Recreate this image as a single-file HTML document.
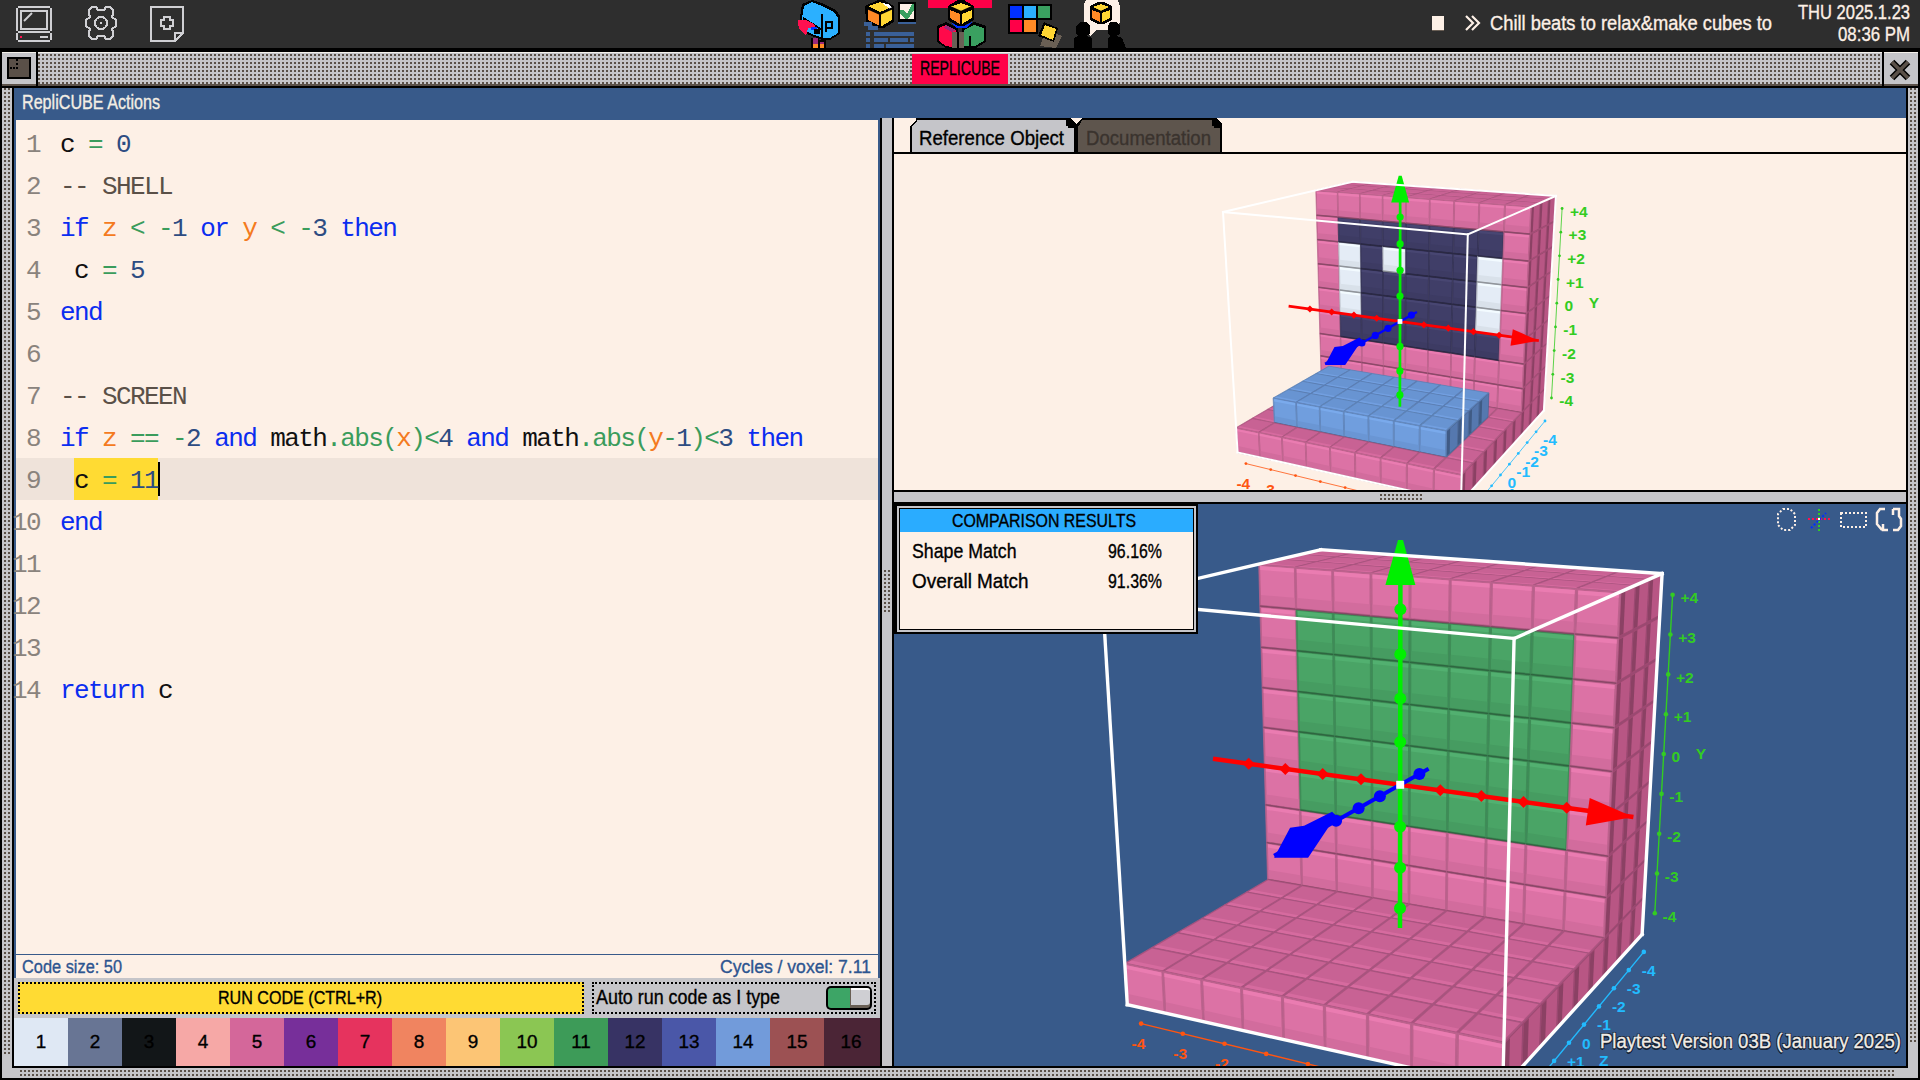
<!DOCTYPE html>
<html><head><meta charset="utf-8">
<style>
*{margin:0;padding:0;box-sizing:border-box}
html,body{width:1920px;height:1080px;overflow:hidden;background:#000;font-family:"Liberation Sans",sans-serif}
.a{position:absolute}
.dots{background-color:#5a5048;background-image:linear-gradient(90deg,transparent 2px,#c5c5c9 2px),linear-gradient(transparent 2px,#c5c5c9 2px);background-size:4px 4px}
.mono{font-family:"Liberation Mono",monospace}
.t{position:absolute;white-space:pre;line-height:1.117;transform-origin:0 0;-webkit-text-stroke:0.35px currentColor}
.code{font-size:26px;letter-spacing:-1.6px;color:#111}
.ln{height:42px;line-height:42px;white-space:pre;position:relative;width:862px}
.ln i{font-style:normal;color:#8a837d;position:absolute;right:838px;top:0}
.ln b{font-weight:normal;position:absolute;left:44px;top:0}
k{color:#0b2df0}v{color:#f47a20}o{color:#3a9c5c}n{color:#2d4c82}c{color:#5a5048}
.sw{position:absolute;top:1018px;height:48px;width:54px}
.dotb{position:absolute;border:2px dotted #000}
</style></head><body>
<!-- top bar -->
<div class="a" style="left:0;top:0;width:1920px;height:48px;background:#2e2e2e"></div>
<svg class="a" style="left:0;top:0" width="1920" height="48" viewBox="0 0 1920 48">
 <g fill="none" stroke="#cfcfd3" stroke-width="2" shape-rendering="crispEdges">
  <path d="M18,7 H50 M17,8 V31 M51,8 V31 M18,32 H50 M17,33 V40 M51,33 V40 M18,41 H50"/>
  <rect x="21" y="11" width="26" height="18"/>
  <path d="M92,7 H96 L98,10 H104 L106,7 H110 L113,10 V14 L112,17 L116,20 V26 L112,29 L113,32 V36 L110,39 H106 L104,36 H98 L96,39 H92 L89,36 V32 L90,29 L86,26 V20 L90,17 L89,14 V10 Z"/>
  <circle cx="101" cy="23" r="6"/>
  <path d="M151,7 H183 V33 L175,41 H151 Z M175,41 V33 H183"/>
  <path d="M164,17 H170 V20 H173 V26 H170 V29 H164 V26 H161 V20 H164 Z"/>
 </g>
 <path d="M24,21 L32,13" stroke="#cfcfd3" stroke-width="2"/>
 <rect x="20" y="36" width="2" height="2" fill="#ff1050"/>
 <rect x="40" y="36" width="8" height="2" fill="#cfcfd3"/>
 <rect x="100" y="22" width="2" height="2" fill="#cfcfd3"/>
 <!-- mailbox -->
 <g shape-rendering="crispEdges">
  <polygon points="802,4 812,0 824,4 836,10 840,16 840,34 830,40 822,40 812,36 802,32 800,18" fill="#000"/>
  <polygon points="804,6 812,2 822,6 834,12 838,18 838,33 830,38 823,38 812,34 804,30 802,18" fill="#2bb0ff"/>
  <polygon points="822,14 826,12 834,16 836,20 836,32 830,36 826,36 822,34" fill="#000" opacity="0.0"/>
  <path d="M803,18 L822,30 M822,14 V38" stroke="#000" stroke-width="2"/>
  <path d="M826,32 V22 H832 V28 H826" stroke="#000" stroke-width="1.6" fill="none"/>
  <polygon points="798,20 806,20 814,24 816,28 808,28 806,36 800,30 798,24" fill="#ff1050"/>
  <rect x="811" y="27" width="6" height="3" fill="#0030ff"/>
  <rect x="814" y="29" width="6" height="5" fill="#000"/>
  <rect x="811" y="38" width="8" height="10" fill="#000"/><rect x="813" y="38" width="5" height="6" fill="#9b2a7a"/><rect x="813" y="44" width="5" height="4" fill="#ff8a26"/>
  <rect x="819" y="40" width="7" height="8" fill="#000"/><rect x="820" y="42" width="4" height="2" fill="#9b2a7a"/><rect x="820" y="44" width="4" height="4" fill="#ff8a26"/>
 </g>
 <!-- cube + check + list -->
 <g shape-rendering="crispEdges">
  <polygon points="878,0 884,0 894,6 894,22 884,28 878,28 866,22 865,6" fill="#000"/>
  <polygon points="868,8 880,14 880,26 868,20" fill="#ff8a26"/>
  <polygon points="880,14 892,8 892,20 882,26 880,26" fill="#ffd633"/>
  <polygon points="868,6 880,2 892,7 880,12" fill="#ffd633"/>
  <polygon points="882,3 888,4 892,8 890,9" fill="#fff"/>
  <rect x="864" y="22" width="8" height="4" fill="#3a6098"/><rect x="868" y="26" width="10" height="4" fill="#3a6098"/>
  <rect x="898" y="2" width="18" height="20" fill="#000"/><rect x="900" y="4" width="14" height="15" fill="#fdf0e6"/>
  <polygon points="900,10 904,10 907,14 912,4 914,4 914,10 908,19 905,19 900,14" fill="#3aa060"/>
  <rect x="898" y="22" width="18" height="2" fill="#3a6098"/>
  <rect x="866" y="32" width="4" height="4" fill="#3a6098"/><rect x="874" y="32" width="40" height="4" fill="#3a6098"/>
  <rect x="866" y="38" width="4" height="4" fill="#3a6098"/><rect x="874" y="38" width="14" height="4" fill="#3a6098"/><rect x="890" y="38" width="18" height="4" fill="#3a6098"/><rect x="910" y="38" width="4" height="4" fill="#3a6098"/>
  <rect x="866" y="44" width="4" height="4" fill="#3a6098"/><rect x="874" y="44" width="10" height="4" fill="#3a6098"/><rect x="886" y="44" width="28" height="4" fill="#3a6098"/>
 </g>
 <path d="M867,8 L880,14 L893,8 M880,14 V27" stroke="#000" stroke-width="2" fill="none"/>
 <!-- selected trio -->
 <g shape-rendering="crispEdges">
  <rect x="928" y="0" width="64" height="8" fill="#ff0048"/>
  <polygon points="958,0 964,0 974,6 974,20 964,26 958,26 948,20 948,6" fill="#000"/>
  <polygon points="950,10 960,14 960,24 950,18" fill="#ff8a26"/>
  <polygon points="962,14 972,10 972,18 962,24" fill="#ffd633"/>
  <polygon points="950,7 961,3 972,7 961,12" fill="#ffd633"/>
  <polygon points="937,26 946,22 958,28 958,48 946,48 937,42" fill="#000"/>
  <polygon points="939,28 946,25 956,30 956,48 946,46 939,41" fill="#ff0a4a"/>
  <polygon points="946,25 956,30 952,32 944,28" fill="#9b2a7a"/>
  <polygon points="962,28 974,22 986,26 986,42 976,48 962,48" fill="#000"/>
  <polygon points="964,30 974,25 984,28 984,41 975,46 964,46" fill="#3aa060"/>
  <rect x="952" y="32" width="12" height="16" fill="#6a6055"/>
  <path d="M958,32 V48 M970,36 V48" stroke="#000" stroke-width="2"/>
  <polygon points="950,22 958,26 964,26 972,22 966,28 956,28" fill="#0030ff"/>
 </g>
 <path d="M950,7 L961,12 L972,7 M961,12 V25" stroke="#000" stroke-width="2" fill="none"/>
 <!-- colour grid -->
 <g shape-rendering="crispEdges">
  <rect x="1008" y="4" width="44" height="16" fill="#000"/><rect x="1008" y="18" width="30" height="16" fill="#000"/>
  <rect x="1010" y="6" width="12" height="12" fill="#0030ff"/><rect x="1024" y="6" width="12" height="12" fill="#2bb0ff"/><rect x="1038" y="6" width="12" height="12" fill="#3aa060"/>
  <rect x="1010" y="20" width="12" height="12" fill="#ff0048"/><rect x="1024" y="20" width="12" height="12" fill="#ff8a26"/>
  <polygon points="1046,30 1062,36 1056,48 1040,46" fill="#6a6055"/>
  <polygon points="1044,22 1058,28 1054,42 1038,36" fill="#000"/>
  <polygon points="1045,25 1056,29 1053,40 1041,35" fill="#ffd633"/>
 </g>
 <!-- speech bubble people -->
 <g shape-rendering="crispEdges">
  <polygon points="1086,0 1118,0 1120,6 1120,22 1112,30 1096,30 1090,36 1088,34 1084,24 1084,4" fill="#fdf0e6"/>
  <polygon points="1098,2 1104,2 1112,6 1112,20 1104,24 1098,24 1090,20 1090,6" fill="#000"/>
  <polygon points="1092,10 1100,13 1100,22 1092,18" fill="#ff8a26"/>
  <polygon points="1102,13 1110,10 1110,18 1102,22" fill="#ffd633"/>
  <polygon points="1093,7 1101,4 1109,7 1101,11" fill="#ffd633"/>
  <polygon points="1080,22 1086,22 1090,26 1090,34 1086,36 1092,38 1092,48 1074,48 1074,38 1078,36 1076,34 1076,26" fill="#000"/>
  <polygon points="1110,22 1116,22 1120,26 1120,34 1116,36 1122,38 1126,48 1108,48 1108,38 1110,36 1108,34 1108,26" fill="#000"/>
 </g>
 <path d="M1092,8 L1101,12 L1110,8 M1101,12 V23" stroke="#000" stroke-width="2" fill="none"/>
 <!-- right side -->
 <rect x="1432" y="16" width="12" height="14" fill="#fdf0e6"/><rect x="1432" y="30" width="12" height="1" fill="#6a5f55"/>
 <path d="M1466,16 L1473,23 L1466,30 M1472,16 L1479,23 L1472,30" stroke="#fdf0e6" stroke-width="2.2" fill="none"/>
</svg>
<!-- title bar -->
<div class="a" style="left:2px;top:52px;width:34px;height:34px;background:#c5c5c9;border-top:1px solid #f4f0ea;border-bottom:2px solid #5a5048"></div>
<div class="a" style="left:7px;top:57px;width:24px;height:22px;background:#5a5048;border:2px solid #000"></div>
<div class="a" style="left:16px;top:59px;width:2px;height:2px;background:#000"></div><div class="a" style="left:16px;top:63px;width:2px;height:2px;background:#000"></div>
<div class="a" style="left:10px;top:67px;width:2px;height:2px;background:#000"></div><div class="a" style="left:13px;top:67px;width:2px;height:2px;background:#000"></div><div class="a" style="left:16px;top:67px;width:2px;height:2px;background:#000"></div>
<div class="a dots" style="left:38px;top:52px;width:1844px;height:32px;background-position:0 2px"></div>
<div class="a" style="left:38px;top:52px;width:1844px;height:1px;background:#f4f0ea"></div>
<div class="a" style="left:38px;top:84px;width:1844px;height:2px;background:#5a5048"></div>
<div class="a" style="left:912px;top:54px;width:96px;height:30px;background:#ff0048"></div>
<div class="a" style="left:1884px;top:52px;width:34px;height:34px;background:#c5c5c9;border-top:1px solid #f4f0ea;border-bottom:2px solid #5a5048"></div>
<svg class="a" style="left:1884px;top:52px" width="34" height="34"><path d="M8,10 L24,26 M24,10 L8,26" stroke="#000" stroke-width="6.5"/><path d="M8,10 L24,26 M24,10 L8,26" stroke="#5a5048" stroke-width="3.5"/></svg>
<!-- frame dotted borders -->
<div class="a dots" style="left:2px;top:88px;width:10px;height:980px;background-position:2px 0"></div>
<div class="a dots" style="left:1908px;top:88px;width:10px;height:980px;background-position:2px 0"></div>
<div class="a dots" style="left:2px;top:1068px;width:1916px;height:10px;background-position:2px 2px"></div>
<div class="a" style="left:2px;top:1056px;width:10px;height:22px;background:#c5c5c9"></div>
<div class="a" style="left:12px;top:1068px;width:8px;height:10px;background:#c5c5c9"></div>
<div class="a" style="left:1908px;top:1044px;width:10px;height:34px;background:#c5c5c9"></div>
<div class="a" style="left:1896px;top:1068px;width:12px;height:10px;background:#c5c5c9"></div>
<!-- blue header -->
<div class="a" style="left:14px;top:88px;width:1892px;height:30px;background:#385a8a"></div>
<!-- code panel -->
<div class="a" style="left:14px;top:118px;width:866px;height:860px;background:#fdf0e6;border:2px solid #385a8a;border-bottom:none"></div>
<div class="a" style="left:14px;top:954px;width:866px;height:1px;background:#385a8a"></div>
<div class="a" style="left:16px;top:458px;width:862px;height:42px;background:#efe3da"></div>
<div class="a" style="left:74px;top:458px;width:84px;height:42px;background:#ffdb33"></div>
<div class="a" style="left:158px;top:462px;width:2px;height:34px;background:#000"></div>
<div class="a mono code" style="left:16px;top:123.6px">
<div class="ln"><i>1</i><b>c <o>=</o> <n>0</n></b></div>
<div class="ln"><i>2</i><b><c>-- SHELL</c></b></div>
<div class="ln"><i>3</i><b><k>if</k> <v>z</v> <o>&lt;</o> <o>-</o><n>1</n> <k>or</k> <v>y</v> <o>&lt;</o> <o>-</o><n>3</n> <k>then</k></b></div>
<div class="ln"><i>4</i><b> c <o>=</o> <n>5</n></b></div>
<div class="ln"><i>5</i><b><k>end</k></b></div>
<div class="ln"><i>6</i><b></b></div>
<div class="ln"><i>7</i><b><c>-- SCREEN</c></b></div>
<div class="ln"><i>8</i><b><k>if</k> <v>z</v> <o>==</o> <o>-</o><n>2</n> <k>and</k> math<o>.abs(</o><v>x</v><o>)&lt;</o><n>4</n> <k>and</k> math<o>.abs(</o><v>y</v><o>-</o><n>1</n><o>)&lt;</o><n>3</n> <k>then</k></b></div>
<div class="ln"><i>9</i><b> c <o>=</o> <n>11</n></b></div>
<div class="ln"><i>10</i><b><k>end</k></b></div>
<div class="ln"><i>11</i><b></b></div>
<div class="ln"><i>12</i><b></b></div>
<div class="ln"><i>13</i><b></b></div>
<div class="ln"><i>14</i><b><k>return</k> c</b></div>
</div>
<!-- grey control strip -->
<div class="a" style="left:14px;top:978px;width:866px;height:40px;background:#c5c5c9"></div>
<div class="dotb" style="left:18px;top:982px;width:566px;height:32px;background:#ffdb33"></div>
<div class="dotb" style="left:592px;top:982px;width:284px;height:32px"></div>
<div class="a" style="left:826px;top:986px;width:46px;height:24px;background:#000;border-radius:5px"></div>
<div class="a" style="left:828px;top:988px;width:22px;height:20px;background:#3da566;border-radius:3px 0 0 3px"></div>
<div class="a" style="left:850px;top:988px;width:20px;height:20px;background:#6a6055;border-radius:0 3px 3px 0"></div>
<div class="a" style="left:851px;top:988px;width:19px;height:17px;background:#cfcfd3;border-radius:0 3px 3px 0;border-top:2px solid #fff"></div>
<!-- palette -->
<div class="sw" style="left:14px;background:#dfe8f4"></div>
<div class="sw" style="left:68px;background:#687594"></div>
<div class="sw" style="left:122px;background:#121618"></div>
<div class="sw" style="left:176px;background:#f6a8a6"></div>
<div class="sw" style="left:230px;background:#d4679a"></div>
<div class="sw" style="left:284px;background:#772f9a"></div>
<div class="sw" style="left:338px;background:#e6335e"></div>
<div class="sw" style="left:392px;background:#f08460"></div>
<div class="sw" style="left:446px;background:#fcc575"></div>
<div class="sw" style="left:500px;background:#8bc653"></div>
<div class="sw" style="left:554px;background:#3d9b58"></div>
<div class="sw" style="left:608px;background:#373364"></div>
<div class="sw" style="left:662px;background:#4a57a8"></div>
<div class="sw" style="left:716px;background:#729bda"></div>
<div class="sw" style="left:770px;background:#9c5153"></div>
<div class="sw" style="left:824px;width:56px;background:#4b2536"></div>
<!-- vertical splitter -->
<div class="a" style="left:882px;top:118px;width:10px;height:948px;background:#c5c5c9"></div>
<div class="a dots" style="left:883px;top:570px;width:8px;height:44px;background-position:1px 0"></div>
<!-- right top panel -->
<div class="a" style="left:894px;top:118px;width:1012px;height:372px;background:#fdf0e6;overflow:hidden">
<svg class="a" style="left:-894px;top:-118px" width="1920" height="1080">
<defs><clipPath id="ct"><rect x="894" y="154" width="1012" height="336"/></clipPath></defs>
<g clip-path="url(#ct)" font-family="Liberation Sans" font-weight="bold">
<polygon points="1352.7,181.7 1341.0,184.4 1362.0,185.9 1373.4,183.1" fill="#ac547f" stroke="#ac547f" stroke-width="0.7"/>
<polygon points="1353.1,181.8 1342.3,184.3 1361.6,185.7 1372.1,183.1" fill="#c86294"/>
<polygon points="1342.3,184.3 1361.6,185.7 1363.3,185.3 1344.1,183.9" fill="#d66b9f"/>
<polygon points="1321.1,377.9 1341.5,381.5 1341.0,359.2 1320.5,355.8" fill="#bd628d" stroke="#bd628d" stroke-width="0.7"/>
<polygon points="1321.9,377.2 1340.6,380.4 1340.2,359.9 1321.3,356.9" fill="#dc72a5"/>
<polygon points="1321.3,356.9 1340.2,359.9 1340.2,362.0 1321.4,358.9" fill="#ea7cb1"/>
<polygon points="1321.7,372.1 1340.5,375.3 1340.6,380.4 1321.9,377.2" fill="#d26c9d"/>
<line x1="1321.1" y1="377.9" x2="1341.5" y2="381.5" stroke="#63334a" stroke-width="1.5" opacity="0.55"/>
<polygon points="1373.4,183.1 1362.0,185.9 1383.5,187.4 1394.5,184.6" fill="#ac547f" stroke="#ac547f" stroke-width="0.7"/>
<polygon points="1373.8,183.3 1363.3,185.9 1383.1,187.3 1393.2,184.6" fill="#c86294"/>
<polygon points="1363.3,185.9 1383.1,187.3 1384.7,186.8 1365.0,185.4" fill="#d66b9f"/>
<polygon points="1321.1,377.9 1308.6,385.3 1329.3,389.0 1341.5,381.5" fill="#ac547f" stroke="#ac547f" stroke-width="0.7"/>
<polygon points="1321.4,378.4 1309.9,385.1 1329.0,388.5 1340.2,381.6" fill="#c86294"/>
<polygon points="1309.9,385.1 1329.0,388.5 1330.8,387.4 1311.8,384.0" fill="#d66b9f"/>
<polygon points="1320.5,355.8 1341.0,359.2 1340.5,336.5 1319.8,333.4" fill="#bd628d" stroke="#bd628d" stroke-width="0.7"/>
<polygon points="1321.2,355.1 1340.1,358.1 1339.7,337.3 1320.7,334.4" fill="#dc72a5"/>
<polygon points="1320.7,334.4 1339.7,337.3 1339.8,339.4 1320.7,336.5" fill="#ea7cb1"/>
<polygon points="1321.1,349.9 1340.0,352.9 1340.1,358.1 1321.2,355.1" fill="#d26c9d"/>
<line x1="1320.5" y1="355.8" x2="1341.0" y2="359.2" stroke="#63334a" stroke-width="1.5" opacity="0.55"/>
<polygon points="1341.5,381.5 1362.3,385.1 1362.0,362.6 1341.0,359.2" fill="#bd628d" stroke="#bd628d" stroke-width="0.7"/>
<polygon points="1342.3,380.7 1361.4,384.1 1361.1,363.3 1341.8,360.2" fill="#dc72a5"/>
<polygon points="1341.8,360.2 1361.1,363.3 1361.2,365.4 1341.9,362.3" fill="#ea7cb1"/>
<polygon points="1342.2,375.6 1361.3,378.9 1361.4,384.1 1342.3,380.7" fill="#d26c9d"/>
<line x1="1341.5" y1="381.5" x2="1362.3" y2="385.1" stroke="#63334a" stroke-width="1.5" opacity="0.55"/>
<polygon points="1341.0,184.4 1328.7,187.3 1350.1,188.9 1362.0,185.9" fill="#ac547f" stroke="#ac547f" stroke-width="0.7"/>
<polygon points="1341.3,184.6 1330.0,187.2 1349.7,188.7 1360.7,186.0" fill="#c86294"/>
<polygon points="1330.0,187.2 1349.7,188.7 1351.5,188.2 1331.9,186.8" fill="#d66b9f"/>
<polygon points="1394.5,184.6 1383.5,187.4 1405.4,189.0 1416.0,186.1" fill="#ac547f" stroke="#ac547f" stroke-width="0.7"/>
<polygon points="1394.9,184.7 1384.8,187.4 1405.0,188.8 1414.8,186.1" fill="#c86294"/>
<polygon points="1384.8,187.4 1405.0,188.8 1406.6,188.4 1386.4,187.0" fill="#d66b9f"/>
<polygon points="1319.8,333.4 1340.5,336.5 1340.1,313.4 1319.2,310.5" fill="#bd628d" stroke="#bd628d" stroke-width="0.7"/>
<polygon points="1320.6,332.6 1339.7,335.4 1339.2,314.2 1320.0,311.6" fill="#dc72a5"/>
<polygon points="1320.0,311.6 1339.2,314.2 1339.3,316.4 1320.1,313.7" fill="#ea7cb1"/>
<polygon points="1320.5,327.4 1339.6,330.2 1339.7,335.4 1320.6,332.6" fill="#d26c9d"/>
<line x1="1319.8" y1="333.4" x2="1340.5" y2="336.5" stroke="#63334a" stroke-width="1.5" opacity="0.55"/>
<polygon points="1341.5,381.5 1329.3,389.0 1350.5,392.8 1362.3,385.1" fill="#ac547f" stroke="#ac547f" stroke-width="0.7"/>
<polygon points="1341.8,381.9 1330.6,388.8 1350.1,392.3 1361.0,385.2" fill="#c86294"/>
<polygon points="1330.6,388.8 1350.1,392.3 1351.9,391.1 1332.4,387.7" fill="#d66b9f"/>
<polygon points="1543.9,410.5 1545.2,388.3 1537.7,396.0 1536.5,418.7" fill="#9e4971" stroke="#9e4971" stroke-width="0.7"/>
<polygon points="1543.7,409.9 1544.8,389.5 1537.9,396.6 1536.8,417.5" fill="#b85684"/>
<polygon points="1536.8,417.5 1537.9,396.6 1540.0,394.5 1538.9,415.2" fill="#8b4164"/>
<polygon points="1341.0,359.2 1362.0,362.6 1361.7,339.7 1340.5,336.5" fill="#bd628d" stroke="#bd628d" stroke-width="0.7"/>
<polygon points="1341.8,358.4 1361.1,361.5 1360.8,340.5 1341.4,337.5" fill="#dc72a5"/>
<polygon points="1341.4,337.5 1360.8,340.5 1360.9,342.6 1341.4,339.6" fill="#ea7cb1"/>
<polygon points="1341.7,353.2 1361.1,356.3 1361.1,361.5 1341.8,358.4" fill="#d26c9d"/>
<line x1="1341.0" y1="359.2" x2="1362.0" y2="362.6" stroke="#63334a" stroke-width="1.5" opacity="0.55"/>
<polygon points="1319.2,310.5 1340.1,313.4 1339.6,290.0 1318.5,287.3" fill="#bd628d" stroke="#bd628d" stroke-width="0.7"/>
<polygon points="1320.0,309.7 1339.2,312.4 1338.7,290.8 1319.4,288.3" fill="#dc72a5"/>
<polygon points="1319.4,288.3 1338.7,290.8 1338.8,293.0 1319.5,290.5" fill="#ea7cb1"/>
<polygon points="1319.8,304.4 1339.1,307.0 1339.2,312.4 1320.0,309.7" fill="#d26c9d"/>
<line x1="1319.2" y1="310.5" x2="1340.1" y2="313.4" stroke="#63334a" stroke-width="1.5" opacity="0.55"/>
<polygon points="1362.3,385.1 1383.5,388.8 1383.4,366.1 1362.0,362.6" fill="#bd628d" stroke="#bd628d" stroke-width="0.7"/>
<polygon points="1363.1,384.3 1382.7,387.7 1382.6,366.8 1362.8,363.6" fill="#dc72a5"/>
<polygon points="1362.8,363.6 1382.6,366.8 1382.6,368.9 1362.9,365.7" fill="#ea7cb1"/>
<polygon points="1363.0,379.2 1382.6,382.5 1382.7,387.7 1363.1,384.3" fill="#d26c9d"/>
<line x1="1362.3" y1="385.1" x2="1383.5" y2="388.8" stroke="#63334a" stroke-width="1.5" opacity="0.55"/>
<polygon points="1362.0,185.9 1350.1,188.9 1371.9,190.5 1383.5,187.4" fill="#ac547f" stroke="#ac547f" stroke-width="0.7"/>
<polygon points="1362.4,186.1 1351.4,188.8 1371.5,190.3 1382.2,187.5" fill="#c86294"/>
<polygon points="1351.4,188.8 1371.5,190.3 1373.3,189.8 1353.2,188.4" fill="#d66b9f"/>
<polygon points="1416.0,186.1 1405.4,189.0 1427.9,190.6 1438.1,187.6" fill="#ac547f" stroke="#ac547f" stroke-width="0.7"/>
<polygon points="1416.5,186.3 1406.7,189.0 1427.4,190.4 1436.8,187.7" fill="#c86294"/>
<polygon points="1406.7,189.0 1427.4,190.4 1428.9,190.0 1408.3,188.5" fill="#d66b9f"/>
<polygon points="1308.6,385.3 1295.5,392.9 1316.5,396.8 1329.3,389.0" fill="#ac547f" stroke="#ac547f" stroke-width="0.7"/>
<polygon points="1308.9,385.7 1296.8,392.8 1316.2,396.3 1328.0,389.1" fill="#c86294"/>
<polygon points="1296.8,392.8 1316.2,396.3 1318.1,395.2 1298.8,391.6" fill="#d66b9f"/>
<polygon points="1340.5,336.5 1361.7,339.7 1361.4,316.4 1340.1,313.4" fill="#373559" stroke="#373559" stroke-width="0.7"/>
<polygon points="1341.4,335.7 1360.8,338.6 1360.5,317.2 1340.9,314.5" fill="#403e68"/>
<polygon points="1340.9,314.5 1360.5,317.2 1360.6,319.4 1341.0,316.6" fill="#484672"/>
<polygon points="1341.2,330.4 1360.8,333.3 1360.8,338.6 1341.4,335.7" fill="#3d3b63"/>
<line x1="1340.5" y1="336.5" x2="1361.7" y2="339.7" stroke="#1c1b2e" stroke-width="1.5" opacity="0.55"/>
<polygon points="1545.2,388.3 1546.4,365.6 1538.9,372.9 1537.7,396.0" fill="#9e4971" stroke="#9e4971" stroke-width="0.7"/>
<polygon points="1544.9,387.7 1546.1,366.8 1539.2,373.6 1538.0,394.8" fill="#b85684"/>
<polygon points="1538.0,394.8 1539.2,373.6 1541.3,371.5 1540.1,392.6" fill="#8b4164"/>
<polygon points="1318.5,287.3 1339.6,290.0 1339.1,266.1 1317.9,263.7" fill="#bd628d" stroke="#bd628d" stroke-width="0.7"/>
<polygon points="1319.3,286.5 1338.7,288.9 1338.2,266.9 1318.7,264.7" fill="#dc72a5"/>
<polygon points="1318.7,264.7 1338.2,266.9 1338.3,269.2 1318.8,266.9" fill="#ea7cb1"/>
<polygon points="1319.2,281.1 1338.6,283.4 1338.7,288.9 1319.3,286.5" fill="#d26c9d"/>
<line x1="1318.5" y1="287.3" x2="1339.6" y2="290.0" stroke="#63334a" stroke-width="1.5" opacity="0.55"/>
<polygon points="1362.3,385.1 1350.5,392.8 1372.1,396.6 1383.5,388.8" fill="#ac547f" stroke="#ac547f" stroke-width="0.7"/>
<polygon points="1362.7,385.5 1351.8,392.6 1371.7,396.1 1382.2,388.9" fill="#c86294"/>
<polygon points="1351.8,392.6 1371.7,396.1 1373.4,395.0 1353.6,391.4" fill="#d66b9f"/>
<polygon points="1362.0,362.6 1383.4,366.1 1383.3,342.9 1361.7,339.7" fill="#bd628d" stroke="#bd628d" stroke-width="0.7"/>
<polygon points="1362.8,361.8 1382.6,365.0 1382.4,343.7 1362.6,340.7" fill="#dc72a5"/>
<polygon points="1362.6,340.7 1382.4,343.7 1382.5,345.9 1362.6,342.8" fill="#ea7cb1"/>
<polygon points="1362.8,356.6 1382.5,359.7 1382.6,365.0 1362.8,361.8" fill="#d26c9d"/>
<line x1="1362.0" y1="362.6" x2="1383.4" y2="366.1" stroke="#63334a" stroke-width="1.5" opacity="0.55"/>
<polygon points="1317.9,263.7 1339.1,266.1 1338.6,241.8 1317.2,239.6" fill="#bd628d" stroke="#bd628d" stroke-width="0.7"/>
<polygon points="1318.7,262.8 1338.2,265.0 1337.7,242.7 1318.1,240.7" fill="#dc72a5"/>
<polygon points="1318.1,240.7 1337.7,242.7 1337.8,244.9 1318.1,242.9" fill="#ea7cb1"/>
<polygon points="1318.5,257.3 1338.1,259.5 1338.2,265.0 1318.7,262.8" fill="#d26c9d"/>
<line x1="1317.9" y1="263.7" x2="1339.1" y2="266.1" stroke="#63334a" stroke-width="1.5" opacity="0.55"/>
<polygon points="1328.7,187.3 1315.8,190.3 1337.6,191.9 1350.1,188.9" fill="#ac547f" stroke="#ac547f" stroke-width="0.7"/>
<polygon points="1329.0,187.5 1317.2,190.2 1337.2,191.8 1348.7,188.9" fill="#c86294"/>
<polygon points="1317.2,190.2 1337.2,191.8 1339.1,191.3 1319.1,189.8" fill="#d66b9f"/>
<polygon points="1383.5,388.8 1405.3,392.6 1405.3,369.6 1383.4,366.1" fill="#bd628d" stroke="#bd628d" stroke-width="0.7"/>
<polygon points="1384.4,388.0 1404.4,391.5 1404.5,370.4 1384.3,367.1" fill="#dc72a5"/>
<polygon points="1384.3,367.1 1404.5,370.4 1404.5,372.5 1384.3,369.2" fill="#ea7cb1"/>
<polygon points="1384.4,382.8 1404.4,386.3 1404.4,391.5 1384.4,388.0" fill="#d26c9d"/>
<line x1="1383.5" y1="388.8" x2="1405.3" y2="392.6" stroke="#63334a" stroke-width="1.5" opacity="0.55"/>
<polygon points="1340.1,313.4 1361.4,316.4 1361.1,292.7 1339.6,290.0" fill="#c4cad3" stroke="#c4cad3" stroke-width="0.7"/>
<polygon points="1340.9,312.6 1360.5,315.3 1360.2,293.5 1340.4,291.0" fill="#e4ecf6"/>
<polygon points="1340.4,291.0 1360.2,293.5 1360.3,295.7 1340.5,293.2" fill="#f3fbff"/>
<polygon points="1340.8,307.2 1360.4,309.9 1360.5,315.3 1340.9,312.6" fill="#d9e1ea"/>
<line x1="1340.1" y1="313.4" x2="1361.4" y2="316.4" stroke="#666a6e" stroke-width="1.5" opacity="0.55"/>
<polygon points="1438.1,187.6 1427.9,190.6 1450.8,192.3 1460.6,189.2" fill="#ac547f" stroke="#ac547f" stroke-width="0.7"/>
<polygon points="1438.6,187.8 1429.2,190.6 1450.3,192.1 1459.3,189.3" fill="#c86294"/>
<polygon points="1429.2,190.6 1450.3,192.1 1451.8,191.6 1430.7,190.1" fill="#d66b9f"/>
<polygon points="1546.4,365.6 1547.7,342.6 1540.1,349.4 1538.9,372.9" fill="#9e4971" stroke="#9e4971" stroke-width="0.7"/>
<polygon points="1546.2,365.0 1547.4,343.8 1540.4,350.1 1539.3,371.7" fill="#b85684"/>
<polygon points="1539.3,371.7 1540.4,350.1 1542.5,348.2 1541.4,369.7" fill="#8b4164"/>
<polygon points="1383.5,187.4 1371.9,190.5 1394.3,192.1 1405.4,189.0" fill="#ac547f" stroke="#ac547f" stroke-width="0.7"/>
<polygon points="1383.9,187.6 1373.3,190.4 1393.8,191.9 1404.1,189.1" fill="#c86294"/>
<polygon points="1373.3,190.4 1393.8,191.9 1395.5,191.5 1375.0,190.0" fill="#d66b9f"/>
<polygon points="1317.2,239.6 1338.6,241.8 1338.1,217.1 1316.5,215.2" fill="#bd628d" stroke="#bd628d" stroke-width="0.7"/>
<polygon points="1318.0,238.7 1337.7,240.7 1337.2,218.0 1317.4,216.2" fill="#dc72a5"/>
<polygon points="1317.4,216.2 1337.2,218.0 1337.3,220.3 1317.4,218.5" fill="#ea7cb1"/>
<polygon points="1317.9,233.2 1337.6,235.1 1337.7,240.7 1318.0,238.7" fill="#d26c9d"/>
<line x1="1317.2" y1="239.6" x2="1338.6" y2="241.8" stroke="#63334a" stroke-width="1.5" opacity="0.55"/>
<polygon points="1361.7,339.7 1383.3,342.9 1383.2,319.4 1361.4,316.4" fill="#373559" stroke="#373559" stroke-width="0.7"/>
<polygon points="1362.5,338.9 1382.4,341.9 1382.3,320.2 1362.3,317.4" fill="#403e68"/>
<polygon points="1362.3,317.4 1382.3,320.2 1382.3,322.4 1362.3,319.6" fill="#484672"/>
<polygon points="1362.5,333.5 1382.4,336.5 1382.4,341.9 1362.5,338.9" fill="#3d3b63"/>
<line x1="1361.7" y1="339.7" x2="1383.3" y2="342.9" stroke="#1c1b2e" stroke-width="1.5" opacity="0.55"/>
<polygon points="1383.5,388.8 1372.1,396.6 1394.2,400.6 1405.3,392.6" fill="#ac547f" stroke="#ac547f" stroke-width="0.7"/>
<polygon points="1384.0,389.2 1373.5,396.5 1393.8,400.1 1404.0,392.7" fill="#c86294"/>
<polygon points="1373.5,396.5 1393.8,400.1 1395.5,398.9 1375.2,395.3" fill="#d66b9f"/>
<polygon points="1339.6,290.0 1361.1,292.7 1360.8,268.6 1339.1,266.1" fill="#c4cad3" stroke="#c4cad3" stroke-width="0.7"/>
<polygon points="1340.4,289.1 1360.2,291.6 1359.9,269.4 1340.0,267.1" fill="#e4ecf6"/>
<polygon points="1340.0,267.1 1359.9,269.4 1359.9,271.7 1340.0,269.4" fill="#f3fbff"/>
<polygon points="1340.3,283.7 1360.1,286.1 1360.2,291.6 1340.4,289.1" fill="#d9e1ea"/>
<line x1="1339.6" y1="290.0" x2="1361.1" y2="292.7" stroke="#666a6e" stroke-width="1.5" opacity="0.55"/>
<polygon points="1536.5,418.7 1537.7,396.0 1529.8,404.2 1528.6,427.4" fill="#9e4971" stroke="#9e4971" stroke-width="0.7"/>
<polygon points="1536.2,418.2 1537.3,397.3 1530.1,404.8 1529.0,426.1" fill="#b85684"/>
<polygon points="1529.0,426.1 1530.1,404.8 1532.3,402.5 1531.2,423.7" fill="#8b4164"/>
<polygon points="1383.4,366.1 1405.3,369.6 1405.4,346.3 1383.3,342.9" fill="#bd628d" stroke="#bd628d" stroke-width="0.7"/>
<polygon points="1384.3,365.3 1404.5,368.5 1404.5,347.1 1384.2,344.0" fill="#dc72a5"/>
<polygon points="1384.2,344.0 1404.5,347.1 1404.5,349.2 1384.2,346.1" fill="#ea7cb1"/>
<polygon points="1384.3,360.0 1404.5,363.2 1404.5,368.5 1384.3,365.3" fill="#d26c9d"/>
<line x1="1383.4" y1="366.1" x2="1405.3" y2="369.6" stroke="#63334a" stroke-width="1.5" opacity="0.55"/>
<polygon points="1316.5,215.2 1338.1,217.1 1337.6,191.9 1315.8,190.3" fill="#bd628d" stroke="#bd628d" stroke-width="0.7"/>
<polygon points="1317.3,214.3 1337.2,216.0 1336.7,192.9 1316.7,191.4" fill="#dc72a5"/>
<polygon points="1316.7,191.4 1336.7,192.9 1336.8,195.2 1316.8,193.7" fill="#ea7cb1"/>
<polygon points="1317.2,208.6 1337.1,210.3 1337.2,216.0 1317.3,214.3" fill="#d26c9d"/>
<line x1="1316.5" y1="215.2" x2="1338.1" y2="217.1" stroke="#63334a" stroke-width="1.5" opacity="0.55"/>
<polygon points="1547.7,342.6 1549.0,319.2 1541.4,325.5 1540.1,349.4" fill="#9e4971" stroke="#9e4971" stroke-width="0.7"/>
<polygon points="1547.5,342.0 1548.7,320.4 1541.7,326.2 1540.5,348.2" fill="#b85684"/>
<polygon points="1540.5,348.2 1541.7,326.2 1543.8,324.4 1542.6,346.3" fill="#8b4164"/>
<polygon points="1405.3,392.6 1427.5,396.4 1427.8,373.2 1405.3,369.6" fill="#bd628d" stroke="#bd628d" stroke-width="0.7"/>
<polygon points="1406.2,391.8 1426.6,395.4 1426.8,374.0 1406.2,370.7" fill="#dc72a5"/>
<polygon points="1406.2,370.7 1426.8,374.0 1426.8,376.2 1406.2,372.8" fill="#ea7cb1"/>
<polygon points="1406.2,386.6 1426.7,390.1 1426.6,395.4 1406.2,391.8" fill="#d26c9d"/>
<line x1="1405.3" y1="392.6" x2="1427.5" y2="396.4" stroke="#63334a" stroke-width="1.5" opacity="0.55"/>
<polygon points="1460.6,189.2 1450.8,192.3 1474.3,194.0 1483.6,190.8" fill="#ac547f" stroke="#ac547f" stroke-width="0.7"/>
<polygon points="1461.1,189.4 1452.2,192.2 1473.7,193.8 1482.3,190.9" fill="#c86294"/>
<polygon points="1452.2,192.2 1473.7,193.8 1475.1,193.3 1453.6,191.8" fill="#d66b9f"/>
<polygon points="1295.5,392.9 1281.7,401.0 1303.2,405.1 1316.5,396.8" fill="#ac547f" stroke="#ac547f" stroke-width="0.7"/>
<polygon points="1295.8,393.4 1283.1,400.8 1302.8,404.6 1315.2,397.0" fill="#c86294"/>
<polygon points="1283.1,400.8 1302.8,404.6 1304.8,403.3 1285.2,399.6" fill="#d66b9f"/>
<polygon points="1361.4,316.4 1383.2,319.4 1383.1,295.5 1361.1,292.7" fill="#373559" stroke="#373559" stroke-width="0.7"/>
<polygon points="1362.2,315.6 1382.3,318.3 1382.2,296.3 1362.0,293.7" fill="#403e68"/>
<polygon points="1362.0,293.7 1382.2,296.3 1382.2,298.5 1362.0,295.9" fill="#484672"/>
<polygon points="1362.2,310.1 1382.3,312.9 1382.3,318.3 1362.2,315.6" fill="#3d3b63"/>
<line x1="1361.4" y1="316.4" x2="1383.2" y2="319.4" stroke="#1c1b2e" stroke-width="1.5" opacity="0.55"/>
<polygon points="1339.1,266.1 1360.8,268.6 1360.5,244.0 1338.6,241.8" fill="#c4cad3" stroke="#c4cad3" stroke-width="0.7"/>
<polygon points="1339.9,265.2 1359.9,267.5 1359.6,244.9 1339.5,242.9" fill="#e4ecf6"/>
<polygon points="1339.5,242.9 1359.6,244.9 1359.6,247.2 1339.5,245.1" fill="#f3fbff"/>
<polygon points="1339.8,259.7 1359.8,261.9 1359.9,267.5 1339.9,265.2" fill="#d9e1ea"/>
<line x1="1339.1" y1="266.1" x2="1360.8" y2="268.6" stroke="#666a6e" stroke-width="1.5" opacity="0.55"/>
<polygon points="1350.1,188.9 1337.6,191.9 1359.8,193.6 1371.9,190.5" fill="#ac547f" stroke="#ac547f" stroke-width="0.7"/>
<polygon points="1350.5,189.0 1339.0,191.9 1359.4,193.4 1370.6,190.5" fill="#c86294"/>
<polygon points="1339.0,191.9 1359.4,193.4 1361.2,193.0 1340.8,191.4" fill="#d66b9f"/>
<polygon points="1328.7,366.2 1315.8,373.6 1337.6,377.3 1350.1,369.8" fill="#597fb4" stroke="#597fb4" stroke-width="0.7"/>
<polygon points="1329.1,366.6 1317.2,373.4 1337.2,376.8 1348.7,369.9" fill="#6894d2"/>
<polygon points="1317.2,373.4 1337.2,376.8 1339.1,375.7 1319.2,372.3" fill="#729fe0"/>
<polygon points="1405.4,189.0 1394.3,192.1 1417.2,193.8 1427.9,190.6" fill="#ac547f" stroke="#ac547f" stroke-width="0.7"/>
<polygon points="1405.9,189.2 1395.7,192.1 1416.7,193.6 1426.5,190.7" fill="#c86294"/>
<polygon points="1395.7,192.1 1416.7,193.6 1418.3,193.1 1397.3,191.6" fill="#d66b9f"/>
<polygon points="1537.7,396.0 1538.9,372.9 1531.0,380.6 1529.8,404.2" fill="#9e4971" stroke="#9e4971" stroke-width="0.7"/>
<polygon points="1537.4,395.4 1538.5,374.2 1531.3,381.2 1530.2,402.9" fill="#b85684"/>
<polygon points="1530.2,402.9 1531.3,381.2 1533.5,379.1 1532.4,400.7" fill="#8b4164"/>
<polygon points="1383.3,342.9 1405.4,346.3 1405.5,322.5 1383.2,319.4" fill="#373559" stroke="#373559" stroke-width="0.7"/>
<polygon points="1384.2,342.1 1404.5,345.2 1404.6,323.3 1384.1,320.5" fill="#403e68"/>
<polygon points="1384.1,320.5 1404.6,323.3 1404.6,325.5 1384.1,322.7" fill="#484672"/>
<polygon points="1384.2,336.7 1404.5,339.7 1404.5,345.2 1384.2,342.1" fill="#3d3b63"/>
<line x1="1383.3" y1="342.9" x2="1405.4" y2="346.3" stroke="#1c1b2e" stroke-width="1.5" opacity="0.55"/>
<polygon points="1549.0,319.2 1550.3,295.4 1542.7,301.2 1541.4,325.5" fill="#9e4971" stroke="#9e4971" stroke-width="0.7"/>
<polygon points="1548.8,318.5 1550.0,296.6 1543.0,301.9 1541.8,324.3" fill="#b85684"/>
<polygon points="1541.8,324.3 1543.0,301.9 1545.1,300.3 1543.9,322.5" fill="#8b4164"/>
<polygon points="1405.3,392.6 1394.2,400.6 1416.9,404.6 1427.5,396.4" fill="#ac547f" stroke="#ac547f" stroke-width="0.7"/>
<polygon points="1405.7,393.0 1395.6,400.4 1416.4,404.1 1426.2,396.6" fill="#c86294"/>
<polygon points="1395.6,400.4 1416.4,404.1 1418.0,402.9 1397.2,399.2" fill="#d66b9f"/>
<polygon points="1338.6,241.8 1360.5,244.0 1360.1,219.1 1338.1,217.1" fill="#373559" stroke="#373559" stroke-width="0.7"/>
<polygon points="1339.4,240.9 1359.6,242.9 1359.3,220.0 1339.0,218.2" fill="#403e68"/>
<polygon points="1339.0,218.2 1359.3,220.0 1359.3,222.3 1339.0,220.5" fill="#484672"/>
<polygon points="1339.3,235.3 1359.5,237.2 1359.6,242.9 1339.4,240.9" fill="#3d3b63"/>
<line x1="1338.6" y1="241.8" x2="1360.5" y2="244.0" stroke="#1c1b2e" stroke-width="1.5" opacity="0.55"/>
<polygon points="1361.1,292.7 1383.1,295.5 1383.0,271.1 1360.8,268.6" fill="#373559" stroke="#373559" stroke-width="0.7"/>
<polygon points="1361.9,291.8 1382.2,294.4 1382.1,272.0 1361.7,269.6" fill="#403e68"/>
<polygon points="1361.7,269.6 1382.1,272.0 1382.1,274.2 1361.7,271.9" fill="#484672"/>
<polygon points="1361.9,286.3 1382.2,288.8 1382.2,294.4 1361.9,291.8" fill="#3d3b63"/>
<line x1="1361.1" y1="292.7" x2="1383.1" y2="295.5" stroke="#1c1b2e" stroke-width="1.5" opacity="0.55"/>
<polygon points="1405.3,369.6 1427.8,373.2 1428.0,349.7 1405.4,346.3" fill="#bd628d" stroke="#bd628d" stroke-width="0.7"/>
<polygon points="1406.2,368.8 1426.9,372.2 1427.1,350.5 1406.3,347.3" fill="#dc72a5"/>
<polygon points="1406.3,347.3 1427.1,350.5 1427.1,352.7 1406.3,349.5" fill="#ea7cb1"/>
<polygon points="1406.3,363.5 1426.9,366.8 1426.9,372.2 1406.2,368.8" fill="#d26c9d"/>
<line x1="1405.3" y1="369.6" x2="1427.8" y2="373.2" stroke="#63334a" stroke-width="1.5" opacity="0.55"/>
<polygon points="1483.6,190.8 1474.3,194.0 1498.3,195.7 1507.2,192.5" fill="#ac547f" stroke="#ac547f" stroke-width="0.7"/>
<polygon points="1484.2,191.0 1475.6,193.9 1497.7,195.5 1505.9,192.5" fill="#c86294"/>
<polygon points="1475.6,193.9 1497.7,195.5 1499.0,195.0 1477.0,193.4" fill="#d66b9f"/>
<polygon points="1427.5,396.4 1450.2,400.4 1450.7,377.0 1427.8,373.2" fill="#bd628d" stroke="#bd628d" stroke-width="0.7"/>
<polygon points="1428.4,395.7 1449.3,399.3 1449.7,377.8 1428.7,374.3" fill="#dc72a5"/>
<polygon points="1428.7,374.3 1449.7,377.8 1449.7,379.9 1428.6,376.5" fill="#ea7cb1"/>
<polygon points="1428.5,390.4 1449.4,393.9 1449.3,399.3 1428.4,395.7" fill="#d26c9d"/>
<line x1="1427.5" y1="396.4" x2="1450.2" y2="400.4" stroke="#63334a" stroke-width="1.5" opacity="0.55"/>
<polygon points="1338.1,217.1 1360.1,219.1 1359.8,193.6 1337.6,191.9" fill="#bd628d" stroke="#bd628d" stroke-width="0.7"/>
<polygon points="1338.9,216.2 1359.2,218.0 1358.9,194.6 1338.5,193.0" fill="#dc72a5"/>
<polygon points="1338.5,193.0 1358.9,194.6 1359.0,196.9 1338.5,195.4" fill="#ea7cb1"/>
<polygon points="1338.8,210.4 1359.2,212.2 1359.2,218.0 1338.9,216.2" fill="#d26c9d"/>
<line x1="1338.1" y1="217.1" x2="1360.1" y2="219.1" stroke="#63334a" stroke-width="1.5" opacity="0.55"/>
<polygon points="1550.3,295.4 1551.7,271.2 1544.0,276.4 1542.7,301.2" fill="#9e4971" stroke="#9e4971" stroke-width="0.7"/>
<polygon points="1550.1,294.7 1551.3,272.4 1544.3,277.2 1543.1,299.9" fill="#b85684"/>
<polygon points="1543.1,299.9 1544.3,277.2 1546.4,275.7 1545.2,298.3" fill="#8b4164"/>
<polygon points="1383.2,319.4 1405.5,322.5 1405.6,298.3 1383.1,295.5" fill="#373559" stroke="#373559" stroke-width="0.7"/>
<polygon points="1384.1,318.6 1404.6,321.4 1404.7,299.2 1384.0,296.5" fill="#403e68"/>
<polygon points="1384.0,296.5 1404.7,299.2 1404.7,301.4 1384.0,298.8" fill="#484672"/>
<polygon points="1384.1,313.1 1404.6,315.9 1404.6,321.4 1384.1,318.6" fill="#3d3b63"/>
<line x1="1383.2" y1="319.4" x2="1405.5" y2="322.5" stroke="#1c1b2e" stroke-width="1.5" opacity="0.55"/>
<polygon points="1427.9,190.6 1417.2,193.8 1440.6,195.5 1450.8,192.3" fill="#ac547f" stroke="#ac547f" stroke-width="0.7"/>
<polygon points="1428.4,190.8 1418.5,193.7 1440.0,195.3 1449.5,192.3" fill="#c86294"/>
<polygon points="1418.5,193.7 1440.0,195.3 1441.6,194.8 1420.1,193.3" fill="#d66b9f"/>
<polygon points="1360.8,268.6 1383.0,271.1 1382.8,246.3 1360.5,244.0" fill="#373559" stroke="#373559" stroke-width="0.7"/>
<polygon points="1361.6,267.7 1382.1,270.0 1381.9,247.2 1361.4,245.1" fill="#403e68"/>
<polygon points="1361.4,245.1 1381.9,247.2 1382.0,249.5 1361.4,247.4" fill="#484672"/>
<polygon points="1361.6,262.1 1382.0,264.3 1382.1,270.0 1361.6,267.7" fill="#3d3b63"/>
<line x1="1360.8" y1="268.6" x2="1383.0" y2="271.1" stroke="#1c1b2e" stroke-width="1.5" opacity="0.55"/>
<polygon points="1371.9,190.5 1359.8,193.6 1382.6,195.4 1394.3,192.1" fill="#ac547f" stroke="#ac547f" stroke-width="0.7"/>
<polygon points="1372.3,190.7 1361.2,193.6 1382.2,195.2 1392.9,192.2" fill="#c86294"/>
<polygon points="1361.2,193.6 1382.2,195.2 1383.9,194.7 1363.0,193.1" fill="#d66b9f"/>
<polygon points="1538.9,372.9 1540.1,349.4 1532.2,356.6 1531.0,380.6" fill="#9e4971" stroke="#9e4971" stroke-width="0.7"/>
<polygon points="1538.6,372.3 1539.8,350.7 1532.5,357.3 1531.4,379.3" fill="#b85684"/>
<polygon points="1531.4,379.3 1532.5,357.3 1534.7,355.2 1533.6,377.2" fill="#8b4164"/>
<polygon points="1350.1,369.8 1337.6,377.3 1359.8,381.1 1371.9,373.4" fill="#597fb4" stroke="#597fb4" stroke-width="0.7"/>
<polygon points="1350.4,370.2 1339.0,377.1 1359.4,380.6 1370.5,373.6" fill="#6894d2"/>
<polygon points="1339.0,377.1 1359.4,380.6 1361.2,379.5 1340.8,376.0" fill="#729fe0"/>
<polygon points="1427.5,396.4 1416.9,404.6 1440.0,408.8 1450.2,400.4" fill="#ac547f" stroke="#ac547f" stroke-width="0.7"/>
<polygon points="1428.0,396.9 1418.2,404.5 1439.5,408.3 1448.9,400.5" fill="#c86294"/>
<polygon points="1418.2,404.5 1439.5,408.3 1441.1,407.0 1419.8,403.2" fill="#d66b9f"/>
<polygon points="1405.4,346.3 1428.0,349.7 1428.3,325.7 1405.5,322.5" fill="#373559" stroke="#373559" stroke-width="0.7"/>
<polygon points="1406.3,345.4 1427.1,348.6 1427.4,326.5 1406.4,323.6" fill="#403e68"/>
<polygon points="1406.4,323.6 1427.4,326.5 1427.4,328.7 1406.4,325.8" fill="#484672"/>
<polygon points="1406.3,340.0 1427.2,343.1 1427.1,348.6 1406.3,345.4" fill="#3d3b63"/>
<line x1="1405.4" y1="346.3" x2="1428.0" y2="349.7" stroke="#1c1b2e" stroke-width="1.5" opacity="0.55"/>
<polygon points="1507.2,192.5 1498.3,195.7 1522.9,197.5 1531.2,194.1" fill="#ac547f" stroke="#ac547f" stroke-width="0.7"/>
<polygon points="1507.8,192.6 1499.7,195.6 1522.3,197.3 1529.9,194.2" fill="#c86294"/>
<polygon points="1499.7,195.6 1522.3,197.3 1523.5,196.8 1501.0,195.1" fill="#d66b9f"/>
<polygon points="1551.7,271.2 1553.1,246.5 1545.4,251.1 1544.0,276.4" fill="#9e4971" stroke="#9e4971" stroke-width="0.7"/>
<polygon points="1551.4,270.4 1552.7,247.7 1545.6,252.0 1544.4,275.2" fill="#b85684"/>
<polygon points="1544.4,275.2 1545.6,252.0 1547.8,250.7 1546.5,273.7" fill="#8b4164"/>
<polygon points="1427.8,373.2 1450.7,377.0 1451.2,353.1 1428.0,349.7" fill="#bd628d" stroke="#bd628d" stroke-width="0.7"/>
<polygon points="1428.7,372.5 1449.8,375.9 1450.2,354.0 1428.9,350.7" fill="#dc72a5"/>
<polygon points="1428.9,350.7 1450.2,354.0 1450.2,356.2 1428.9,352.9" fill="#ea7cb1"/>
<polygon points="1428.7,367.1 1449.9,370.4 1449.8,375.9 1428.7,372.5" fill="#d26c9d"/>
<line x1="1427.8" y1="373.2" x2="1450.7" y2="377.0" stroke="#63334a" stroke-width="1.5" opacity="0.55"/>
<polygon points="1360.5,244.0 1382.8,246.3 1382.7,221.1 1360.1,219.1" fill="#373559" stroke="#373559" stroke-width="0.7"/>
<polygon points="1361.3,243.1 1381.9,245.2 1381.8,222.0 1361.1,220.1" fill="#403e68"/>
<polygon points="1361.1,220.1 1381.8,222.0 1381.8,224.3 1361.1,222.5" fill="#484672"/>
<polygon points="1361.3,237.4 1381.9,239.4 1381.9,245.2 1361.3,243.1" fill="#3d3b63"/>
<line x1="1360.5" y1="244.0" x2="1382.8" y2="246.3" stroke="#1c1b2e" stroke-width="1.5" opacity="0.55"/>
<polygon points="1528.6,427.4 1529.8,404.2 1521.5,412.8 1520.4,436.5" fill="#9e4971" stroke="#9e4971" stroke-width="0.7"/>
<polygon points="1528.4,426.8 1529.4,405.5 1521.8,413.4 1520.8,435.2" fill="#b85684"/>
<polygon points="1520.8,435.2 1521.8,413.4 1524.2,411.0 1523.1,432.6" fill="#8b4164"/>
<polygon points="1450.2,400.4 1473.4,404.4 1474.1,380.8 1450.7,377.0" fill="#bd628d" stroke="#bd628d" stroke-width="0.7"/>
<polygon points="1451.1,399.6 1472.5,403.3 1473.2,381.6 1451.6,378.1" fill="#dc72a5"/>
<polygon points="1451.6,378.1 1473.2,381.6 1473.1,383.8 1451.5,380.2" fill="#ea7cb1"/>
<polygon points="1451.3,394.3 1472.7,397.9 1472.5,403.3 1451.1,399.6" fill="#d26c9d"/>
<line x1="1450.2" y1="400.4" x2="1473.4" y2="404.4" stroke="#63334a" stroke-width="1.5" opacity="0.55"/>
<polygon points="1383.1,295.5 1405.6,298.3 1405.7,273.7 1383.0,271.1" fill="#373559" stroke="#373559" stroke-width="0.7"/>
<polygon points="1384.0,294.6 1404.7,297.2 1404.7,274.6 1383.9,272.2" fill="#403e68"/>
<polygon points="1383.9,272.2 1404.7,274.6 1404.7,276.9 1383.9,274.4" fill="#484672"/>
<polygon points="1383.9,289.0 1404.7,291.6 1404.7,297.2 1384.0,294.6" fill="#3d3b63"/>
<line x1="1383.1" y1="295.5" x2="1405.6" y2="298.3" stroke="#1c1b2e" stroke-width="1.5" opacity="0.55"/>
<polygon points="1281.7,401.0 1267.3,409.4 1289.1,413.7 1303.2,405.1" fill="#ac547f" stroke="#ac547f" stroke-width="0.7"/>
<polygon points="1282.0,401.5 1268.7,409.3 1288.8,413.2 1301.7,405.2" fill="#c86294"/>
<polygon points="1268.7,409.3 1288.8,413.2 1290.9,411.9 1270.9,408.0" fill="#d66b9f"/>
<polygon points="1540.1,349.4 1541.4,325.5 1533.4,332.1 1532.2,356.6" fill="#9e4971" stroke="#9e4971" stroke-width="0.7"/>
<polygon points="1539.9,348.8 1541.0,326.7 1533.7,332.8 1532.6,355.3" fill="#b85684"/>
<polygon points="1532.6,355.3 1533.7,332.8 1535.9,331.0 1534.8,353.3" fill="#8b4164"/>
<polygon points="1315.8,373.6 1302.3,381.3 1324.4,385.2 1337.6,377.3" fill="#597fb4" stroke="#597fb4" stroke-width="0.7"/>
<polygon points="1316.2,374.0 1303.7,381.1 1324.1,384.7 1336.2,377.5" fill="#6894d2"/>
<polygon points="1303.7,381.1 1324.1,384.7 1326.1,383.5 1305.8,380.0" fill="#729fe0"/>
<polygon points="1360.1,219.1 1382.7,221.1 1382.6,195.4 1359.8,193.6" fill="#bd628d" stroke="#bd628d" stroke-width="0.7"/>
<polygon points="1361.0,218.1 1381.8,220.0 1381.7,196.3 1360.7,194.7" fill="#dc72a5"/>
<polygon points="1360.7,194.7 1381.7,196.3 1381.7,198.7 1360.8,197.1" fill="#ea7cb1"/>
<polygon points="1361.0,212.3 1381.8,214.1 1381.8,220.0 1361.0,218.1" fill="#d26c9d"/>
<line x1="1360.1" y1="219.1" x2="1382.7" y2="221.1" stroke="#63334a" stroke-width="1.5" opacity="0.55"/>
<polygon points="1553.1,246.5 1554.5,221.4 1546.7,225.4 1545.4,251.1" fill="#9e4971" stroke="#9e4971" stroke-width="0.7"/>
<polygon points="1552.8,245.7 1554.1,222.6 1547.0,226.3 1545.7,249.9" fill="#b85684"/>
<polygon points="1545.7,249.9 1547.0,226.3 1549.2,225.2 1547.9,248.6" fill="#8b4164"/>
<polygon points="1450.8,192.3 1440.6,195.5 1464.5,197.3 1474.3,194.0" fill="#ac547f" stroke="#ac547f" stroke-width="0.7"/>
<polygon points="1451.4,192.5 1441.9,195.5 1464.0,197.1 1473.0,194.0" fill="#c86294"/>
<polygon points="1441.9,195.5 1464.0,197.1 1465.4,196.6 1443.5,195.0" fill="#d66b9f"/>
<polygon points="1405.5,322.5 1428.3,325.7 1428.6,301.2 1405.6,298.3" fill="#373559" stroke="#373559" stroke-width="0.7"/>
<polygon points="1406.4,321.7 1427.4,324.6 1427.7,302.1 1406.5,299.4" fill="#403e68"/>
<polygon points="1406.5,299.4 1427.7,302.1 1427.6,304.3 1406.5,301.6" fill="#484672"/>
<polygon points="1406.4,316.1 1427.5,319.0 1427.4,324.6 1406.4,321.7" fill="#3d3b63"/>
<line x1="1405.5" y1="322.5" x2="1428.3" y2="325.7" stroke="#1c1b2e" stroke-width="1.5" opacity="0.55"/>
<polygon points="1383.0,271.1 1405.7,273.7 1405.7,248.6 1382.8,246.3" fill="#c4cad3" stroke="#c4cad3" stroke-width="0.7"/>
<polygon points="1383.9,270.2 1404.7,272.6 1404.8,249.5 1383.8,247.4" fill="#e4ecf6"/>
<polygon points="1383.8,247.4 1404.8,249.5 1404.8,251.9 1383.8,249.7" fill="#f3fbff"/>
<polygon points="1383.8,264.5 1404.8,266.9 1404.7,272.6 1383.9,270.2" fill="#d9e1ea"/>
<line x1="1383.0" y1="271.1" x2="1405.7" y2="273.7" stroke="#666a6e" stroke-width="1.5" opacity="0.55"/>
<polygon points="1394.3,192.1 1382.6,195.4 1405.9,197.1 1417.2,193.8" fill="#ac547f" stroke="#ac547f" stroke-width="0.7"/>
<polygon points="1394.7,192.3 1384.0,195.3 1405.4,196.9 1415.8,193.9" fill="#c86294"/>
<polygon points="1384.0,195.3 1405.4,196.9 1407.1,196.4 1385.8,194.8" fill="#d66b9f"/>
<polygon points="1450.2,400.4 1440.0,408.8 1463.7,413.0 1473.4,404.4" fill="#ac547f" stroke="#ac547f" stroke-width="0.7"/>
<polygon points="1450.7,400.9 1441.4,408.6 1463.2,412.5 1472.1,404.6" fill="#c86294"/>
<polygon points="1441.4,408.6 1463.2,412.5 1464.6,411.2 1442.9,407.3" fill="#d66b9f"/>
<polygon points="1531.2,194.1 1522.9,197.5 1548.1,199.3 1555.9,195.9" fill="#ac547f" stroke="#ac547f" stroke-width="0.7"/>
<polygon points="1531.9,194.3 1524.3,197.4 1547.4,199.1 1554.6,195.9" fill="#c86294"/>
<polygon points="1524.3,197.4 1547.4,199.1 1548.6,198.5 1525.5,196.9" fill="#d66b9f"/>
<polygon points="1371.9,373.4 1359.8,381.1 1382.5,385.0 1394.2,377.1" fill="#597fb4" stroke="#597fb4" stroke-width="0.7"/>
<polygon points="1372.3,373.9 1361.2,381.0 1382.1,384.5 1392.9,377.3" fill="#6894d2"/>
<polygon points="1361.2,381.0 1382.1,384.5 1383.9,383.4 1363.0,379.8" fill="#729fe0"/>
<polygon points="1428.0,349.7 1451.2,353.1 1451.7,328.9 1428.3,325.7" fill="#373559" stroke="#373559" stroke-width="0.7"/>
<polygon points="1429.0,348.8 1450.2,352.0 1450.7,329.7 1429.2,326.8" fill="#403e68"/>
<polygon points="1429.2,326.8 1450.7,329.7 1450.6,332.0 1429.2,329.0" fill="#484672"/>
<polygon points="1429.0,343.4 1450.4,346.5 1450.2,352.0 1429.0,348.8" fill="#3d3b63"/>
<line x1="1428.0" y1="349.7" x2="1451.2" y2="353.1" stroke="#1c1b2e" stroke-width="1.5" opacity="0.55"/>
<polygon points="1554.5,221.4 1555.9,195.9 1548.1,199.3 1546.7,225.4" fill="#9e4971" stroke="#9e4971" stroke-width="0.7"/>
<polygon points="1554.2,220.6 1555.5,197.0 1548.4,200.2 1547.1,224.2" fill="#b85684"/>
<polygon points="1547.1,224.2 1548.4,200.2 1550.5,199.2 1549.3,223.1" fill="#8b4164"/>
<polygon points="1473.4,404.4 1497.2,408.5 1498.1,384.7 1474.1,380.8" fill="#bd628d" stroke="#bd628d" stroke-width="0.7"/>
<polygon points="1474.4,403.6 1496.3,407.4 1497.1,385.5 1475.1,381.9" fill="#dc72a5"/>
<polygon points="1475.1,381.9 1497.1,385.5 1497.0,387.7 1475.0,384.1" fill="#ea7cb1"/>
<polygon points="1474.6,398.2 1496.5,402.0 1496.3,407.4 1474.4,403.6" fill="#d26c9d"/>
<line x1="1473.4" y1="404.4" x2="1497.2" y2="408.5" stroke="#63334a" stroke-width="1.5" opacity="0.55"/>
<polygon points="1450.7,377.0 1474.1,380.8 1474.8,356.7 1451.2,353.1" fill="#bd628d" stroke="#bd628d" stroke-width="0.7"/>
<polygon points="1451.6,376.2 1473.2,379.7 1473.8,357.5 1452.1,354.2" fill="#dc72a5"/>
<polygon points="1452.1,354.2 1473.8,357.5 1473.8,359.8 1452.0,356.5" fill="#ea7cb1"/>
<polygon points="1451.7,370.7 1473.4,374.2 1473.2,379.7 1451.6,376.2" fill="#d26c9d"/>
<line x1="1450.7" y1="377.0" x2="1474.1" y2="380.8" stroke="#63334a" stroke-width="1.5" opacity="0.55"/>
<polygon points="1529.8,404.2 1531.0,380.6 1522.7,388.7 1521.5,412.8" fill="#9e4971" stroke="#9e4971" stroke-width="0.7"/>
<polygon points="1529.5,403.6 1530.6,381.9 1523.0,389.3 1521.9,411.5" fill="#b85684"/>
<polygon points="1521.9,411.5 1523.0,389.3 1525.3,387.0 1524.2,409.1" fill="#8b4164"/>
<polygon points="1541.4,325.5 1542.7,301.2 1534.7,307.2 1533.4,332.1" fill="#9e4971" stroke="#9e4971" stroke-width="0.7"/>
<polygon points="1541.1,324.8 1542.3,302.4 1535.0,308.0 1533.8,330.9" fill="#b85684"/>
<polygon points="1533.8,330.9 1535.0,308.0 1537.2,306.3 1536.0,329.0" fill="#8b4164"/>
<polygon points="1405.6,298.3 1428.6,301.2 1428.9,276.3 1405.7,273.7" fill="#373559" stroke="#373559" stroke-width="0.7"/>
<polygon points="1406.5,297.4 1427.7,300.1 1427.9,277.2 1406.6,274.8" fill="#403e68"/>
<polygon points="1406.6,274.8 1427.9,277.2 1427.9,279.5 1406.6,277.1" fill="#484672"/>
<polygon points="1406.5,291.8 1427.7,294.4 1427.7,300.1 1406.5,297.4" fill="#3d3b63"/>
<line x1="1405.6" y1="298.3" x2="1428.6" y2="301.2" stroke="#1c1b2e" stroke-width="1.5" opacity="0.55"/>
<polygon points="1382.8,246.3 1405.7,248.6 1405.8,223.1 1382.7,221.1" fill="#373559" stroke="#373559" stroke-width="0.7"/>
<polygon points="1383.7,245.4 1404.8,247.5 1404.9,224.1 1383.6,222.2" fill="#403e68"/>
<polygon points="1383.6,222.2 1404.9,224.1 1404.9,226.4 1383.7,224.5" fill="#484672"/>
<polygon points="1383.7,239.6 1404.8,241.7 1404.8,247.5 1383.7,245.4" fill="#3d3b63"/>
<line x1="1382.8" y1="246.3" x2="1405.7" y2="248.6" stroke="#1c1b2e" stroke-width="1.5" opacity="0.55"/>
<polygon points="1474.3,194.0 1464.5,197.3 1489.1,199.1 1498.3,195.7" fill="#ac547f" stroke="#ac547f" stroke-width="0.7"/>
<polygon points="1474.9,194.2 1465.9,197.2 1488.4,198.9 1497.0,195.8" fill="#c86294"/>
<polygon points="1465.9,197.2 1488.4,198.9 1489.8,198.4 1467.4,196.7" fill="#d66b9f"/>
<polygon points="1428.3,325.7 1451.7,328.9 1452.2,304.2 1428.6,301.2" fill="#373559" stroke="#373559" stroke-width="0.7"/>
<polygon points="1429.2,324.8 1450.7,327.8 1451.2,305.1 1429.5,302.3" fill="#403e68"/>
<polygon points="1429.5,302.3 1451.2,305.1 1451.1,307.4 1429.5,304.6" fill="#484672"/>
<polygon points="1429.3,319.2 1450.8,322.1 1450.7,327.8 1429.2,324.8" fill="#3d3b63"/>
<line x1="1428.3" y1="325.7" x2="1451.7" y2="328.9" stroke="#1c1b2e" stroke-width="1.5" opacity="0.55"/>
<polygon points="1473.4,404.4 1463.7,413.0 1488.0,417.3 1497.2,408.5" fill="#ac547f" stroke="#ac547f" stroke-width="0.7"/>
<polygon points="1474.0,404.9 1465.1,412.8 1487.4,416.8 1495.9,408.7" fill="#c86294"/>
<polygon points="1465.1,412.8 1487.4,416.8 1488.8,415.5 1466.6,411.5" fill="#d66b9f"/>
<polygon points="1382.7,221.1 1405.8,223.1 1405.9,197.1 1382.6,195.4" fill="#bd628d" stroke="#bd628d" stroke-width="0.7"/>
<polygon points="1383.6,220.1 1404.9,222.0 1405.0,198.1 1383.5,196.5" fill="#dc72a5"/>
<polygon points="1383.5,196.5 1405.0,198.1 1405.0,200.5 1383.5,198.9" fill="#ea7cb1"/>
<polygon points="1383.6,214.2 1404.9,216.1 1404.9,222.0 1383.6,220.1" fill="#d26c9d"/>
<line x1="1382.7" y1="221.1" x2="1405.8" y2="223.1" stroke="#63334a" stroke-width="1.5" opacity="0.55"/>
<polygon points="1337.6,377.3 1324.4,385.2 1347.1,389.2 1359.8,381.1" fill="#597fb4" stroke="#597fb4" stroke-width="0.7"/>
<polygon points="1337.9,377.8 1325.9,385.0 1346.7,388.7 1358.4,381.3" fill="#6894d2"/>
<polygon points="1325.9,385.0 1346.7,388.7 1348.6,387.5 1327.8,383.9" fill="#729fe0"/>
<polygon points="1497.2,408.5 1521.5,412.8 1522.7,388.7 1498.1,384.7" fill="#bd628d" stroke="#bd628d" stroke-width="0.7"/>
<polygon points="1498.2,407.8 1520.6,411.6 1521.6,389.5 1499.1,385.8" fill="#dc72a5"/>
<polygon points="1499.1,385.8 1521.6,389.5 1521.5,391.7 1499.0,388.0" fill="#ea7cb1"/>
<polygon points="1498.4,402.3 1520.9,406.1 1520.6,411.6 1498.2,407.8" fill="#d26c9d"/>
<line x1="1497.2" y1="408.5" x2="1521.5" y2="412.8" stroke="#63334a" stroke-width="1.5" opacity="0.55"/>
<polygon points="1542.7,301.2 1544.0,276.4 1536.0,281.8 1534.7,307.2" fill="#9e4971" stroke="#9e4971" stroke-width="0.7"/>
<polygon points="1542.4,300.4 1543.6,277.6 1536.2,282.6 1535.1,306.0" fill="#b85684"/>
<polygon points="1535.1,306.0 1536.2,282.6 1538.5,281.1 1537.3,304.3" fill="#8b4164"/>
<polygon points="1451.2,353.1 1474.8,356.7 1475.5,332.2 1451.7,328.9" fill="#373559" stroke="#373559" stroke-width="0.7"/>
<polygon points="1452.1,352.3 1473.9,355.6 1474.5,333.1 1452.6,330.0" fill="#403e68"/>
<polygon points="1452.6,330.0 1474.5,333.1 1474.5,335.3 1452.5,332.2" fill="#484672"/>
<polygon points="1452.2,346.8 1474.1,350.0 1473.9,355.6 1452.1,352.3" fill="#3d3b63"/>
<line x1="1451.2" y1="353.1" x2="1474.8" y2="356.7" stroke="#1c1b2e" stroke-width="1.5" opacity="0.55"/>
<polygon points="1405.7,273.7 1428.9,276.3 1429.2,251.0 1405.7,248.6" fill="#373559" stroke="#373559" stroke-width="0.7"/>
<polygon points="1406.6,272.8 1428.0,275.2 1428.2,251.9 1406.7,249.7" fill="#403e68"/>
<polygon points="1406.7,249.7 1428.2,251.9 1428.2,254.3 1406.7,252.1" fill="#484672"/>
<polygon points="1406.6,267.1 1428.0,269.4 1428.0,275.2 1406.6,272.8" fill="#3d3b63"/>
<line x1="1405.7" y1="273.7" x2="1428.9" y2="276.3" stroke="#1c1b2e" stroke-width="1.5" opacity="0.55"/>
<polygon points="1417.2,193.8 1405.9,197.1 1429.8,198.9 1440.6,195.5" fill="#ac547f" stroke="#ac547f" stroke-width="0.7"/>
<polygon points="1417.7,194.0 1407.3,197.1 1429.3,198.7 1439.2,195.6" fill="#c86294"/>
<polygon points="1407.3,197.1 1429.3,198.7 1430.9,198.2 1409.0,196.6" fill="#d66b9f"/>
<polygon points="1474.1,380.8 1498.1,384.7 1499.0,360.4 1474.8,356.7" fill="#bd628d" stroke="#bd628d" stroke-width="0.7"/>
<polygon points="1475.1,380.0 1497.2,383.5 1498.0,361.2 1475.8,357.8" fill="#dc72a5"/>
<polygon points="1475.8,357.8 1498.0,361.2 1497.9,363.4 1475.7,360.1" fill="#ea7cb1"/>
<polygon points="1475.3,374.5 1497.4,378.0 1497.2,383.5 1475.1,380.0" fill="#d26c9d"/>
<line x1="1474.1" y1="380.8" x2="1498.1" y2="384.7" stroke="#63334a" stroke-width="1.5" opacity="0.55"/>
<polygon points="1394.2,377.1 1382.5,385.0 1405.8,389.0 1417.1,380.9" fill="#597fb4" stroke="#597fb4" stroke-width="0.7"/>
<polygon points="1394.7,377.6 1383.9,384.9 1405.3,388.5 1415.7,381.1" fill="#6894d2"/>
<polygon points="1383.9,384.9 1405.3,388.5 1407.0,387.3 1385.7,383.7" fill="#729fe0"/>
<polygon points="1531.0,380.6 1532.2,356.6 1523.8,364.1 1522.7,388.7" fill="#9e4971" stroke="#9e4971" stroke-width="0.7"/>
<polygon points="1530.7,380.0 1531.8,357.8 1524.1,364.8 1523.1,387.3" fill="#b85684"/>
<polygon points="1523.1,387.3 1524.1,364.8 1526.5,362.7 1525.4,385.1" fill="#8b4164"/>
<polygon points="1267.3,409.4 1252.1,418.3 1274.3,422.8 1289.1,413.7" fill="#ac547f" stroke="#ac547f" stroke-width="0.7"/>
<polygon points="1267.6,410.0 1253.6,418.1 1274.0,422.3 1287.6,413.9" fill="#c86294"/>
<polygon points="1253.6,418.1 1274.0,422.3 1276.2,420.9 1255.9,416.8" fill="#d66b9f"/>
<polygon points="1428.6,301.2 1452.2,304.2 1452.7,279.1 1428.9,276.3" fill="#373559" stroke="#373559" stroke-width="0.7"/>
<polygon points="1429.5,300.3 1451.2,303.1 1451.7,280.0 1429.8,277.5" fill="#403e68"/>
<polygon points="1429.8,277.5 1451.7,280.0 1451.6,282.3 1429.8,279.8" fill="#484672"/>
<polygon points="1429.6,294.7 1451.3,297.3 1451.2,303.1 1429.5,300.3" fill="#3d3b63"/>
<line x1="1428.6" y1="301.2" x2="1452.2" y2="304.2" stroke="#1c1b2e" stroke-width="1.5" opacity="0.55"/>
<polygon points="1520.4,436.5 1521.5,412.8 1512.9,421.8 1511.8,446.0" fill="#9e4971" stroke="#9e4971" stroke-width="0.7"/>
<polygon points="1520.1,435.9 1521.2,414.1 1513.2,422.4 1512.2,444.6" fill="#b85684"/>
<polygon points="1512.2,444.6 1513.2,422.4 1515.6,419.9 1514.6,442.0" fill="#8b4164"/>
<polygon points="1405.7,248.6 1429.2,251.0 1429.5,225.2 1405.8,223.1" fill="#373559" stroke="#373559" stroke-width="0.7"/>
<polygon points="1406.7,247.7 1428.2,249.9 1428.5,226.2 1406.8,224.2" fill="#403e68"/>
<polygon points="1406.8,224.2 1428.5,226.2 1428.5,228.6 1406.8,226.6" fill="#484672"/>
<polygon points="1406.7,241.9 1428.3,244.0 1428.2,249.9 1406.7,247.7" fill="#3d3b63"/>
<line x1="1405.7" y1="248.6" x2="1429.2" y2="251.0" stroke="#1c1b2e" stroke-width="1.5" opacity="0.55"/>
<polygon points="1498.3,195.7 1489.1,199.1 1514.2,201.0 1522.9,197.5" fill="#ac547f" stroke="#ac547f" stroke-width="0.7"/>
<polygon points="1498.9,195.9 1490.4,199.0 1513.5,200.7 1521.6,197.5" fill="#c86294"/>
<polygon points="1490.4,199.0 1513.5,200.7 1514.8,200.2 1491.8,198.5" fill="#d66b9f"/>
<polygon points="1544.0,276.4 1545.4,251.1 1537.2,256.0 1536.0,281.8" fill="#9e4971" stroke="#9e4971" stroke-width="0.7"/>
<polygon points="1543.8,275.6 1545.0,252.3 1537.5,256.8 1536.3,280.6" fill="#b85684"/>
<polygon points="1536.3,280.6 1537.5,256.8 1539.8,255.5 1538.6,279.1" fill="#8b4164"/>
<polygon points="1497.2,408.5 1488.0,417.3 1512.9,421.8 1521.5,412.8" fill="#ac547f" stroke="#ac547f" stroke-width="0.7"/>
<polygon points="1497.8,409.1 1489.4,417.2 1512.2,421.2 1520.2,413.0" fill="#c86294"/>
<polygon points="1489.4,417.2 1512.2,421.2 1513.5,419.9 1490.7,415.8" fill="#d66b9f"/>
<polygon points="1302.3,381.3 1288.1,389.4 1310.6,393.5 1324.4,385.2" fill="#597fb4" stroke="#597fb4" stroke-width="0.7"/>
<polygon points="1302.6,381.8 1289.6,389.2 1310.3,393.0 1323.0,385.4" fill="#6894d2"/>
<polygon points="1289.6,389.2 1310.3,393.0 1312.4,391.8 1291.7,388.0" fill="#729fe0"/>
<polygon points="1451.7,328.9 1475.5,332.2 1476.3,307.2 1452.2,304.2" fill="#373559" stroke="#373559" stroke-width="0.7"/>
<polygon points="1452.6,328.0 1474.6,331.1 1475.3,308.1 1453.1,305.3" fill="#403e68"/>
<polygon points="1453.1,305.3 1475.3,308.1 1475.2,310.4 1453.0,307.6" fill="#484672"/>
<polygon points="1452.7,322.4 1474.8,325.4 1474.6,331.1 1452.6,328.0" fill="#3d3b63"/>
<line x1="1451.7" y1="328.9" x2="1475.5" y2="332.2" stroke="#1c1b2e" stroke-width="1.5" opacity="0.55"/>
<polygon points="1498.1,384.7 1522.7,388.7 1523.8,364.1 1499.0,360.4" fill="#bd628d" stroke="#bd628d" stroke-width="0.7"/>
<polygon points="1499.1,383.9 1521.7,387.5 1522.8,364.9 1500.0,361.5" fill="#dc72a5"/>
<polygon points="1500.0,361.5 1522.8,364.9 1522.7,367.2 1499.9,363.7" fill="#ea7cb1"/>
<polygon points="1499.3,378.3 1522.0,381.9 1521.7,387.5 1499.1,383.9" fill="#d26c9d"/>
<line x1="1498.1" y1="384.7" x2="1522.7" y2="388.7" stroke="#63334a" stroke-width="1.5" opacity="0.55"/>
<polygon points="1474.8,356.7 1499.0,360.4 1500.0,335.6 1475.5,332.2" fill="#373559" stroke="#373559" stroke-width="0.7"/>
<polygon points="1475.8,355.9 1498.1,359.2 1499.0,336.5 1476.5,333.3" fill="#403e68"/>
<polygon points="1476.5,333.3 1499.0,336.5 1498.9,338.7 1476.4,335.6" fill="#484672"/>
<polygon points="1476.0,350.3 1498.3,353.6 1498.1,359.2 1475.8,355.9" fill="#3d3b63"/>
<line x1="1474.8" y1="356.7" x2="1499.0" y2="360.4" stroke="#1c1b2e" stroke-width="1.5" opacity="0.55"/>
<polygon points="1532.2,356.6 1533.4,332.1 1525.0,339.1 1523.8,364.1" fill="#9e4971" stroke="#9e4971" stroke-width="0.7"/>
<polygon points="1531.9,355.9 1533.0,333.4 1525.3,339.8 1524.2,362.8" fill="#b85684"/>
<polygon points="1524.2,362.8 1525.3,339.8 1527.7,337.8 1526.6,360.7" fill="#8b4164"/>
<polygon points="1405.8,223.1 1429.5,225.2 1429.8,198.9 1405.9,197.1" fill="#bd628d" stroke="#bd628d" stroke-width="0.7"/>
<polygon points="1406.8,222.2 1428.5,224.1 1428.8,199.9 1406.9,198.3" fill="#dc72a5"/>
<polygon points="1406.9,198.3 1428.8,199.9 1428.8,202.4 1406.8,200.7" fill="#ea7cb1"/>
<polygon points="1406.8,216.2 1428.6,218.1 1428.5,224.1 1406.8,222.2" fill="#d26c9d"/>
<line x1="1405.8" y1="223.1" x2="1429.5" y2="225.2" stroke="#63334a" stroke-width="1.5" opacity="0.55"/>
<polygon points="1428.9,276.3 1452.7,279.1 1453.2,253.5 1429.2,251.0" fill="#373559" stroke="#373559" stroke-width="0.7"/>
<polygon points="1429.8,275.4 1451.7,277.9 1452.2,254.4 1430.1,252.1" fill="#403e68"/>
<polygon points="1430.1,252.1 1452.2,254.4 1452.1,256.8 1430.1,254.5" fill="#484672"/>
<polygon points="1429.9,269.7 1451.8,272.1 1451.7,277.9 1429.8,275.4" fill="#3d3b63"/>
<line x1="1428.9" y1="276.3" x2="1452.7" y2="279.1" stroke="#1c1b2e" stroke-width="1.5" opacity="0.55"/>
<polygon points="1440.6,195.5 1429.8,198.9 1454.2,200.8 1464.5,197.3" fill="#ac547f" stroke="#ac547f" stroke-width="0.7"/>
<polygon points="1441.1,195.7 1431.2,198.9 1453.7,200.6 1463.2,197.4" fill="#c86294"/>
<polygon points="1431.2,198.9 1453.7,200.6 1455.2,200.1 1432.8,198.4" fill="#d66b9f"/>
<polygon points="1359.8,381.1 1347.1,389.2 1370.3,393.3 1382.5,385.0" fill="#597fb4" stroke="#597fb4" stroke-width="0.7"/>
<polygon points="1360.2,381.6 1348.5,389.1 1369.8,392.8 1381.1,385.2" fill="#6894d2"/>
<polygon points="1348.5,389.1 1369.8,392.8 1371.7,391.6 1350.4,387.8" fill="#729fe0"/>
<polygon points="1417.1,380.9 1405.8,389.0 1429.7,393.1 1440.4,384.8" fill="#597fb4" stroke="#597fb4" stroke-width="0.7"/>
<polygon points="1417.6,381.4 1407.2,388.9 1429.1,392.6 1439.1,385.0" fill="#6894d2"/>
<polygon points="1407.2,388.9 1429.1,392.6 1430.8,391.4 1408.9,387.6" fill="#729fe0"/>
<polygon points="1545.4,251.1 1546.7,225.4 1538.6,229.7 1537.2,256.0" fill="#9e4971" stroke="#9e4971" stroke-width="0.7"/>
<polygon points="1545.1,250.3 1546.3,226.6 1538.9,230.6 1537.6,254.8" fill="#b85684"/>
<polygon points="1537.6,254.8 1538.9,230.6 1541.1,229.4 1539.9,253.4" fill="#8b4164"/>
<polygon points="1522.9,197.5 1514.2,201.0 1539.9,202.9 1548.1,199.3" fill="#ac547f" stroke="#ac547f" stroke-width="0.7"/>
<polygon points="1523.6,197.7 1515.6,200.9 1539.2,202.6 1546.8,199.3" fill="#c86294"/>
<polygon points="1515.6,200.9 1539.2,202.6 1540.4,202.1 1516.9,200.4" fill="#d66b9f"/>
<polygon points="1452.2,304.2 1476.3,307.2 1477.0,281.8 1452.7,279.1" fill="#373559" stroke="#373559" stroke-width="0.7"/>
<polygon points="1453.1,303.3 1475.3,306.1 1476.0,282.7 1453.6,280.2" fill="#403e68"/>
<polygon points="1453.6,280.2 1476.0,282.7 1475.9,285.1 1453.6,282.5" fill="#484672"/>
<polygon points="1453.2,297.6 1475.5,300.3 1475.3,306.1 1453.1,303.3" fill="#3d3b63"/>
<line x1="1452.2" y1="304.2" x2="1476.3" y2="307.2" stroke="#1c1b2e" stroke-width="1.5" opacity="0.55"/>
<polygon points="1546.7,225.4 1548.1,199.3 1539.9,202.9 1538.6,229.7" fill="#9e4971" stroke="#9e4971" stroke-width="0.7"/>
<polygon points="1546.5,224.6 1547.7,200.5 1540.2,203.8 1539.0,228.4" fill="#b85684"/>
<polygon points="1539.0,228.4 1540.2,203.8 1542.5,202.8 1541.2,227.3" fill="#8b4164"/>
<polygon points="1429.2,251.0 1453.2,253.5 1453.7,227.4 1429.5,225.2" fill="#373559" stroke="#373559" stroke-width="0.7"/>
<polygon points="1430.1,250.1 1452.2,252.3 1452.7,228.3 1430.4,226.3" fill="#403e68"/>
<polygon points="1430.4,226.3 1452.7,228.3 1452.7,230.8 1430.4,228.7" fill="#484672"/>
<polygon points="1430.2,244.2 1452.3,246.4 1452.2,252.3 1430.1,250.1" fill="#3d3b63"/>
<line x1="1429.2" y1="251.0" x2="1453.2" y2="253.5" stroke="#1c1b2e" stroke-width="1.5" opacity="0.55"/>
<polygon points="1475.5,332.2 1500.0,335.6 1500.9,310.4 1476.3,307.2" fill="#c4cad3" stroke="#c4cad3" stroke-width="0.7"/>
<polygon points="1476.5,331.3 1499.0,334.5 1499.9,311.3 1477.2,308.4" fill="#e4ecf6"/>
<polygon points="1477.2,308.4 1499.9,311.3 1499.8,313.6 1477.1,310.7" fill="#f3fbff"/>
<polygon points="1476.7,325.6 1499.3,328.7 1499.0,334.5 1476.5,331.3" fill="#d9e1ea"/>
<line x1="1475.5" y1="332.2" x2="1500.0" y2="335.6" stroke="#666a6e" stroke-width="1.5" opacity="0.55"/>
<polygon points="1533.4,332.1 1534.7,307.2 1526.2,313.6 1525.0,339.1" fill="#9e4971" stroke="#9e4971" stroke-width="0.7"/>
<polygon points="1533.1,331.4 1534.3,308.5 1526.5,314.3 1525.4,337.8" fill="#b85684"/>
<polygon points="1525.4,337.8 1526.5,314.3 1528.9,312.5 1527.8,335.8" fill="#8b4164"/>
<polygon points="1499.0,360.4 1523.8,364.1 1525.0,339.1 1500.0,335.6" fill="#bd628d" stroke="#bd628d" stroke-width="0.7"/>
<polygon points="1500.1,359.5 1522.9,362.9 1524.0,339.9 1500.9,336.7" fill="#dc72a5"/>
<polygon points="1500.9,336.7 1524.0,339.9 1523.9,342.3 1500.9,339.0" fill="#ea7cb1"/>
<polygon points="1500.3,353.9 1523.2,357.2 1522.9,362.9 1500.1,359.5" fill="#d26c9d"/>
<line x1="1499.0" y1="360.4" x2="1523.8" y2="364.1" stroke="#63334a" stroke-width="1.5" opacity="0.55"/>
<polygon points="1324.4,385.2 1310.6,393.5 1333.7,397.8 1347.1,389.2" fill="#597fb4" stroke="#597fb4" stroke-width="0.7"/>
<polygon points="1324.8,385.7 1312.1,393.4 1333.3,397.2 1345.6,389.4" fill="#6894d2"/>
<polygon points="1312.1,393.4 1333.3,397.2 1335.3,396.0 1314.2,392.1" fill="#729fe0"/>
<polygon points="1452.7,279.1 1477.0,281.8 1477.8,255.9 1453.2,253.5" fill="#373559" stroke="#373559" stroke-width="0.7"/>
<polygon points="1453.6,278.2 1476.0,280.7 1476.7,256.9 1454.1,254.6" fill="#403e68"/>
<polygon points="1454.1,254.6 1476.7,256.9 1476.7,259.3 1454.1,257.0" fill="#484672"/>
<polygon points="1453.8,272.3 1476.2,274.8 1476.0,280.7 1453.6,278.2" fill="#3d3b63"/>
<line x1="1452.7" y1="279.1" x2="1477.0" y2="281.8" stroke="#1c1b2e" stroke-width="1.5" opacity="0.55"/>
<polygon points="1429.5,225.2 1453.7,227.4 1454.2,200.8 1429.8,198.9" fill="#bd628d" stroke="#bd628d" stroke-width="0.7"/>
<polygon points="1430.5,224.3 1452.7,226.2 1453.2,201.8 1430.7,200.1" fill="#dc72a5"/>
<polygon points="1430.7,200.1 1453.2,201.8 1453.2,204.3 1430.7,202.5" fill="#ea7cb1"/>
<polygon points="1430.5,218.3 1452.9,220.2 1452.7,226.2 1430.5,224.3" fill="#d26c9d"/>
<line x1="1429.5" y1="225.2" x2="1453.7" y2="227.4" stroke="#63334a" stroke-width="1.5" opacity="0.55"/>
<polygon points="1464.5,197.3 1454.2,200.8 1479.3,202.7 1489.1,199.1" fill="#ac547f" stroke="#ac547f" stroke-width="0.7"/>
<polygon points="1465.1,197.5 1455.7,200.7 1478.7,202.5 1487.7,199.2" fill="#c86294"/>
<polygon points="1455.7,200.7 1478.7,202.5 1480.2,201.9 1457.2,200.2" fill="#d66b9f"/>
<polygon points="1440.4,384.8 1429.7,393.1 1454.1,397.3 1464.4,388.8" fill="#597fb4" stroke="#597fb4" stroke-width="0.7"/>
<polygon points="1441.0,385.3 1431.1,393.0 1453.5,396.8 1463.0,389.0" fill="#6894d2"/>
<polygon points="1431.1,393.0 1453.5,396.8 1455.1,395.5 1432.7,391.7" fill="#729fe0"/>
<polygon points="1382.5,385.0 1370.3,393.3 1394.0,397.5 1405.8,389.0" fill="#597fb4" stroke="#597fb4" stroke-width="0.7"/>
<polygon points="1383.0,385.5 1371.7,393.2 1393.5,397.0 1404.4,389.2" fill="#6894d2"/>
<polygon points="1371.7,393.2 1393.5,397.0 1395.3,395.7 1373.5,391.9" fill="#729fe0"/>
<polygon points="1476.3,307.2 1500.9,310.4 1501.9,284.7 1477.0,281.8" fill="#c4cad3" stroke="#c4cad3" stroke-width="0.7"/>
<polygon points="1477.3,306.4 1500.0,309.2 1500.9,285.6 1478.0,283.0" fill="#e4ecf6"/>
<polygon points="1478.0,283.0 1500.9,285.6 1500.8,288.0 1477.9,285.3" fill="#f3fbff"/>
<polygon points="1477.4,300.6 1500.2,303.4 1500.0,309.2 1477.3,306.4" fill="#d9e1ea"/>
<line x1="1476.3" y1="307.2" x2="1500.9" y2="310.4" stroke="#666a6e" stroke-width="1.5" opacity="0.55"/>
<polygon points="1252.1,418.3 1236.1,427.7 1258.7,432.4 1274.3,422.8" fill="#ac547f" stroke="#ac547f" stroke-width="0.7"/>
<polygon points="1252.4,418.9 1237.7,427.5 1258.4,431.8 1272.8,423.0" fill="#c86294"/>
<polygon points="1237.7,427.5 1258.4,431.8 1260.8,430.4 1240.1,426.1" fill="#d66b9f"/>
<polygon points="1534.7,307.2 1536.0,281.8 1527.5,287.6 1526.2,313.6" fill="#9e4971" stroke="#9e4971" stroke-width="0.7"/>
<polygon points="1534.4,306.5 1535.6,283.1 1527.8,288.4 1526.6,312.3" fill="#b85684"/>
<polygon points="1526.6,312.3 1527.8,288.4 1530.1,286.8 1529.0,310.5" fill="#8b4164"/>
<polygon points="1500.0,335.6 1525.0,339.1 1526.2,313.6 1500.9,310.4" fill="#bd628d" stroke="#bd628d" stroke-width="0.7"/>
<polygon points="1501.0,334.7 1524.1,337.9 1525.2,314.5 1501.9,311.5" fill="#dc72a5"/>
<polygon points="1501.9,311.5 1525.2,314.5 1525.1,316.8 1501.8,313.9" fill="#ea7cb1"/>
<polygon points="1501.2,329.0 1524.3,332.1 1524.1,337.9 1501.0,334.7" fill="#d26c9d"/>
<line x1="1500.0" y1="335.6" x2="1525.0" y2="339.1" stroke="#63334a" stroke-width="1.5" opacity="0.55"/>
<polygon points="1453.2,253.5 1477.8,255.9 1478.5,229.6 1453.7,227.4" fill="#373559" stroke="#373559" stroke-width="0.7"/>
<polygon points="1454.2,252.5 1476.8,254.8 1477.5,230.5 1454.7,228.5" fill="#403e68"/>
<polygon points="1454.7,228.5 1477.5,230.5 1477.4,233.0 1454.6,230.9" fill="#484672"/>
<polygon points="1454.3,246.6 1477.0,248.8 1476.8,254.8 1454.2,252.5" fill="#3d3b63"/>
<line x1="1453.2" y1="253.5" x2="1477.8" y2="255.9" stroke="#1c1b2e" stroke-width="1.5" opacity="0.55"/>
<polygon points="1288.1,389.4 1273.1,398.0 1296.1,402.3 1310.6,393.5" fill="#597fb4" stroke="#597fb4" stroke-width="0.7"/>
<polygon points="1288.4,389.9 1274.7,397.8 1295.8,401.8 1309.1,393.7" fill="#6894d2"/>
<polygon points="1274.7,397.8 1295.8,401.8 1297.9,400.5 1276.9,396.5" fill="#729fe0"/>
<polygon points="1511.8,446.0 1512.9,421.8 1503.7,431.3 1502.7,456.0" fill="#9e4971" stroke="#9e4971" stroke-width="0.7"/>
<polygon points="1511.5,445.4 1512.5,423.1 1504.0,431.9 1503.1,454.6" fill="#b85684"/>
<polygon points="1503.1,454.6 1504.0,431.9 1506.6,429.2 1505.7,451.8" fill="#8b4164"/>
<polygon points="1237.6,452.4 1260.0,457.3 1258.7,432.4 1236.1,427.7" fill="#bd628d" stroke="#bd628d" stroke-width="0.7"/>
<polygon points="1238.5,451.6 1259.1,456.2 1257.9,433.2 1237.1,428.9" fill="#dc72a5"/>
<polygon points="1237.1,428.9 1257.9,433.2 1258.0,435.5 1237.2,431.2" fill="#ea7cb1"/>
<polygon points="1238.1,445.9 1258.8,450.5 1259.1,456.2 1238.5,451.6" fill="#d26c9d"/>
<line x1="1237.6" y1="452.4" x2="1260.0" y2="457.3" stroke="#63334a" stroke-width="1.5" opacity="0.55"/>
<polygon points="1488.0,417.3 1478.3,426.6 1503.7,431.3 1512.9,421.8" fill="#ac547f" stroke="#ac547f" stroke-width="0.7"/>
<polygon points="1488.6,417.9 1479.7,426.4 1503.1,430.7 1511.5,422.0" fill="#c86294"/>
<polygon points="1479.7,426.4 1503.1,430.7 1504.4,429.3 1481.2,425.0" fill="#d66b9f"/>
<polygon points="1477.0,281.8 1501.9,284.7 1502.9,258.5 1477.8,255.9" fill="#c4cad3" stroke="#c4cad3" stroke-width="0.7"/>
<polygon points="1478.0,280.9 1501.0,283.5 1501.9,259.5 1478.7,257.1" fill="#e4ecf6"/>
<polygon points="1478.7,257.1 1501.9,259.5 1501.8,261.9 1478.6,259.5" fill="#f3fbff"/>
<polygon points="1478.2,275.0 1501.2,277.6 1501.0,283.5 1478.0,280.9" fill="#d9e1ea"/>
<line x1="1477.0" y1="281.8" x2="1501.9" y2="284.7" stroke="#666a6e" stroke-width="1.5" opacity="0.55"/>
<polygon points="1489.1,199.1 1479.3,202.7 1505.0,204.6 1514.2,201.0" fill="#ac547f" stroke="#ac547f" stroke-width="0.7"/>
<polygon points="1489.7,199.3 1480.7,202.6 1504.3,204.4 1512.8,201.0" fill="#c86294"/>
<polygon points="1480.7,202.6 1504.3,204.4 1505.7,203.9 1482.2,202.1" fill="#d66b9f"/>
<polygon points="1488.0,417.3 1488.9,392.9 1479.1,401.6 1478.3,426.6" fill="#496796" stroke="#496796" stroke-width="0.7"/>
<polygon points="1487.7,416.7 1488.4,394.3 1479.5,402.3 1478.8,425.2" fill="#5578af"/>
<polygon points="1478.8,425.2 1479.5,402.3 1482.2,399.8 1481.5,422.6" fill="#405b85"/>
<polygon points="1536.0,281.8 1537.2,256.0 1528.7,261.1 1527.5,287.6" fill="#9e4971" stroke="#9e4971" stroke-width="0.7"/>
<polygon points="1535.7,281.0 1536.9,257.2 1529.0,262.0 1527.9,286.3" fill="#b85684"/>
<polygon points="1527.9,286.3 1529.0,262.0 1531.4,260.5 1530.2,284.7" fill="#8b4164"/>
<polygon points="1464.4,388.8 1454.1,397.3 1479.1,401.6 1488.9,392.9" fill="#597fb4" stroke="#597fb4" stroke-width="0.7"/>
<polygon points="1464.9,389.3 1455.5,397.2 1478.5,401.1 1487.5,393.1" fill="#6894d2"/>
<polygon points="1455.5,397.2 1478.5,401.1 1480.0,399.8 1457.0,395.9" fill="#729fe0"/>
<polygon points="1453.7,227.4 1478.5,229.6 1479.3,202.7 1454.2,200.8" fill="#bd628d" stroke="#bd628d" stroke-width="0.7"/>
<polygon points="1454.7,226.4 1477.5,228.4 1478.3,203.7 1455.2,201.9" fill="#dc72a5"/>
<polygon points="1455.2,201.9 1478.3,203.7 1478.2,206.2 1455.2,204.4" fill="#ea7cb1"/>
<polygon points="1454.8,220.3 1477.7,222.3 1477.5,228.4 1454.7,226.4" fill="#d26c9d"/>
<line x1="1453.7" y1="227.4" x2="1478.5" y2="229.6" stroke="#63334a" stroke-width="1.5" opacity="0.55"/>
<polygon points="1500.9,310.4 1526.2,313.6 1527.5,287.6 1501.9,284.7" fill="#bd628d" stroke="#bd628d" stroke-width="0.7"/>
<polygon points="1502.0,309.5 1525.3,312.4 1526.4,288.5 1502.9,285.8" fill="#dc72a5"/>
<polygon points="1502.9,285.8 1526.4,288.5 1526.3,290.9 1502.8,288.2" fill="#ea7cb1"/>
<polygon points="1502.2,303.6 1525.5,306.5 1525.3,312.4 1502.0,309.5" fill="#d26c9d"/>
<line x1="1500.9" y1="310.4" x2="1526.2" y2="313.6" stroke="#63334a" stroke-width="1.5" opacity="0.55"/>
<polygon points="1347.1,389.2 1333.7,397.8 1357.3,402.1 1370.3,393.3" fill="#597fb4" stroke="#597fb4" stroke-width="0.7"/>
<polygon points="1347.5,389.7 1335.2,397.6 1356.9,401.5 1368.8,393.5" fill="#6894d2"/>
<polygon points="1335.2,397.6 1356.9,401.5 1358.8,400.2 1337.2,396.3" fill="#729fe0"/>
<polygon points="1274.3,422.8 1297.0,427.4 1296.1,402.3 1273.1,398.0" fill="#6087be" stroke="#6087be" stroke-width="0.7"/>
<polygon points="1275.2,422.0 1296.1,426.2 1295.2,403.1 1274.1,399.1" fill="#709ede"/>
<polygon points="1274.1,399.1 1295.2,403.1 1295.3,405.5 1274.2,401.5" fill="#7aaaec"/>
<polygon points="1274.9,416.3 1295.9,420.5 1296.1,426.2 1275.2,422.0" fill="#6a96d4"/>
<line x1="1274.3" y1="422.8" x2="1297.0" y2="427.4" stroke="#324763" stroke-width="1.5" opacity="0.55"/>
<polygon points="1405.8,389.0 1394.0,397.5 1418.3,401.9 1429.7,393.1" fill="#597fb4" stroke="#597fb4" stroke-width="0.7"/>
<polygon points="1406.3,389.5 1395.5,397.4 1417.8,401.3 1428.3,393.3" fill="#6894d2"/>
<polygon points="1395.5,397.4 1417.8,401.3 1419.5,400.0 1397.2,396.1" fill="#729fe0"/>
<polygon points="1477.8,255.9 1502.9,258.5 1503.9,231.8 1478.5,229.6" fill="#373559" stroke="#373559" stroke-width="0.7"/>
<polygon points="1478.8,255.0 1501.9,257.3 1502.9,232.8 1479.5,230.7" fill="#403e68"/>
<polygon points="1479.5,230.7 1502.9,232.8 1502.8,235.3 1479.4,233.2" fill="#484672"/>
<polygon points="1479.0,249.0 1502.2,251.3 1501.9,257.3 1478.8,255.0" fill="#3d3b63"/>
<line x1="1477.8" y1="255.9" x2="1502.9" y2="258.5" stroke="#1c1b2e" stroke-width="1.5" opacity="0.55"/>
<polygon points="1537.2,256.0 1538.6,229.7 1530.0,234.1 1528.7,261.1" fill="#9e4971" stroke="#9e4971" stroke-width="0.7"/>
<polygon points="1537.0,255.2 1538.2,230.9 1530.3,235.1 1529.1,259.8" fill="#b85684"/>
<polygon points="1529.1,259.8 1530.3,235.1 1532.7,233.8 1531.5,258.4" fill="#8b4164"/>
<polygon points="1274.3,422.8 1258.7,432.4 1281.9,437.2 1297.0,427.4" fill="#ac547f" stroke="#ac547f" stroke-width="0.7"/>
<polygon points="1274.6,423.4 1260.3,432.2 1281.6,436.6 1295.5,427.6" fill="#c86294"/>
<polygon points="1260.3,432.2 1281.6,436.6 1283.8,435.2 1262.6,430.8" fill="#d66b9f"/>
<polygon points="1501.9,284.7 1527.5,287.6 1528.7,261.1 1502.9,258.5" fill="#bd628d" stroke="#bd628d" stroke-width="0.7"/>
<polygon points="1503.0,283.8 1526.5,286.4 1527.6,262.1 1503.9,259.7" fill="#dc72a5"/>
<polygon points="1503.9,259.7 1527.6,262.1 1527.5,264.5 1503.8,262.1" fill="#ea7cb1"/>
<polygon points="1503.2,277.8 1526.8,280.4 1526.5,286.4 1503.0,283.8" fill="#d26c9d"/>
<line x1="1501.9" y1="284.7" x2="1527.5" y2="287.6" stroke="#63334a" stroke-width="1.5" opacity="0.55"/>
<polygon points="1514.2,201.0 1505.0,204.6 1531.3,206.6 1539.9,202.9" fill="#ac547f" stroke="#ac547f" stroke-width="0.7"/>
<polygon points="1514.8,201.2 1506.4,204.6 1530.6,206.4 1538.5,202.9" fill="#c86294"/>
<polygon points="1506.4,204.6 1530.6,206.4 1531.9,205.8 1507.8,204.0" fill="#d66b9f"/>
<polygon points="1478.5,229.6 1503.9,231.8 1505.0,204.6 1479.3,202.7" fill="#bd628d" stroke="#bd628d" stroke-width="0.7"/>
<polygon points="1479.6,228.6 1502.9,230.7 1503.9,205.7 1480.3,203.9" fill="#dc72a5"/>
<polygon points="1480.3,203.9 1503.9,205.7 1503.8,208.2 1480.2,206.4" fill="#ea7cb1"/>
<polygon points="1479.7,222.5 1503.2,224.5 1502.9,230.7 1479.6,228.6" fill="#d26c9d"/>
<line x1="1478.5" y1="229.6" x2="1503.9" y2="231.8" stroke="#63334a" stroke-width="1.5" opacity="0.55"/>
<polygon points="1538.6,229.7 1539.9,202.9 1531.3,206.6 1530.0,234.1" fill="#9e4971" stroke="#9e4971" stroke-width="0.7"/>
<polygon points="1538.3,228.8 1539.5,204.1 1531.6,207.6 1530.4,232.9" fill="#b85684"/>
<polygon points="1530.4,232.9 1531.6,207.6 1534.0,206.5 1532.8,231.6" fill="#8b4164"/>
<polygon points="1310.6,393.5 1296.1,402.3 1319.6,406.8 1333.7,397.8" fill="#597fb4" stroke="#597fb4" stroke-width="0.7"/>
<polygon points="1311.0,394.0 1297.6,402.1 1319.2,406.2 1332.2,397.9" fill="#6894d2"/>
<polygon points="1297.6,402.1 1319.2,406.2 1321.3,404.9 1299.8,400.8" fill="#729fe0"/>
<polygon points="1260.0,457.3 1283.0,462.4 1281.9,437.2 1258.7,432.4" fill="#bd628d" stroke="#bd628d" stroke-width="0.7"/>
<polygon points="1260.9,456.6 1282.0,461.2 1281.0,438.1 1259.7,433.6" fill="#dc72a5"/>
<polygon points="1259.7,433.6 1281.0,438.1 1281.1,440.4 1259.8,435.9" fill="#ea7cb1"/>
<polygon points="1260.6,450.9 1281.7,455.5 1282.0,461.2 1260.9,456.6" fill="#d26c9d"/>
<line x1="1260.0" y1="457.3" x2="1283.0" y2="462.4" stroke="#63334a" stroke-width="1.5" opacity="0.55"/>
<polygon points="1429.7,393.1 1418.3,401.9 1443.3,406.3 1454.1,397.3" fill="#597fb4" stroke="#597fb4" stroke-width="0.7"/>
<polygon points="1430.2,393.6 1419.8,401.7 1442.7,405.7 1452.7,397.5" fill="#6894d2"/>
<polygon points="1419.8,401.7 1442.7,405.7 1444.3,404.4 1421.5,400.4" fill="#729fe0"/>
<polygon points="1502.9,258.5 1528.7,261.1 1530.0,234.1 1503.9,231.8" fill="#bd628d" stroke="#bd628d" stroke-width="0.7"/>
<polygon points="1504.0,257.6 1527.7,260.0 1528.9,235.1 1504.9,233.0" fill="#dc72a5"/>
<polygon points="1504.9,233.0 1528.9,235.1 1528.8,237.6 1504.8,235.5" fill="#ea7cb1"/>
<polygon points="1504.2,251.5 1528.0,253.8 1527.7,260.0 1504.0,257.6" fill="#d26c9d"/>
<line x1="1502.9" y1="258.5" x2="1528.7" y2="261.1" stroke="#63334a" stroke-width="1.5" opacity="0.55"/>
<polygon points="1370.3,393.3 1357.3,402.1 1381.5,406.5 1394.0,397.5" fill="#597fb4" stroke="#597fb4" stroke-width="0.7"/>
<polygon points="1370.7,393.8 1358.8,401.9 1381.1,406.0 1392.6,397.7" fill="#6894d2"/>
<polygon points="1358.8,401.9 1381.1,406.0 1383.0,404.6 1360.8,400.6" fill="#729fe0"/>
<polygon points="1297.0,427.4 1320.3,432.1 1319.6,406.8 1296.1,402.3" fill="#6087be" stroke="#6087be" stroke-width="0.7"/>
<polygon points="1297.9,426.6 1319.4,430.9 1318.7,407.6 1297.0,403.5" fill="#709ede"/>
<polygon points="1297.0,403.5 1318.7,407.6 1318.7,409.9 1297.1,405.8" fill="#7aaaec"/>
<polygon points="1297.7,420.9 1319.2,425.1 1319.4,430.9 1297.9,426.6" fill="#6a96d4"/>
<line x1="1297.0" y1="427.4" x2="1320.3" y2="432.1" stroke="#324763" stroke-width="1.5" opacity="0.55"/>
<polygon points="1503.9,231.8 1530.0,234.1 1531.3,206.6 1505.0,204.6" fill="#bd628d" stroke="#bd628d" stroke-width="0.7"/>
<polygon points="1505.0,230.8 1529.0,233.0 1530.2,207.7 1506.0,205.8" fill="#dc72a5"/>
<polygon points="1506.0,205.8 1530.2,207.7 1530.1,210.2 1505.9,208.3" fill="#ea7cb1"/>
<polygon points="1505.2,224.6 1529.3,226.7 1529.0,233.0 1505.0,230.8" fill="#d26c9d"/>
<line x1="1503.9" y1="231.8" x2="1530.0" y2="234.1" stroke="#63334a" stroke-width="1.5" opacity="0.55"/>
<polygon points="1502.7,456.0 1503.7,431.3 1494.1,441.3 1493.1,466.6" fill="#9e4971" stroke="#9e4971" stroke-width="0.7"/>
<polygon points="1502.4,455.5 1503.3,432.7 1494.4,441.9 1493.6,465.2" fill="#b85684"/>
<polygon points="1493.6,465.2 1494.4,441.9 1497.1,439.1 1496.2,462.2" fill="#8b4164"/>
<polygon points="1297.0,427.4 1281.9,437.2 1305.6,442.2 1320.3,432.1" fill="#ac547f" stroke="#ac547f" stroke-width="0.7"/>
<polygon points="1297.4,428.0 1283.4,437.0 1305.3,441.6 1318.8,432.3" fill="#c86294"/>
<polygon points="1283.4,437.0 1305.3,441.6 1307.5,440.1 1285.7,435.6" fill="#d66b9f"/>
<polygon points="1478.3,426.6 1468.1,436.4 1494.1,441.3 1503.7,431.3" fill="#ac547f" stroke="#ac547f" stroke-width="0.7"/>
<polygon points="1478.9,427.2 1469.6,436.2 1493.4,440.7 1502.3,431.5" fill="#c86294"/>
<polygon points="1469.6,436.2 1493.4,440.7 1494.9,439.2 1471.1,434.7" fill="#d66b9f"/>
<polygon points="1478.3,426.6 1479.1,401.6 1468.8,410.8 1468.1,436.4" fill="#496796" stroke="#496796" stroke-width="0.7"/>
<polygon points="1478.0,426.0 1478.7,403.0 1469.2,411.5 1468.6,434.9" fill="#5578af"/>
<polygon points="1468.6,434.9 1469.2,411.5 1472.1,408.9 1471.4,432.2" fill="#405b85"/>
<polygon points="1454.1,397.3 1443.3,406.3 1468.8,410.8 1479.1,401.6" fill="#597fb4" stroke="#597fb4" stroke-width="0.7"/>
<polygon points="1454.7,397.9 1444.7,406.1 1468.2,410.3 1477.7,401.8" fill="#6894d2"/>
<polygon points="1444.7,406.1 1468.2,410.3 1469.8,408.9 1446.3,404.7" fill="#729fe0"/>
<polygon points="1333.7,397.8 1319.6,406.8 1343.7,411.3 1357.3,402.1" fill="#597fb4" stroke="#597fb4" stroke-width="0.7"/>
<polygon points="1334.1,398.3 1321.1,406.6 1343.3,410.7 1355.8,402.3" fill="#6894d2"/>
<polygon points="1321.1,406.6 1343.3,410.7 1345.3,409.4 1323.2,405.2" fill="#729fe0"/>
<polygon points="1394.0,397.5 1381.5,406.5 1406.4,411.1 1418.3,401.9" fill="#597fb4" stroke="#597fb4" stroke-width="0.7"/>
<polygon points="1394.5,398.1 1383.0,406.3 1405.9,410.5 1416.9,402.0" fill="#6894d2"/>
<polygon points="1383.0,406.3 1405.9,410.5 1407.7,409.1 1384.9,405.0" fill="#729fe0"/>
<polygon points="1283.0,462.4 1306.5,467.7 1305.6,442.2 1281.9,437.2" fill="#bd628d" stroke="#bd628d" stroke-width="0.7"/>
<polygon points="1283.9,461.7 1305.5,466.5 1304.7,443.0 1282.9,438.5" fill="#dc72a5"/>
<polygon points="1282.9,438.5 1304.7,443.0 1304.8,445.4 1283.0,440.8" fill="#ea7cb1"/>
<polygon points="1283.6,455.9 1305.3,460.6 1305.5,466.5 1283.9,461.7" fill="#d26c9d"/>
<line x1="1283.0" y1="462.4" x2="1306.5" y2="467.7" stroke="#63334a" stroke-width="1.5" opacity="0.55"/>
<polygon points="1320.3,432.1 1344.2,437.0 1343.7,411.3 1319.6,406.8" fill="#6087be" stroke="#6087be" stroke-width="0.7"/>
<polygon points="1321.2,431.3 1343.2,435.7 1342.7,412.2 1320.6,408.0" fill="#709ede"/>
<polygon points="1320.6,408.0 1342.7,412.2 1342.8,414.5 1320.6,410.3" fill="#7aaaec"/>
<polygon points="1321.1,425.5 1343.1,429.9 1343.2,435.7 1321.2,431.3" fill="#6a96d4"/>
<line x1="1320.3" y1="432.1" x2="1344.2" y2="437.0" stroke="#324763" stroke-width="1.5" opacity="0.55"/>
<polygon points="1320.3,432.1 1305.6,442.2 1330.0,447.3 1344.2,437.0" fill="#ac547f" stroke="#ac547f" stroke-width="0.7"/>
<polygon points="1320.7,432.7 1307.2,442.0 1329.6,446.7 1342.7,437.2" fill="#c86294"/>
<polygon points="1307.2,442.0 1329.6,446.7 1331.7,445.1 1309.4,440.5" fill="#d66b9f"/>
<polygon points="1357.3,402.1 1343.7,411.3 1368.4,416.0 1381.5,406.5" fill="#597fb4" stroke="#597fb4" stroke-width="0.7"/>
<polygon points="1357.8,402.6 1345.2,411.1 1367.9,415.4 1380.1,406.7" fill="#6894d2"/>
<polygon points="1345.2,411.1 1367.9,415.4 1369.9,414.0 1347.3,409.7" fill="#729fe0"/>
<polygon points="1418.3,401.9 1406.4,411.1 1431.8,415.7 1443.3,406.3" fill="#597fb4" stroke="#597fb4" stroke-width="0.7"/>
<polygon points="1418.9,402.4 1407.9,410.9 1431.3,415.1 1441.8,406.5" fill="#6894d2"/>
<polygon points="1407.9,410.9 1431.3,415.1 1433.0,413.7 1409.7,409.5" fill="#729fe0"/>
<polygon points="1306.5,467.7 1330.6,473.0 1330.0,447.3 1305.6,442.2" fill="#bd628d" stroke="#bd628d" stroke-width="0.7"/>
<polygon points="1307.4,466.9 1329.6,471.8 1329.0,448.1 1306.6,443.4" fill="#dc72a5"/>
<polygon points="1306.6,443.4 1329.0,448.1 1329.1,450.5 1306.7,445.8" fill="#ea7cb1"/>
<polygon points="1307.2,461.1 1329.5,465.9 1329.6,471.8 1307.4,466.9" fill="#d26c9d"/>
<line x1="1306.5" y1="467.7" x2="1330.6" y2="473.0" stroke="#63334a" stroke-width="1.5" opacity="0.55"/>
<polygon points="1344.2,437.0 1368.7,441.9 1368.4,416.0 1343.7,411.3" fill="#6087be" stroke="#6087be" stroke-width="0.7"/>
<polygon points="1345.1,436.1 1367.7,440.7 1367.4,416.8 1344.7,412.5" fill="#709ede"/>
<polygon points="1344.7,412.5 1367.4,416.8 1367.4,419.2 1344.7,414.9" fill="#7aaaec"/>
<polygon points="1345.0,430.3 1367.6,434.8 1367.7,440.7 1345.1,436.1" fill="#6a96d4"/>
<line x1="1344.2" y1="437.0" x2="1368.7" y2="441.9" stroke="#324763" stroke-width="1.5" opacity="0.55"/>
<polygon points="1493.1,466.6 1494.1,441.3 1483.9,451.8 1483.0,477.8" fill="#9e4971" stroke="#9e4971" stroke-width="0.7"/>
<polygon points="1492.8,466.0 1493.6,442.7 1484.3,452.5 1483.5,476.3" fill="#b85684"/>
<polygon points="1483.5,476.3 1484.3,452.5 1487.1,449.5 1486.3,473.2" fill="#8b4164"/>
<polygon points="1468.1,436.4 1457.4,446.7 1483.9,451.8 1494.1,441.3" fill="#ac547f" stroke="#ac547f" stroke-width="0.7"/>
<polygon points="1468.7,437.0 1458.8,446.4 1483.2,451.2 1492.6,441.5" fill="#c86294"/>
<polygon points="1458.8,446.4 1483.2,451.2 1484.8,449.6 1460.5,444.9" fill="#d66b9f"/>
<polygon points="1468.1,436.4 1468.8,410.8 1458.0,420.5 1457.4,446.7" fill="#496796" stroke="#496796" stroke-width="0.7"/>
<polygon points="1467.7,435.7 1468.4,412.2 1458.4,421.2 1457.8,445.2" fill="#5578af"/>
<polygon points="1457.8,445.2 1458.4,421.2 1461.4,418.4 1460.8,442.3" fill="#405b85"/>
<polygon points="1443.3,406.3 1431.8,415.7 1458.0,420.5 1468.8,410.8" fill="#597fb4" stroke="#597fb4" stroke-width="0.7"/>
<polygon points="1443.8,406.8 1433.3,415.5 1457.4,419.9 1467.4,411.0" fill="#6894d2"/>
<polygon points="1433.3,415.5 1457.4,419.9 1459.0,418.4 1435.1,414.1" fill="#729fe0"/>
<polygon points="1344.2,437.0 1330.0,447.3 1354.9,452.5 1368.7,441.9" fill="#ac547f" stroke="#ac547f" stroke-width="0.7"/>
<polygon points="1344.6,437.6 1331.5,447.1 1354.5,451.9 1367.1,442.1" fill="#c86294"/>
<polygon points="1331.5,447.1 1354.5,451.9 1356.6,450.3 1333.7,445.5" fill="#d66b9f"/>
<polygon points="1381.5,406.5 1368.4,416.0 1393.8,420.8 1406.4,411.1" fill="#597fb4" stroke="#597fb4" stroke-width="0.7"/>
<polygon points="1382.0,407.1 1369.9,415.8 1393.2,420.2 1404.9,411.3" fill="#6894d2"/>
<polygon points="1369.9,415.8 1393.2,420.2 1395.1,418.7 1371.9,414.4" fill="#729fe0"/>
<polygon points="1330.6,473.0 1355.3,478.5 1354.9,452.5 1330.0,447.3" fill="#bd628d" stroke="#bd628d" stroke-width="0.7"/>
<polygon points="1331.6,472.2 1354.3,477.3 1353.9,453.4 1331.0,448.6" fill="#dc72a5"/>
<polygon points="1331.0,448.6 1353.9,453.4 1354.0,455.8 1331.0,450.9" fill="#ea7cb1"/>
<polygon points="1331.4,466.4 1354.2,471.4 1354.3,477.3 1331.6,472.2" fill="#d26c9d"/>
<line x1="1330.6" y1="473.0" x2="1355.3" y2="478.5" stroke="#63334a" stroke-width="1.5" opacity="0.55"/>
<polygon points="1368.7,441.9 1393.8,447.0 1393.8,420.8 1368.4,416.0" fill="#6087be" stroke="#6087be" stroke-width="0.7"/>
<polygon points="1369.7,441.1 1392.8,445.7 1392.7,421.6 1369.4,417.2" fill="#709ede"/>
<polygon points="1369.4,417.2 1392.7,421.6 1392.7,424.1 1369.4,419.6" fill="#7aaaec"/>
<polygon points="1369.6,435.2 1392.8,439.8 1392.8,445.7 1369.7,441.1" fill="#6a96d4"/>
<line x1="1368.7" y1="441.9" x2="1393.8" y2="447.0" stroke="#324763" stroke-width="1.5" opacity="0.55"/>
<polygon points="1406.4,411.1 1393.8,420.8 1419.8,425.7 1431.8,415.7" fill="#597fb4" stroke="#597fb4" stroke-width="0.7"/>
<polygon points="1406.9,411.6 1395.3,420.6 1419.2,425.1 1430.3,415.9" fill="#6894d2"/>
<polygon points="1395.3,420.6 1419.2,425.1 1421.0,423.6 1397.2,419.1" fill="#729fe0"/>
<polygon points="1368.7,441.9 1354.9,452.5 1380.6,457.9 1393.8,447.0" fill="#ac547f" stroke="#ac547f" stroke-width="0.7"/>
<polygon points="1369.1,442.5 1356.5,452.3 1380.1,457.2 1392.3,447.2" fill="#c86294"/>
<polygon points="1356.5,452.3 1380.1,457.2 1382.1,455.6 1358.6,450.7" fill="#d66b9f"/>
<polygon points="1355.3,478.5 1380.7,484.2 1380.6,457.9 1354.9,452.5" fill="#bd628d" stroke="#bd628d" stroke-width="0.7"/>
<polygon points="1356.3,477.7 1379.7,482.9 1379.5,458.7 1356.0,453.8" fill="#dc72a5"/>
<polygon points="1356.0,453.8 1379.5,458.7 1379.6,461.2 1356.0,456.2" fill="#ea7cb1"/>
<polygon points="1356.2,471.8 1379.7,476.9 1379.7,482.9 1356.3,477.7" fill="#d26c9d"/>
<line x1="1355.3" y1="478.5" x2="1380.7" y2="484.2" stroke="#63334a" stroke-width="1.5" opacity="0.55"/>
<polygon points="1393.8,447.0 1419.5,452.2 1419.8,425.7 1393.8,420.8" fill="#6087be" stroke="#6087be" stroke-width="0.7"/>
<polygon points="1394.8,446.1 1418.5,450.9 1418.7,426.6 1394.8,422.0" fill="#709ede"/>
<polygon points="1394.8,422.0 1418.7,426.6 1418.7,429.0 1394.8,424.5" fill="#7aaaec"/>
<polygon points="1394.8,440.2 1418.6,444.9 1418.5,450.9 1394.8,446.1" fill="#6a96d4"/>
<line x1="1393.8" y1="447.0" x2="1419.5" y2="452.2" stroke="#324763" stroke-width="1.5" opacity="0.55"/>
<polygon points="1483.0,477.8 1483.9,451.8 1473.1,463.0 1472.3,489.6" fill="#9e4971" stroke="#9e4971" stroke-width="0.7"/>
<polygon points="1482.6,477.2 1483.4,453.3 1473.5,463.6 1472.8,488.0" fill="#b85684"/>
<polygon points="1472.8,488.0 1473.5,463.6 1476.6,460.5 1475.8,484.7" fill="#8b4164"/>
<polygon points="1457.4,446.7 1446.0,457.5 1473.1,463.0 1483.9,451.8" fill="#ac547f" stroke="#ac547f" stroke-width="0.7"/>
<polygon points="1458.0,447.3 1447.5,457.3 1472.5,462.3 1482.4,452.1" fill="#c86294"/>
<polygon points="1447.5,457.3 1472.5,462.3 1474.1,460.7 1449.2,455.7" fill="#d66b9f"/>
<polygon points="1457.4,446.7 1458.0,420.5 1446.5,430.7 1446.0,457.5" fill="#496796" stroke="#496796" stroke-width="0.7"/>
<polygon points="1456.9,446.0 1457.5,422.0 1446.9,431.4 1446.5,456.0" fill="#5578af"/>
<polygon points="1446.5,456.0 1446.9,431.4 1450.2,428.5 1449.7,453.0" fill="#405b85"/>
<polygon points="1431.8,415.7 1419.8,425.7 1446.5,430.7 1458.0,420.5" fill="#597fb4" stroke="#597fb4" stroke-width="0.7"/>
<polygon points="1432.4,416.3 1421.3,425.5 1445.9,430.1 1456.5,420.7" fill="#6894d2"/>
<polygon points="1421.3,425.5 1445.9,430.1 1447.6,428.6 1423.1,424.0" fill="#729fe0"/>
<polygon points="1393.8,447.0 1380.6,457.9 1406.9,463.4 1419.5,452.2" fill="#ac547f" stroke="#ac547f" stroke-width="0.7"/>
<polygon points="1394.3,447.6 1382.2,457.7 1406.3,462.7 1418.0,452.4" fill="#c86294"/>
<polygon points="1382.2,457.7 1406.3,462.7 1408.3,461.0 1384.1,456.0" fill="#d66b9f"/>
<polygon points="1419.5,452.2 1446.0,457.5 1446.5,430.7 1419.8,425.7" fill="#6087be" stroke="#6087be" stroke-width="0.7"/>
<polygon points="1420.6,451.3 1444.9,456.3 1445.4,431.6 1420.8,427.0" fill="#709ede"/>
<polygon points="1420.8,427.0 1445.4,431.6 1445.3,434.1 1420.8,429.4" fill="#7aaaec"/>
<polygon points="1420.6,445.3 1445.0,450.1 1444.9,456.3 1420.6,451.3" fill="#6a96d4"/>
<line x1="1419.5" y1="452.2" x2="1446.0" y2="457.5" stroke="#324763" stroke-width="1.5" opacity="0.55"/>
<polygon points="1380.7,484.2 1406.8,490.0 1406.9,463.4 1380.6,457.9" fill="#bd628d" stroke="#bd628d" stroke-width="0.7"/>
<polygon points="1381.8,483.4 1405.7,488.7 1405.8,464.2 1381.6,459.2" fill="#dc72a5"/>
<polygon points="1381.6,459.2 1405.8,464.2 1405.8,466.7 1381.6,461.6" fill="#ea7cb1"/>
<polygon points="1381.7,477.4 1405.8,482.6 1405.7,488.7 1381.8,483.4" fill="#d26c9d"/>
<line x1="1380.7" y1="484.2" x2="1406.8" y2="490.0" stroke="#63334a" stroke-width="1.5" opacity="0.55"/>
<polygon points="1419.5,452.2 1406.9,463.4 1433.9,469.0 1446.0,457.5" fill="#ac547f" stroke="#ac547f" stroke-width="0.7"/>
<polygon points="1420.1,452.8 1408.5,463.2 1433.3,468.3 1444.4,457.8" fill="#c86294"/>
<polygon points="1408.5,463.2 1433.3,468.3 1435.1,466.6 1410.4,461.5" fill="#d66b9f"/>
<polygon points="1406.8,490.0 1433.5,495.9 1433.9,469.0 1406.9,463.4" fill="#bd628d" stroke="#bd628d" stroke-width="0.7"/>
<polygon points="1407.8,489.2 1432.5,494.6 1432.8,469.9 1408.0,464.7" fill="#dc72a5"/>
<polygon points="1408.0,464.7 1432.8,469.9 1432.8,472.4 1407.9,467.2" fill="#ea7cb1"/>
<polygon points="1407.9,483.1 1432.6,488.5 1432.5,494.6 1407.8,489.2" fill="#d26c9d"/>
<line x1="1406.8" y1="490.0" x2="1433.5" y2="495.9" stroke="#63334a" stroke-width="1.5" opacity="0.55"/>
<polygon points="1472.3,489.6 1473.1,463.0 1461.7,474.9 1461.0,502.1" fill="#9e4971" stroke="#9e4971" stroke-width="0.7"/>
<polygon points="1471.9,489.0 1472.6,464.6 1462.2,475.5 1461.5,500.5" fill="#b85684"/>
<polygon points="1461.5,500.5 1462.2,475.5 1465.4,472.1 1464.7,497.0" fill="#8b4164"/>
<polygon points="1446.0,457.5 1433.9,469.0 1461.7,474.9 1473.1,463.0" fill="#ac547f" stroke="#ac547f" stroke-width="0.7"/>
<polygon points="1446.6,458.2 1435.5,468.8 1461.1,474.1 1471.6,463.3" fill="#c86294"/>
<polygon points="1435.5,468.8 1461.1,474.1 1462.8,472.4 1437.3,467.1" fill="#d66b9f"/>
<polygon points="1433.5,495.9 1461.0,502.1 1461.7,474.9 1433.9,469.0" fill="#bd628d" stroke="#bd628d" stroke-width="0.7"/>
<polygon points="1434.6,495.1 1459.9,500.7 1460.6,475.7 1435.0,470.4" fill="#dc72a5"/>
<polygon points="1435.0,470.4 1460.6,475.7 1460.5,478.2 1435.0,472.9" fill="#ea7cb1"/>
<polygon points="1434.7,489.0 1460.1,494.5 1459.9,500.7 1434.6,495.1" fill="#d26c9d"/>
<line x1="1433.5" y1="495.9" x2="1461.0" y2="502.1" stroke="#63334a" stroke-width="1.5" opacity="0.55"/>
<line x1="1288.6" y1="306.1" x2="1538.8" y2="340.7" stroke="#ff0000" stroke-width="2.7"/>
<polygon points="1306.3,309.0 1309.9,305.4 1313.5,309.0 1309.9,312.6" fill="#ff0000"/>
<polygon points="1328.1,312.0 1331.7,308.5 1335.2,312.0 1331.7,315.6" fill="#ff0000"/>
<polygon points="1350.3,315.1 1353.9,311.5 1357.5,315.1 1353.9,318.7" fill="#ff0000"/>
<polygon points="1373.1,318.3 1376.7,314.7 1380.3,318.3 1376.7,321.8" fill="#ff0000"/>
<polygon points="1420.3,324.8 1423.9,321.2 1427.4,324.8 1423.9,328.4" fill="#ff0000"/>
<polygon points="1444.8,328.2 1448.3,324.6 1451.9,328.2 1448.3,331.8" fill="#ff0000"/>
<polygon points="1469.8,331.7 1473.4,328.1 1477.0,331.7 1473.4,335.2" fill="#ff0000"/>
<polygon points="1495.5,335.2 1499.1,331.7 1502.6,335.2 1499.1,338.8" fill="#ff0000"/>
<polygon points="1538.8,340.7 1510.5,345.8 1512.8,329.3" fill="#ff0000"/>
<line x1="1399.9" y1="406.8" x2="1400.2" y2="189.7" stroke="#00f000" stroke-width="2.7"/>
<circle cx="1399.9" cy="394.9" r="3.6" fill="#00f000"/>
<circle cx="1399.9" cy="370.9" r="3.6" fill="#00f000"/>
<circle cx="1400.0" cy="346.4" r="3.6" fill="#00f000"/>
<circle cx="1400.0" cy="296.1" r="3.6" fill="#00f000"/>
<circle cx="1400.1" cy="270.3" r="3.6" fill="#00f000"/>
<circle cx="1400.1" cy="243.9" r="3.6" fill="#00f000"/>
<circle cx="1400.1" cy="217.0" r="3.6" fill="#00f000"/>
<polygon points="1401.7,175.8 1398.7,175.8 1391.2,202.6 1409.1,202.6" fill="#00f000"/>
<line x1="1416.9" y1="312.0" x2="1325.0" y2="363.8" stroke="#0000ff" stroke-width="2.4"/>
<circle cx="1411.4" cy="315.1" r="3.6" fill="#0000ff"/>
<circle cx="1388.0" cy="328.3" r="3.6" fill="#0000ff"/>
<circle cx="1375.3" cy="335.4" r="3.6" fill="#0000ff"/>
<circle cx="1361.9" cy="343.0" r="3.6" fill="#0000ff"/>
<circle cx="1347.8" cy="350.9" r="3.6" fill="#0000ff"/>
<polygon points="1325.0,365.0 1334.5,347.1 1342.8,345.9 1359.5,337.6 1361.9,340.0 1345.2,365.0" fill="#0000ff"/>
<rect x="1397.6" y="319.1" width="4.8" height="4.8" fill="#fff"/>
<line x1="1223.0" y1="212.0" x2="1467.8" y2="234.5" stroke="#ffffff" stroke-width="2.0" stroke-linecap="square"/>
<line x1="1352.7" y1="181.7" x2="1555.9" y2="195.9" stroke="#ffffff" stroke-width="2.0" stroke-linecap="square"/>
<line x1="1223.0" y1="212.0" x2="1352.7" y2="181.7" stroke="#ffffff" stroke-width="2.0" stroke-linecap="square"/>
<line x1="1467.8" y1="234.5" x2="1555.9" y2="195.9" stroke="#ffffff" stroke-width="2.0" stroke-linecap="square"/>
<line x1="1223.0" y1="212.0" x2="1237.6" y2="452.4" stroke="#ffffff" stroke-width="2.0" stroke-linecap="square"/>
<line x1="1467.8" y1="234.5" x2="1461.0" y2="502.1" stroke="#ffffff" stroke-width="2.0" stroke-linecap="square"/>
<line x1="1237.6" y1="452.4" x2="1461.0" y2="502.1" stroke="#ffffff" stroke-width="2.0" stroke-linecap="square"/>
<line x1="1461.0" y1="502.1" x2="1543.9" y2="410.5" stroke="#ffffff" stroke-width="2.0" stroke-linecap="square"/>
<line x1="1555.9" y1="195.9" x2="1543.9" y2="410.5" stroke="#ffffff" stroke-width="2.0" stroke-linecap="square"/>
<line x1="1551.5" y1="398.0" x2="1562.1" y2="208.5" stroke="#33cc22" stroke-width="0.8"/>
<circle cx="1551.5" cy="398.0" r="1.4" fill="#33cc22"/>
<text x="1559.3" y="406.2" fill="#33cc22" font-family="Liberation Sans" font-weight="bold" font-size="15.5">-4</text>
<circle cx="1552.8" cy="374.3" r="1.4" fill="#33cc22"/>
<text x="1560.6" y="382.5" fill="#33cc22" font-family="Liberation Sans" font-weight="bold" font-size="15.5">-3</text>
<circle cx="1554.2" cy="350.6" r="1.4" fill="#33cc22"/>
<text x="1562.0" y="358.8" fill="#33cc22" font-family="Liberation Sans" font-weight="bold" font-size="15.5">-2</text>
<circle cx="1555.5" cy="326.9" r="1.4" fill="#33cc22"/>
<text x="1563.3" y="335.1" fill="#33cc22" font-family="Liberation Sans" font-weight="bold" font-size="15.5">-1</text>
<circle cx="1556.8" cy="303.2" r="1.4" fill="#33cc22"/>
<text x="1564.6" y="311.4" fill="#33cc22" font-family="Liberation Sans" font-weight="bold" font-size="15.5">0</text>
<circle cx="1558.1" cy="279.5" r="1.4" fill="#33cc22"/>
<text x="1565.9" y="287.7" fill="#33cc22" font-family="Liberation Sans" font-weight="bold" font-size="15.5">+1</text>
<circle cx="1559.5" cy="255.8" r="1.4" fill="#33cc22"/>
<text x="1567.3" y="264.0" fill="#33cc22" font-family="Liberation Sans" font-weight="bold" font-size="15.5">+2</text>
<circle cx="1560.8" cy="232.2" r="1.4" fill="#33cc22"/>
<text x="1568.6" y="240.4" fill="#33cc22" font-family="Liberation Sans" font-weight="bold" font-size="15.5">+3</text>
<circle cx="1562.1" cy="208.5" r="1.4" fill="#33cc22"/>
<text x="1569.9" y="216.7" fill="#33cc22" font-family="Liberation Sans" font-weight="bold" font-size="15.5">+4</text>
<text x="1588.8" y="308.2" fill="#33cc22" font-family="Liberation Sans" font-weight="bold" font-size="15.5">Y</text>
<line x1="1245.9" y1="463.6" x2="1444.4" y2="511.7" stroke="#ff5511" stroke-width="0.8"/>
<circle cx="1245.9" cy="463.6" r="1.4" fill="#ff5511"/>
<text x="1236.4" y="489.1" fill="#ff5511" font-family="Liberation Sans" font-weight="bold" font-size="15.5">-4</text>
<circle cx="1270.7" cy="469.6" r="1.4" fill="#ff5511"/>
<text x="1261.2" y="495.1" fill="#ff5511" font-family="Liberation Sans" font-weight="bold" font-size="15.5">-3</text>
<circle cx="1295.5" cy="475.6" r="1.4" fill="#ff5511"/>
<text x="1286.0" y="501.1" fill="#ff5511" font-family="Liberation Sans" font-weight="bold" font-size="15.5">-2</text>
<circle cx="1320.3" cy="481.6" r="1.4" fill="#ff5511"/>
<text x="1310.8" y="507.1" fill="#ff5511" font-family="Liberation Sans" font-weight="bold" font-size="15.5">-1</text>
<circle cx="1345.1" cy="487.6" r="1.4" fill="#ff5511"/>
<text x="1335.6" y="513.1" fill="#ff5511" font-family="Liberation Sans" font-weight="bold" font-size="15.5">0</text>
<circle cx="1369.9" cy="493.7" r="1.4" fill="#ff5511"/>
<text x="1360.4" y="519.2" fill="#ff5511" font-family="Liberation Sans" font-weight="bold" font-size="15.5">+1</text>
<circle cx="1394.7" cy="499.7" r="1.4" fill="#ff5511"/>
<text x="1385.2" y="525.2" fill="#ff5511" font-family="Liberation Sans" font-weight="bold" font-size="15.5">+2</text>
<circle cx="1419.5" cy="505.7" r="1.4" fill="#ff5511"/>
<text x="1410.0" y="531.2" fill="#ff5511" font-family="Liberation Sans" font-weight="bold" font-size="15.5">+3</text>
<circle cx="1444.4" cy="511.7" r="1.4" fill="#ff5511"/>
<text x="1434.9" y="537.2" fill="#ff5511" font-family="Liberation Sans" font-weight="bold" font-size="15.5">+4</text>
<line x1="1545.0" y1="421.0" x2="1473.8" y2="507.4" stroke="#22bbff" stroke-width="0.8"/>
<circle cx="1545.0" cy="421.0" r="1.4" fill="#22bbff"/>
<text x="1543.0" y="445.0" fill="#22bbff" font-family="Liberation Sans" font-weight="bold" font-size="15.5">-4</text>
<circle cx="1536.1" cy="431.8" r="1.4" fill="#22bbff"/>
<text x="1534.1" y="455.8" fill="#22bbff" font-family="Liberation Sans" font-weight="bold" font-size="15.5">-3</text>
<circle cx="1527.2" cy="442.6" r="1.4" fill="#22bbff"/>
<text x="1525.2" y="466.6" fill="#22bbff" font-family="Liberation Sans" font-weight="bold" font-size="15.5">-2</text>
<circle cx="1518.3" cy="453.4" r="1.4" fill="#22bbff"/>
<text x="1516.3" y="477.4" fill="#22bbff" font-family="Liberation Sans" font-weight="bold" font-size="15.5">-1</text>
<circle cx="1509.4" cy="464.2" r="1.4" fill="#22bbff"/>
<text x="1507.4" y="488.2" fill="#22bbff" font-family="Liberation Sans" font-weight="bold" font-size="15.5">0</text>
<circle cx="1500.5" cy="475.0" r="1.4" fill="#22bbff"/>
<text x="1498.5" y="499.0" fill="#22bbff" font-family="Liberation Sans" font-weight="bold" font-size="15.5">+1</text>
<circle cx="1491.6" cy="485.8" r="1.4" fill="#22bbff"/>
<text x="1489.6" y="509.8" fill="#22bbff" font-family="Liberation Sans" font-weight="bold" font-size="15.5">+2</text>
<circle cx="1482.7" cy="496.6" r="1.4" fill="#22bbff"/>
<text x="1480.7" y="520.6" fill="#22bbff" font-family="Liberation Sans" font-weight="bold" font-size="15.5">+3</text>
<circle cx="1473.8" cy="507.4" r="1.4" fill="#22bbff"/>
<text x="1471.8" y="531.4" fill="#22bbff" font-family="Liberation Sans" font-weight="bold" font-size="15.5">+4</text>
<text x="1524.4" y="505.2" fill="#22bbff" font-family="Liberation Sans" font-weight="bold" font-size="15.5">Z</text>
</g>
</svg>
</div>
<!-- tabs -->
<svg class="a" style="left:894px;top:118px" width="1012" height="36" shape-rendering="crispEdges">
 <rect x="0" y="34" width="1012" height="2" fill="#000"/>
 <path d="M16,34 V8 L22,2 V0 H176 L182,6 L188,0 H322 L328,6 V34 Z" fill="#000"/>
 <path d="M18,34 V9 L23,3 V2 H172 V8 H180 V34 Z" fill="#c5c5c9"/>
 <path d="M184,34 V8 L186,6 L188,2 H318 V8 H326 V34 Z" fill="#5e554d"/>
 <path d="M176,0 H188 L182,6 Z" fill="#fdf0e6"/>
 <path d="M322,0 H328 V6 Z" fill="#fdf0e6"/>
 <rect x="172" y="2" width="2" height="6" fill="#000"/><rect x="174" y="8" width="6" height="2" fill="#000"/>
 <rect x="318" y="2" width="2" height="6" fill="#000"/><rect x="320" y="8" width="6" height="2" fill="#000"/>
</svg>
<!-- horizontal splitter -->
<div class="a" style="left:894px;top:492px;width:1012px;height:10px;background:#c5c5c9"></div>
<div class="a dots" style="left:1378px;top:493px;width:44px;height:8px;background-position:2px 1px"></div>
<!-- bottom view -->
<div class="a" style="left:894px;top:504px;width:1012px;height:562px;background:#385a8a;overflow:hidden">
<svg class="a" style="left:-894px;top:-504px" width="1920" height="1080" font-family="Liberation Sans" font-weight="bold">
<polygon points="1320.7,549.7 1301.0,554.3 1336.3,556.9 1355.4,552.2" fill="#ac547f" stroke="#ac547f" stroke-width="0.7"/>
<polygon points="1321.3,550.0 1303.2,554.3 1335.7,556.6 1353.3,552.2" fill="#c86294"/>
<polygon points="1303.2,554.3 1335.7,556.6 1338.5,555.9 1306.2,553.6" fill="#d66b9f"/>
<polygon points="1267.5,879.6 1301.8,885.6 1301.0,848.1 1266.5,842.5" fill="#bd628d" stroke="#bd628d" stroke-width="0.7"/>
<polygon points="1268.8,878.4 1300.4,883.8 1299.6,849.4 1267.9,844.2" fill="#dc72a5"/>
<polygon points="1267.9,844.2 1299.6,849.4 1299.7,852.8 1268.0,847.6" fill="#ea7cb1"/>
<polygon points="1268.6,869.9 1300.2,875.3 1300.4,883.8 1268.8,878.4" fill="#d26c9d"/>
<line x1="1267.5" y1="879.6" x2="1301.8" y2="885.6" stroke="#63334a" stroke-width="1.5" opacity="0.55"/>
<polygon points="1355.4,552.2 1336.3,556.9 1372.4,559.5 1390.9,554.6" fill="#ac547f" stroke="#ac547f" stroke-width="0.7"/>
<polygon points="1356.1,552.4 1338.5,556.8 1371.7,559.2 1388.7,554.7" fill="#c86294"/>
<polygon points="1338.5,556.8 1371.7,559.2 1374.5,558.4 1341.4,556.1" fill="#d66b9f"/>
<polygon points="1267.5,879.6 1246.5,891.9 1281.3,898.2 1301.8,885.6" fill="#ac547f" stroke="#ac547f" stroke-width="0.7"/>
<polygon points="1268.1,880.3 1248.7,891.7 1280.8,897.4 1299.6,885.8" fill="#c86294"/>
<polygon points="1248.7,891.7 1280.8,897.4 1283.8,895.5 1251.9,889.8" fill="#d66b9f"/>
<polygon points="1266.5,842.5 1301.0,848.1 1300.2,810.0 1265.4,804.7" fill="#bd628d" stroke="#bd628d" stroke-width="0.7"/>
<polygon points="1267.8,841.2 1299.6,846.3 1298.8,811.3 1266.8,806.4" fill="#dc72a5"/>
<polygon points="1266.8,806.4 1298.8,811.3 1298.9,814.8 1266.9,809.9" fill="#ea7cb1"/>
<polygon points="1267.6,832.6 1299.4,837.6 1299.6,846.3 1267.8,841.2" fill="#d26c9d"/>
<line x1="1266.5" y1="842.5" x2="1301.0" y2="848.1" stroke="#63334a" stroke-width="1.5" opacity="0.55"/>
<polygon points="1301.8,885.6 1336.7,891.6 1336.3,853.8 1301.0,848.1" fill="#bd628d" stroke="#bd628d" stroke-width="0.7"/>
<polygon points="1303.1,884.3 1335.3,889.9 1334.9,855.1 1302.4,849.8" fill="#dc72a5"/>
<polygon points="1302.4,849.8 1334.9,855.1 1334.9,858.6 1302.5,853.3" fill="#ea7cb1"/>
<polygon points="1302.9,875.7 1335.2,881.3 1335.3,889.9 1303.1,884.3" fill="#d26c9d"/>
<line x1="1301.8" y1="885.6" x2="1336.7" y2="891.6" stroke="#63334a" stroke-width="1.5" opacity="0.55"/>
<polygon points="1301.0,554.3 1280.3,559.2 1316.3,561.8 1336.3,556.9" fill="#ac547f" stroke="#ac547f" stroke-width="0.7"/>
<polygon points="1301.6,554.6 1282.6,559.1 1315.6,561.5 1334.1,557.0" fill="#c86294"/>
<polygon points="1282.6,559.1 1315.6,561.5 1318.6,560.8 1285.7,558.4" fill="#d66b9f"/>
<polygon points="1390.9,554.6 1372.4,559.5 1409.3,562.1 1427.1,557.2" fill="#ac547f" stroke="#ac547f" stroke-width="0.7"/>
<polygon points="1391.6,554.9 1374.6,559.4 1408.5,561.8 1425.0,557.3" fill="#c86294"/>
<polygon points="1374.6,559.4 1408.5,561.8 1411.2,561.1 1377.4,558.7" fill="#d66b9f"/>
<polygon points="1265.4,804.7 1300.2,810.0 1299.4,771.2 1264.3,766.3" fill="#bd628d" stroke="#bd628d" stroke-width="0.7"/>
<polygon points="1266.8,803.4 1298.8,808.2 1298.0,772.5 1265.8,768.1" fill="#dc72a5"/>
<polygon points="1265.8,768.1 1298.0,772.5 1298.1,776.1 1265.9,771.6" fill="#ea7cb1"/>
<polygon points="1266.5,794.6 1298.6,799.3 1298.8,808.2 1266.8,803.4" fill="#d26c9d"/>
<line x1="1265.4" y1="804.7" x2="1300.2" y2="810.0" stroke="#63334a" stroke-width="1.5" opacity="0.55"/>
<polygon points="1301.8,885.6 1281.3,898.2 1316.9,904.5 1336.7,891.6" fill="#ac547f" stroke="#ac547f" stroke-width="0.7"/>
<polygon points="1302.4,886.3 1283.6,897.9 1316.3,903.7 1334.6,891.9" fill="#c86294"/>
<polygon points="1283.6,897.9 1316.3,903.7 1319.3,901.8 1286.6,896.0" fill="#d66b9f"/>
<polygon points="1642.1,934.4 1644.1,897.0 1631.5,910.1 1629.5,948.2" fill="#9e4971" stroke="#9e4971" stroke-width="0.7"/>
<polygon points="1641.6,933.4 1643.6,899.0 1632.0,911.1 1630.1,946.1" fill="#b85684"/>
<polygon points="1630.1,946.1 1632.0,911.1 1635.5,907.4 1633.6,942.3" fill="#8b4164"/>
<polygon points="1301.0,848.1 1336.3,853.8 1335.8,815.3 1300.2,810.0" fill="#bd628d" stroke="#bd628d" stroke-width="0.7"/>
<polygon points="1302.4,846.8 1334.8,852.0 1334.4,816.6 1301.7,811.7" fill="#dc72a5"/>
<polygon points="1301.7,811.7 1334.4,816.6 1334.4,820.2 1301.7,815.2" fill="#ea7cb1"/>
<polygon points="1302.2,838.1 1334.7,843.2 1334.8,852.0 1302.4,846.8" fill="#d26c9d"/>
<line x1="1301.0" y1="848.1" x2="1336.3" y2="853.8" stroke="#63334a" stroke-width="1.5" opacity="0.55"/>
<polygon points="1264.3,766.3 1299.4,771.2 1298.6,731.7 1263.2,727.3" fill="#bd628d" stroke="#bd628d" stroke-width="0.7"/>
<polygon points="1265.7,765.0 1298.0,769.4 1297.2,733.2 1264.7,729.0" fill="#dc72a5"/>
<polygon points="1264.7,729.0 1297.2,733.2 1297.3,736.8 1264.8,732.6" fill="#ea7cb1"/>
<polygon points="1265.4,756.0 1297.8,760.4 1298.0,769.4 1265.7,765.0" fill="#d26c9d"/>
<line x1="1264.3" y1="766.3" x2="1299.4" y2="771.2" stroke="#63334a" stroke-width="1.5" opacity="0.55"/>
<polygon points="1336.7,891.6 1372.5,897.9 1372.3,859.6 1336.3,853.8" fill="#bd628d" stroke="#bd628d" stroke-width="0.7"/>
<polygon points="1338.1,890.4 1371.0,896.1 1370.9,861.0 1337.7,855.6" fill="#dc72a5"/>
<polygon points="1337.7,855.6 1370.9,861.0 1370.9,864.5 1337.8,859.1" fill="#ea7cb1"/>
<polygon points="1338.0,881.7 1371.0,887.4 1371.0,896.1 1338.1,890.4" fill="#d26c9d"/>
<line x1="1336.7" y1="891.6" x2="1372.5" y2="897.9" stroke="#63334a" stroke-width="1.5" opacity="0.55"/>
<polygon points="1336.3,556.9 1316.3,561.8 1353.0,564.5 1372.4,559.5" fill="#ac547f" stroke="#ac547f" stroke-width="0.7"/>
<polygon points="1337.0,557.2 1318.5,561.7 1352.3,564.2 1370.2,559.6" fill="#c86294"/>
<polygon points="1318.5,561.7 1352.3,564.2 1355.2,563.5 1321.5,561.0" fill="#d66b9f"/>
<polygon points="1427.1,557.2 1409.3,562.1 1447.0,564.8 1464.1,559.8" fill="#ac547f" stroke="#ac547f" stroke-width="0.7"/>
<polygon points="1427.9,557.5 1411.5,562.0 1446.2,564.5 1462.0,559.9" fill="#c86294"/>
<polygon points="1411.5,562.0 1446.2,564.5 1448.8,563.8 1414.2,561.3" fill="#d66b9f"/>
<polygon points="1246.5,891.9 1224.5,904.8 1259.9,911.4 1281.3,898.2" fill="#ac547f" stroke="#ac547f" stroke-width="0.7"/>
<polygon points="1247.0,892.7 1226.8,904.6 1259.3,910.5 1279.1,898.4" fill="#c86294"/>
<polygon points="1226.8,904.6 1259.3,910.5 1262.5,908.6 1230.1,902.6" fill="#d66b9f"/>
<polygon points="1300.2,810.0 1335.8,815.3 1335.3,776.2 1299.4,771.2" fill="#3f8d57" stroke="#3f8d57" stroke-width="0.7"/>
<polygon points="1301.6,808.6 1334.3,813.5 1333.8,777.5 1300.9,772.9" fill="#4aa466"/>
<polygon points="1300.9,772.9 1333.8,777.5 1333.9,781.2 1300.9,776.5" fill="#52b070"/>
<polygon points="1301.4,799.8 1334.2,804.6 1334.3,813.5 1301.6,808.6" fill="#469c61"/>
<line x1="1300.2" y1="810.0" x2="1335.8" y2="815.3" stroke="#21492d" stroke-width="1.5" opacity="0.55"/>
<polygon points="1644.1,897.0 1646.3,859.0 1633.6,871.2 1631.5,910.1" fill="#9e4971" stroke="#9e4971" stroke-width="0.7"/>
<polygon points="1643.7,896.0 1645.7,861.0 1634.0,872.3 1632.1,908.0" fill="#b85684"/>
<polygon points="1632.1,908.0 1634.0,872.3 1637.6,868.8 1635.7,904.3" fill="#8b4164"/>
<polygon points="1263.2,727.3 1298.6,731.7 1297.8,691.6 1262.1,687.6" fill="#bd628d" stroke="#bd628d" stroke-width="0.7"/>
<polygon points="1264.6,725.9 1297.1,730.0 1296.4,693.1 1263.6,689.3" fill="#dc72a5"/>
<polygon points="1263.6,689.3 1296.4,693.1 1296.5,696.8 1263.7,693.0" fill="#ea7cb1"/>
<polygon points="1264.3,716.8 1297.0,720.8 1297.1,730.0 1264.6,725.9" fill="#d26c9d"/>
<line x1="1263.2" y1="727.3" x2="1298.6" y2="731.7" stroke="#63334a" stroke-width="1.5" opacity="0.55"/>
<polygon points="1336.7,891.6 1316.9,904.5 1353.3,911.0 1372.5,897.9" fill="#ac547f" stroke="#ac547f" stroke-width="0.7"/>
<polygon points="1337.4,892.4 1319.2,904.3 1352.6,910.2 1370.3,898.1" fill="#c86294"/>
<polygon points="1319.2,904.3 1352.6,910.2 1355.5,908.3 1322.1,902.3" fill="#d66b9f"/>
<polygon points="1336.3,853.8 1372.3,859.6 1372.1,820.8 1335.8,815.3" fill="#bd628d" stroke="#bd628d" stroke-width="0.7"/>
<polygon points="1337.7,852.5 1370.8,857.9 1370.7,822.1 1337.2,817.1" fill="#dc72a5"/>
<polygon points="1337.2,817.1 1370.7,822.1 1370.7,825.7 1337.3,820.6" fill="#ea7cb1"/>
<polygon points="1337.6,843.7 1370.8,849.0 1370.8,857.9 1337.7,852.5" fill="#d26c9d"/>
<line x1="1336.3" y1="853.8" x2="1372.3" y2="859.6" stroke="#63334a" stroke-width="1.5" opacity="0.55"/>
<polygon points="1262.1,687.6 1297.8,691.6 1296.9,650.8 1261.0,647.2" fill="#bd628d" stroke="#bd628d" stroke-width="0.7"/>
<polygon points="1263.5,686.1 1296.3,689.9 1295.5,652.3 1262.5,648.9" fill="#dc72a5"/>
<polygon points="1262.5,648.9 1295.5,652.3 1295.6,656.1 1262.6,652.7" fill="#ea7cb1"/>
<polygon points="1263.2,676.9 1296.1,680.5 1296.3,689.9 1263.5,686.1" fill="#d26c9d"/>
<line x1="1262.1" y1="687.6" x2="1297.8" y2="691.6" stroke="#63334a" stroke-width="1.5" opacity="0.55"/>
<polygon points="1280.3,559.2 1258.7,564.3 1295.2,567.0 1316.3,561.8" fill="#ac547f" stroke="#ac547f" stroke-width="0.7"/>
<polygon points="1280.9,559.5 1261.0,564.2 1294.6,566.7 1314.0,561.9" fill="#c86294"/>
<polygon points="1261.0,564.2 1294.6,566.7 1297.8,565.9 1264.2,563.4" fill="#d66b9f"/>
<polygon points="1372.5,897.9 1409.0,904.2 1409.1,865.6 1372.3,859.6" fill="#bd628d" stroke="#bd628d" stroke-width="0.7"/>
<polygon points="1373.9,896.6 1407.5,902.4 1407.7,866.9 1373.8,861.4" fill="#dc72a5"/>
<polygon points="1373.8,861.4 1407.7,866.9 1407.6,870.5 1373.8,865.0" fill="#ea7cb1"/>
<polygon points="1373.9,887.9 1407.6,893.6 1407.5,902.4 1373.9,896.6" fill="#d26c9d"/>
<line x1="1372.5" y1="897.9" x2="1409.0" y2="904.2" stroke="#63334a" stroke-width="1.5" opacity="0.55"/>
<polygon points="1299.4,771.2 1335.3,776.2 1334.8,736.3 1298.6,731.7" fill="#3f8d57" stroke="#3f8d57" stroke-width="0.7"/>
<polygon points="1300.8,769.8 1333.8,774.4 1333.3,737.7 1300.1,733.5" fill="#4aa466"/>
<polygon points="1300.1,733.5 1333.3,737.7 1333.4,741.4 1300.1,737.2" fill="#52b070"/>
<polygon points="1300.6,760.8 1333.7,765.3 1333.8,774.4 1300.8,769.8" fill="#469c61"/>
<line x1="1299.4" y1="771.2" x2="1335.3" y2="776.2" stroke="#21492d" stroke-width="1.5" opacity="0.55"/>
<polygon points="1464.1,559.8 1447.0,564.8 1485.6,567.6 1502.0,562.4" fill="#ac547f" stroke="#ac547f" stroke-width="0.7"/>
<polygon points="1465.0,560.1 1449.2,564.7 1484.7,567.3 1499.8,562.5" fill="#c86294"/>
<polygon points="1449.2,564.7 1484.7,567.3 1487.2,566.5 1451.8,564.0" fill="#d66b9f"/>
<polygon points="1646.3,859.0 1648.4,820.3 1635.7,831.7 1633.6,871.2" fill="#9e4971" stroke="#9e4971" stroke-width="0.7"/>
<polygon points="1645.8,857.9 1647.8,822.3 1636.1,832.8 1634.2,869.2" fill="#b85684"/>
<polygon points="1634.2,869.2 1636.1,832.8 1639.7,829.6 1637.7,865.7" fill="#8b4164"/>
<polygon points="1372.4,559.5 1353.0,564.5 1390.6,567.3 1409.3,562.1" fill="#ac547f" stroke="#ac547f" stroke-width="0.7"/>
<polygon points="1373.1,559.8 1355.3,564.4 1389.8,567.0 1407.1,562.2" fill="#c86294"/>
<polygon points="1355.3,564.4 1389.8,567.0 1392.6,566.2 1358.2,563.7" fill="#d66b9f"/>
<polygon points="1281.3,898.2 1259.9,911.4 1296.1,918.0 1316.9,904.5" fill="#ac547f" stroke="#ac547f" stroke-width="0.7"/>
<polygon points="1281.9,898.9 1262.2,911.1 1295.5,917.2 1314.7,904.8" fill="#c86294"/>
<polygon points="1262.2,911.1 1295.5,917.2 1298.6,915.2 1265.4,909.1" fill="#d66b9f"/>
<polygon points="1261.0,647.2 1296.9,650.8 1296.1,609.3 1259.8,606.1" fill="#bd628d" stroke="#bd628d" stroke-width="0.7"/>
<polygon points="1262.4,645.7 1295.5,649.0 1294.7,610.8 1261.3,607.9" fill="#dc72a5"/>
<polygon points="1261.3,607.9 1294.7,610.8 1294.7,614.7 1261.4,611.7" fill="#ea7cb1"/>
<polygon points="1262.1,636.3 1295.3,639.5 1295.5,649.0 1262.4,645.7" fill="#d26c9d"/>
<line x1="1261.0" y1="647.2" x2="1296.9" y2="650.8" stroke="#63334a" stroke-width="1.5" opacity="0.55"/>
<polygon points="1335.8,815.3 1372.1,820.8 1371.9,781.2 1335.3,776.2" fill="#3f8d57" stroke="#3f8d57" stroke-width="0.7"/>
<polygon points="1337.2,814.0 1370.6,819.0 1370.5,782.6 1336.7,777.9" fill="#4aa466"/>
<polygon points="1336.7,777.9 1370.5,782.6 1370.5,786.3 1336.8,781.6" fill="#52b070"/>
<polygon points="1337.1,805.0 1370.6,810.0 1370.6,819.0 1337.2,814.0" fill="#469c61"/>
<line x1="1335.8" y1="815.3" x2="1372.1" y2="820.8" stroke="#21492d" stroke-width="1.5" opacity="0.55"/>
<polygon points="1372.5,897.9 1353.3,911.0 1390.5,917.7 1409.0,904.2" fill="#ac547f" stroke="#ac547f" stroke-width="0.7"/>
<polygon points="1373.2,898.6 1355.5,910.7 1389.7,916.9 1406.8,904.5" fill="#c86294"/>
<polygon points="1355.5,910.7 1389.7,916.9 1392.5,914.8 1358.4,908.8" fill="#d66b9f"/>
<polygon points="1298.6,731.7 1334.8,736.3 1334.2,695.8 1297.8,691.6" fill="#3f8d57" stroke="#3f8d57" stroke-width="0.7"/>
<polygon points="1300.0,730.3 1333.3,734.5 1332.8,697.3 1299.3,693.4" fill="#4aa466"/>
<polygon points="1299.3,693.4 1332.8,697.3 1332.8,701.0 1299.3,697.1" fill="#52b070"/>
<polygon points="1299.8,721.2 1333.2,725.3 1333.3,734.5 1300.0,730.3" fill="#469c61"/>
<line x1="1298.6" y1="731.7" x2="1334.8" y2="736.3" stroke="#21492d" stroke-width="1.5" opacity="0.55"/>
<polygon points="1629.5,948.2 1631.5,910.1 1618.3,923.8 1616.4,962.7" fill="#9e4971" stroke="#9e4971" stroke-width="0.7"/>
<polygon points="1629.1,947.3 1630.9,912.1 1618.8,924.8 1617.0,960.6" fill="#b85684"/>
<polygon points="1617.0,960.6 1618.8,924.8 1622.5,920.9 1620.7,956.5" fill="#8b4164"/>
<polygon points="1372.3,859.6 1409.1,865.6 1409.3,826.4 1372.1,820.8" fill="#bd628d" stroke="#bd628d" stroke-width="0.7"/>
<polygon points="1373.8,858.3 1407.7,863.8 1407.8,827.7 1373.6,822.6" fill="#dc72a5"/>
<polygon points="1373.6,822.6 1407.8,827.7 1407.8,831.4 1373.6,826.2" fill="#ea7cb1"/>
<polygon points="1373.7,849.5 1407.7,854.9 1407.7,863.8 1373.8,858.3" fill="#d26c9d"/>
<line x1="1372.3" y1="859.6" x2="1409.1" y2="865.6" stroke="#63334a" stroke-width="1.5" opacity="0.55"/>
<polygon points="1259.8,606.1 1296.1,609.3 1295.2,567.0 1258.7,564.3" fill="#bd628d" stroke="#bd628d" stroke-width="0.7"/>
<polygon points="1261.2,604.5 1294.6,607.5 1293.8,568.6 1260.1,566.1" fill="#dc72a5"/>
<polygon points="1260.1,566.1 1293.8,568.6 1293.9,572.5 1260.3,569.9" fill="#ea7cb1"/>
<polygon points="1261.0,595.0 1294.4,597.8 1294.6,607.5 1261.2,604.5" fill="#d26c9d"/>
<line x1="1259.8" y1="606.1" x2="1296.1" y2="609.3" stroke="#63334a" stroke-width="1.5" opacity="0.55"/>
<polygon points="1648.4,820.3 1650.6,780.9 1637.8,791.5 1635.7,831.7" fill="#9e4971" stroke="#9e4971" stroke-width="0.7"/>
<polygon points="1648.0,819.2 1650.0,782.9 1638.3,792.7 1636.3,829.7" fill="#b85684"/>
<polygon points="1636.3,829.7 1638.3,792.7 1641.8,789.7 1639.9,826.5" fill="#8b4164"/>
<polygon points="1409.0,904.2 1446.4,910.7 1446.8,871.7 1409.1,865.6" fill="#bd628d" stroke="#bd628d" stroke-width="0.7"/>
<polygon points="1410.5,902.9 1444.9,908.9 1445.3,873.1 1410.6,867.4" fill="#dc72a5"/>
<polygon points="1410.6,867.4 1445.3,873.1 1445.2,876.7 1410.6,871.0" fill="#ea7cb1"/>
<polygon points="1410.5,894.1 1445.0,900.0 1444.9,908.9 1410.5,902.9" fill="#d26c9d"/>
<line x1="1409.0" y1="904.2" x2="1446.4" y2="910.7" stroke="#63334a" stroke-width="1.5" opacity="0.55"/>
<polygon points="1502.0,562.4 1485.6,567.6 1525.0,570.4 1540.7,565.1" fill="#ac547f" stroke="#ac547f" stroke-width="0.7"/>
<polygon points="1502.9,562.7 1487.8,567.5 1524.1,570.1 1538.5,565.2" fill="#c86294"/>
<polygon points="1487.8,567.5 1524.1,570.1 1526.4,569.3 1490.3,566.7" fill="#d66b9f"/>
<polygon points="1224.5,904.8 1201.4,918.4 1237.4,925.2 1259.9,911.4" fill="#ac547f" stroke="#ac547f" stroke-width="0.7"/>
<polygon points="1225.0,905.6 1203.7,918.1 1236.9,924.4 1257.6,911.6" fill="#c86294"/>
<polygon points="1203.7,918.1 1236.9,924.4 1240.2,922.3 1207.2,916.0" fill="#d66b9f"/>
<polygon points="1335.3,776.2 1371.9,781.2 1371.7,741.0 1334.8,736.3" fill="#3f8d57" stroke="#3f8d57" stroke-width="0.7"/>
<polygon points="1336.7,774.8 1370.4,779.4 1370.2,742.4 1336.2,738.1" fill="#4aa466"/>
<polygon points="1336.2,738.1 1370.2,742.4 1370.3,746.2 1336.3,741.8" fill="#52b070"/>
<polygon points="1336.6,765.7 1370.4,770.2 1370.4,779.4 1336.7,774.8" fill="#469c61"/>
<line x1="1335.3" y1="776.2" x2="1371.9" y2="781.2" stroke="#21492d" stroke-width="1.5" opacity="0.55"/>
<polygon points="1297.8,691.6 1334.2,695.8 1333.7,654.6 1296.9,650.8" fill="#3f8d57" stroke="#3f8d57" stroke-width="0.7"/>
<polygon points="1299.2,690.2 1332.7,694.0 1332.2,656.1 1298.4,652.6" fill="#4aa466"/>
<polygon points="1298.4,652.6 1332.2,656.1 1332.3,659.9 1298.5,656.4" fill="#52b070"/>
<polygon points="1299.0,680.8 1332.6,684.6 1332.7,694.0 1299.2,690.2" fill="#469c61"/>
<line x1="1297.8" y1="691.6" x2="1334.2" y2="695.8" stroke="#21492d" stroke-width="1.5" opacity="0.55"/>
<polygon points="1316.3,561.8 1295.2,567.0 1332.6,569.9 1353.0,564.5" fill="#ac547f" stroke="#ac547f" stroke-width="0.7"/>
<polygon points="1316.9,562.1 1297.6,566.9 1332.0,569.5 1350.7,564.6" fill="#c86294"/>
<polygon points="1297.6,566.9 1332.0,569.5 1335.0,568.7 1300.7,566.2" fill="#d66b9f"/>
<polygon points="1409.3,562.1 1390.6,567.3 1429.0,570.2 1447.0,564.8" fill="#ac547f" stroke="#ac547f" stroke-width="0.7"/>
<polygon points="1410.0,562.4 1392.9,567.2 1428.2,569.8 1444.8,564.9" fill="#c86294"/>
<polygon points="1392.9,567.2 1428.2,569.8 1430.9,569.0 1395.7,566.4" fill="#d66b9f"/>
<polygon points="1316.9,904.5 1296.1,918.0 1333.1,924.8 1353.3,911.0" fill="#ac547f" stroke="#ac547f" stroke-width="0.7"/>
<polygon points="1317.5,905.3 1298.4,917.7 1332.5,924.0 1351.0,911.3" fill="#c86294"/>
<polygon points="1298.4,917.7 1332.5,924.0 1335.5,921.9 1301.5,915.7" fill="#d66b9f"/>
<polygon points="1631.5,910.1 1633.6,871.2 1620.3,884.1 1618.3,923.8" fill="#9e4971" stroke="#9e4971" stroke-width="0.7"/>
<polygon points="1631.1,909.0 1633.0,873.3 1620.8,885.2 1618.9,921.6" fill="#b85684"/>
<polygon points="1618.9,921.6 1620.8,885.2 1624.5,881.6 1622.6,917.8" fill="#8b4164"/>
<polygon points="1372.1,820.8 1409.3,826.4 1409.4,786.4 1371.9,781.2" fill="#3f8d57" stroke="#3f8d57" stroke-width="0.7"/>
<polygon points="1373.6,819.4 1407.8,824.6 1407.9,787.8 1373.4,783.0" fill="#4aa466"/>
<polygon points="1373.4,783.0 1407.9,787.8 1407.9,791.5 1373.4,786.7" fill="#52b070"/>
<polygon points="1373.5,810.4 1407.8,815.4 1407.8,824.6 1373.6,819.4" fill="#469c61"/>
<line x1="1372.1" y1="820.8" x2="1409.3" y2="826.4" stroke="#21492d" stroke-width="1.5" opacity="0.55"/>
<polygon points="1650.6,780.9 1652.8,740.9 1640.0,750.6 1637.8,791.5" fill="#9e4971" stroke="#9e4971" stroke-width="0.7"/>
<polygon points="1650.2,779.8 1652.2,742.9 1640.4,751.8 1638.4,789.5" fill="#b85684"/>
<polygon points="1638.4,789.5 1640.4,751.8 1644.0,749.1 1642.0,786.5" fill="#8b4164"/>
<polygon points="1409.0,904.2 1390.5,917.7 1428.5,924.5 1446.4,910.7" fill="#ac547f" stroke="#ac547f" stroke-width="0.7"/>
<polygon points="1409.8,905.0 1392.8,917.4 1427.7,923.6 1444.2,911.0" fill="#c86294"/>
<polygon points="1392.8,917.4 1427.7,923.6 1430.4,921.6 1395.5,915.4" fill="#d66b9f"/>
<polygon points="1296.9,650.8 1333.7,654.6 1333.2,612.6 1296.1,609.3" fill="#3f8d57" stroke="#3f8d57" stroke-width="0.7"/>
<polygon points="1298.4,649.3 1332.2,652.7 1331.7,614.2 1297.6,611.1" fill="#4aa466"/>
<polygon points="1297.6,611.1 1331.7,614.2 1331.7,618.0 1297.7,615.0" fill="#52b070"/>
<polygon points="1298.2,639.8 1332.1,643.2 1332.2,652.7 1298.4,649.3" fill="#469c61"/>
<line x1="1296.9" y1="650.8" x2="1333.7" y2="654.6" stroke="#21492d" stroke-width="1.5" opacity="0.55"/>
<polygon points="1334.8,736.3 1371.7,741.0 1371.5,700.1 1334.2,695.8" fill="#3f8d57" stroke="#3f8d57" stroke-width="0.7"/>
<polygon points="1336.2,734.9 1370.2,739.2 1370.0,701.5 1335.7,697.6" fill="#4aa466"/>
<polygon points="1335.7,697.6 1370.0,701.5 1370.1,705.3 1335.8,701.4" fill="#52b070"/>
<polygon points="1336.1,725.6 1370.2,729.8 1370.2,739.2 1336.2,734.9" fill="#469c61"/>
<line x1="1334.8" y1="736.3" x2="1371.7" y2="741.0" stroke="#21492d" stroke-width="1.5" opacity="0.55"/>
<polygon points="1409.1,865.6 1446.8,871.7 1447.3,832.1 1409.3,826.4" fill="#bd628d" stroke="#bd628d" stroke-width="0.7"/>
<polygon points="1410.6,864.3 1445.3,869.9 1445.7,833.5 1410.8,828.2" fill="#dc72a5"/>
<polygon points="1410.8,828.2 1445.7,833.5 1445.7,837.1 1410.8,831.8" fill="#ea7cb1"/>
<polygon points="1410.7,855.3 1445.4,860.9 1445.3,869.9 1410.6,864.3" fill="#d26c9d"/>
<line x1="1409.1" y1="865.6" x2="1446.8" y2="871.7" stroke="#63334a" stroke-width="1.5" opacity="0.55"/>
<polygon points="1540.7,565.1 1525.0,570.4 1565.4,573.3 1580.2,567.9" fill="#ac547f" stroke="#ac547f" stroke-width="0.7"/>
<polygon points="1541.6,565.4 1527.3,570.3 1564.4,573.0 1578.1,568.0" fill="#c86294"/>
<polygon points="1527.3,570.3 1564.4,573.0 1566.6,572.2 1529.6,569.5" fill="#d66b9f"/>
<polygon points="1446.4,910.7 1484.5,917.3 1485.3,878.0 1446.8,871.7" fill="#bd628d" stroke="#bd628d" stroke-width="0.7"/>
<polygon points="1447.9,909.4 1483.0,915.5 1483.7,879.3 1448.3,873.6" fill="#dc72a5"/>
<polygon points="1448.3,873.6 1483.7,879.3 1483.7,883.0 1448.3,877.2" fill="#ea7cb1"/>
<polygon points="1448.0,900.5 1483.2,906.5 1483.0,915.5 1447.9,909.4" fill="#d26c9d"/>
<line x1="1446.4" y1="910.7" x2="1484.5" y2="917.3" stroke="#63334a" stroke-width="1.5" opacity="0.55"/>
<polygon points="1296.1,609.3 1333.2,612.6 1332.6,569.9 1295.2,567.0" fill="#bd628d" stroke="#bd628d" stroke-width="0.7"/>
<polygon points="1297.5,607.8 1331.7,610.8 1331.1,571.5 1296.7,568.9" fill="#dc72a5"/>
<polygon points="1296.7,568.9 1331.1,571.5 1331.2,575.4 1296.8,572.8" fill="#ea7cb1"/>
<polygon points="1297.3,598.1 1331.5,601.0 1331.7,610.8 1297.5,607.8" fill="#d26c9d"/>
<line x1="1296.1" y1="609.3" x2="1333.2" y2="612.6" stroke="#63334a" stroke-width="1.5" opacity="0.55"/>
<polygon points="1652.8,740.9 1655.1,700.2 1642.2,708.9 1640.0,750.6" fill="#9e4971" stroke="#9e4971" stroke-width="0.7"/>
<polygon points="1652.4,739.7 1654.5,702.2 1642.6,710.3 1640.6,748.5" fill="#b85684"/>
<polygon points="1640.6,748.5 1642.6,710.3 1646.3,707.8 1644.2,745.8" fill="#8b4164"/>
<polygon points="1371.9,781.2 1409.4,786.4 1409.5,745.8 1371.7,741.0" fill="#3f8d57" stroke="#3f8d57" stroke-width="0.7"/>
<polygon points="1373.4,779.8 1407.9,784.6 1408.0,747.2 1373.2,742.8" fill="#4aa466"/>
<polygon points="1373.2,742.8 1408.0,747.2 1408.0,751.0 1373.2,746.5" fill="#52b070"/>
<polygon points="1373.4,770.6 1407.9,775.3 1407.9,784.6 1373.4,779.8" fill="#469c61"/>
<line x1="1371.9" y1="781.2" x2="1409.4" y2="786.4" stroke="#21492d" stroke-width="1.5" opacity="0.55"/>
<polygon points="1447.0,564.8 1429.0,570.2 1468.3,573.1 1485.6,567.6" fill="#ac547f" stroke="#ac547f" stroke-width="0.7"/>
<polygon points="1447.8,565.1 1431.3,570.1 1467.5,572.7 1483.3,567.7" fill="#c86294"/>
<polygon points="1431.3,570.1 1467.5,572.7 1470.1,571.9 1434.0,569.3" fill="#d66b9f"/>
<polygon points="1259.9,911.4 1237.4,925.2 1274.2,932.2 1296.1,918.0" fill="#ac547f" stroke="#ac547f" stroke-width="0.7"/>
<polygon points="1260.4,912.2 1239.8,924.9 1273.7,931.3 1293.8,918.3" fill="#c86294"/>
<polygon points="1239.8,924.9 1273.7,931.3 1276.9,929.2 1243.1,922.8" fill="#d66b9f"/>
<polygon points="1334.2,695.8 1371.5,700.1 1371.3,658.4 1333.7,654.6" fill="#3f8d57" stroke="#3f8d57" stroke-width="0.7"/>
<polygon points="1335.7,694.3 1370.0,698.2 1369.8,659.9 1335.2,656.4" fill="#4aa466"/>
<polygon points="1335.2,656.4 1369.8,659.9 1369.8,663.8 1335.3,660.2" fill="#52b070"/>
<polygon points="1335.6,684.9 1370.0,688.7 1370.0,698.2 1335.7,694.3" fill="#469c61"/>
<line x1="1334.2" y1="695.8" x2="1371.5" y2="700.1" stroke="#21492d" stroke-width="1.5" opacity="0.55"/>
<polygon points="1353.0,564.5 1332.6,569.9 1370.9,572.8 1390.6,567.3" fill="#ac547f" stroke="#ac547f" stroke-width="0.7"/>
<polygon points="1353.7,564.9 1335.0,569.8 1370.2,572.4 1388.3,567.4" fill="#c86294"/>
<polygon points="1335.0,569.8 1370.2,572.4 1373.1,571.6 1338.0,569.0" fill="#d66b9f"/>
<polygon points="1633.6,871.2 1635.7,831.7 1622.3,843.7 1620.3,884.1" fill="#9e4971" stroke="#9e4971" stroke-width="0.7"/>
<polygon points="1633.2,870.2 1635.1,833.8 1622.8,844.9 1620.9,882.0" fill="#b85684"/>
<polygon points="1620.9,882.0 1622.8,844.9 1626.5,841.5 1624.7,878.4" fill="#8b4164"/>
<polygon points="1446.4,910.7 1428.5,924.5 1467.5,931.4 1484.5,917.3" fill="#ac547f" stroke="#ac547f" stroke-width="0.7"/>
<polygon points="1447.2,911.5 1430.8,924.2 1466.6,930.6 1482.3,917.6" fill="#c86294"/>
<polygon points="1430.8,924.2 1466.6,930.6 1469.2,928.5 1433.5,922.1" fill="#d66b9f"/>
<polygon points="1409.3,826.4 1447.3,832.1 1447.7,791.8 1409.4,786.4" fill="#3f8d57" stroke="#3f8d57" stroke-width="0.7"/>
<polygon points="1410.8,825.0 1445.8,830.3 1446.2,793.2 1410.9,788.3" fill="#4aa466"/>
<polygon points="1410.9,788.3 1446.2,793.2 1446.1,796.9 1410.9,792.0" fill="#52b070"/>
<polygon points="1410.8,815.9 1445.9,821.0 1445.8,830.3 1410.8,825.0" fill="#469c61"/>
<line x1="1409.3" y1="826.4" x2="1447.3" y2="832.1" stroke="#21492d" stroke-width="1.5" opacity="0.55"/>
<polygon points="1353.3,911.0 1333.1,924.8 1371.0,931.8 1390.5,917.7" fill="#ac547f" stroke="#ac547f" stroke-width="0.7"/>
<polygon points="1354.0,911.8 1335.5,924.5 1370.3,931.0 1388.2,918.0" fill="#c86294"/>
<polygon points="1335.5,924.5 1370.3,931.0 1373.2,928.8 1338.5,922.5" fill="#d66b9f"/>
<polygon points="1580.2,567.9 1565.4,573.3 1606.8,576.3 1620.7,570.7" fill="#ac547f" stroke="#ac547f" stroke-width="0.7"/>
<polygon points="1581.3,568.2 1567.7,573.2 1605.7,576.0 1618.5,570.8" fill="#c86294"/>
<polygon points="1567.7,573.2 1605.7,576.0 1607.8,575.1 1569.9,572.4" fill="#d66b9f"/>
<polygon points="1655.1,700.2 1657.4,658.7 1644.5,666.5 1642.2,708.9" fill="#9e4971" stroke="#9e4971" stroke-width="0.7"/>
<polygon points="1654.7,698.9 1656.8,660.7 1644.9,667.9 1642.8,706.9" fill="#b85684"/>
<polygon points="1642.8,706.9 1644.9,667.9 1648.5,665.7 1646.4,704.5" fill="#8b4164"/>
<polygon points="1446.8,871.7 1485.3,878.0 1486.1,838.0 1447.3,832.1" fill="#bd628d" stroke="#bd628d" stroke-width="0.7"/>
<polygon points="1448.4,870.4 1483.8,876.2 1484.5,839.3 1448.8,833.9" fill="#dc72a5"/>
<polygon points="1448.8,833.9 1484.5,839.3 1484.5,843.0 1448.8,837.6" fill="#ea7cb1"/>
<polygon points="1448.5,861.3 1484.0,867.0 1483.8,876.2 1448.4,870.4" fill="#d26c9d"/>
<line x1="1446.8" y1="871.7" x2="1485.3" y2="878.0" stroke="#63334a" stroke-width="1.5" opacity="0.55"/>
<polygon points="1333.7,654.6 1371.3,658.4 1371.1,616.0 1333.2,612.6" fill="#3f8d57" stroke="#3f8d57" stroke-width="0.7"/>
<polygon points="1335.2,653.0 1369.8,656.6 1369.6,617.5 1334.7,614.4" fill="#4aa466"/>
<polygon points="1334.7,614.4 1369.6,617.5 1369.6,621.5 1334.7,618.3" fill="#52b070"/>
<polygon points="1335.1,643.5 1369.7,646.9 1369.8,656.6 1335.2,653.0" fill="#469c61"/>
<line x1="1333.7" y1="654.6" x2="1371.3" y2="658.4" stroke="#21492d" stroke-width="1.5" opacity="0.55"/>
<polygon points="1616.4,962.7 1618.3,923.8 1604.4,938.2 1602.5,978.0" fill="#9e4971" stroke="#9e4971" stroke-width="0.7"/>
<polygon points="1615.9,961.8 1617.7,925.9 1604.9,939.2 1603.2,975.8" fill="#b85684"/>
<polygon points="1603.2,975.8 1604.9,939.2 1608.8,935.1 1607.1,971.5" fill="#8b4164"/>
<polygon points="1484.5,917.3 1523.6,924.1 1524.7,884.4 1485.3,878.0" fill="#bd628d" stroke="#bd628d" stroke-width="0.7"/>
<polygon points="1486.1,916.0 1522.1,922.3 1523.1,885.7 1486.9,879.8" fill="#dc72a5"/>
<polygon points="1486.9,879.8 1523.1,885.7 1523.0,889.4 1486.8,883.5" fill="#ea7cb1"/>
<polygon points="1486.3,907.0 1522.3,913.2 1522.1,922.3 1486.1,916.0" fill="#d26c9d"/>
<line x1="1484.5" y1="917.3" x2="1523.6" y2="924.1" stroke="#63334a" stroke-width="1.5" opacity="0.55"/>
<polygon points="1371.7,741.0 1409.5,745.8 1409.7,704.4 1371.5,700.1" fill="#3f8d57" stroke="#3f8d57" stroke-width="0.7"/>
<polygon points="1373.2,739.6 1408.0,744.0 1408.1,705.9 1373.0,701.9" fill="#4aa466"/>
<polygon points="1373.0,701.9 1408.1,705.9 1408.1,709.7 1373.1,705.7" fill="#52b070"/>
<polygon points="1373.2,730.2 1408.0,734.5 1408.0,744.0 1373.2,739.6" fill="#469c61"/>
<line x1="1371.7" y1="741.0" x2="1409.5" y2="745.8" stroke="#21492d" stroke-width="1.5" opacity="0.55"/>
<polygon points="1201.4,918.4 1177.1,932.6 1213.8,939.7 1237.4,925.2" fill="#ac547f" stroke="#ac547f" stroke-width="0.7"/>
<polygon points="1201.9,919.2 1179.6,932.3 1213.2,938.9 1235.0,925.5" fill="#c86294"/>
<polygon points="1179.6,932.3 1213.2,938.9 1216.8,936.7 1183.2,930.1" fill="#d66b9f"/>
<polygon points="1635.7,831.7 1637.8,791.5 1624.4,802.6 1622.3,843.7" fill="#9e4971" stroke="#9e4971" stroke-width="0.7"/>
<polygon points="1635.3,830.6 1637.2,793.6 1624.9,803.8 1623.0,841.6" fill="#b85684"/>
<polygon points="1623.0,841.6 1624.9,803.8 1628.6,800.7 1626.7,838.2" fill="#8b4164"/>
<polygon points="1333.2,612.6 1371.1,616.0 1370.9,572.8 1332.6,569.9" fill="#bd628d" stroke="#bd628d" stroke-width="0.7"/>
<polygon points="1334.7,611.0 1369.6,614.1 1369.4,574.4 1334.2,571.7" fill="#dc72a5"/>
<polygon points="1334.2,571.7 1369.4,574.4 1369.4,578.4 1334.2,575.7" fill="#ea7cb1"/>
<polygon points="1334.5,601.3 1369.5,604.2 1369.6,614.1 1334.7,611.0" fill="#d26c9d"/>
<line x1="1333.2" y1="612.6" x2="1371.1" y2="616.0" stroke="#63334a" stroke-width="1.5" opacity="0.55"/>
<polygon points="1657.4,658.7 1659.8,616.6 1646.7,623.3 1644.5,666.5" fill="#9e4971" stroke="#9e4971" stroke-width="0.7"/>
<polygon points="1657.0,657.4 1659.2,618.5 1647.2,624.8 1645.1,664.5" fill="#b85684"/>
<polygon points="1645.1,664.5 1647.2,624.8 1650.8,622.9 1648.7,662.3" fill="#8b4164"/>
<polygon points="1485.6,567.6 1468.3,573.1 1508.6,576.0 1525.0,570.4" fill="#ac547f" stroke="#ac547f" stroke-width="0.7"/>
<polygon points="1486.5,567.9 1470.6,572.9 1507.7,575.7 1522.8,570.5" fill="#c86294"/>
<polygon points="1470.6,572.9 1507.7,575.7 1510.1,574.8 1473.2,572.1" fill="#d66b9f"/>
<polygon points="1409.4,786.4 1447.7,791.8 1448.2,750.7 1409.5,745.8" fill="#3f8d57" stroke="#3f8d57" stroke-width="0.7"/>
<polygon points="1410.9,785.0 1446.2,789.9 1446.6,752.1 1411.1,747.6" fill="#4aa466"/>
<polygon points="1411.1,747.6 1446.6,752.1 1446.6,755.9 1411.1,751.4" fill="#52b070"/>
<polygon points="1411.0,775.7 1446.3,780.5 1446.2,789.9 1410.9,785.0" fill="#469c61"/>
<line x1="1409.4" y1="786.4" x2="1447.7" y2="791.8" stroke="#21492d" stroke-width="1.5" opacity="0.55"/>
<polygon points="1371.5,700.1 1409.7,704.4 1409.8,662.3 1371.3,658.4" fill="#3f8d57" stroke="#3f8d57" stroke-width="0.7"/>
<polygon points="1373.0,698.6 1408.1,702.6 1408.3,663.8 1372.9,660.2" fill="#4aa466"/>
<polygon points="1372.9,660.2 1408.3,663.8 1408.2,667.7 1372.9,664.1" fill="#52b070"/>
<polygon points="1373.0,689.0 1408.2,692.9 1408.1,702.6 1373.0,698.6" fill="#469c61"/>
<line x1="1371.5" y1="700.1" x2="1409.7" y2="704.4" stroke="#21492d" stroke-width="1.5" opacity="0.55"/>
<polygon points="1390.6,567.3 1370.9,572.8 1410.1,575.7 1429.0,570.2" fill="#ac547f" stroke="#ac547f" stroke-width="0.7"/>
<polygon points="1391.3,567.6 1373.3,572.7 1409.3,575.4 1426.7,570.3" fill="#c86294"/>
<polygon points="1373.3,572.7 1409.3,575.4 1412.1,574.6 1376.2,571.9" fill="#d66b9f"/>
<polygon points="1484.5,917.3 1467.5,931.4 1507.3,938.6 1523.6,924.1" fill="#ac547f" stroke="#ac547f" stroke-width="0.7"/>
<polygon points="1485.4,918.2 1469.7,931.1 1506.4,937.7 1521.4,924.4" fill="#c86294"/>
<polygon points="1469.7,931.1 1506.4,937.7 1508.8,935.5 1472.3,929.0" fill="#d66b9f"/>
<polygon points="1620.7,570.7 1606.8,576.3 1649.1,579.3 1662.1,573.6" fill="#ac547f" stroke="#ac547f" stroke-width="0.7"/>
<polygon points="1621.8,571.0 1609.0,576.2 1647.9,579.0 1660.0,573.7" fill="#c86294"/>
<polygon points="1609.0,576.2 1647.9,579.0 1649.9,578.1 1611.1,575.4" fill="#d66b9f"/>
<polygon points="1296.1,918.0 1274.2,932.2 1312.0,939.4 1333.1,924.8" fill="#ac547f" stroke="#ac547f" stroke-width="0.7"/>
<polygon points="1296.7,918.8 1276.6,931.9 1311.3,938.5 1330.8,925.1" fill="#c86294"/>
<polygon points="1276.6,931.9 1311.3,938.5 1314.5,936.3 1279.9,929.8" fill="#d66b9f"/>
<polygon points="1447.3,832.1 1486.1,838.0 1487.0,797.2 1447.7,791.8" fill="#3f8d57" stroke="#3f8d57" stroke-width="0.7"/>
<polygon points="1448.8,830.7 1484.6,836.1 1485.4,798.6 1449.3,793.6" fill="#4aa466"/>
<polygon points="1449.3,793.6 1485.4,798.6 1485.3,802.4 1449.2,797.3" fill="#52b070"/>
<polygon points="1448.9,821.5 1484.8,826.8 1484.6,836.1 1448.8,830.7" fill="#469c61"/>
<line x1="1447.3" y1="832.1" x2="1486.1" y2="838.0" stroke="#21492d" stroke-width="1.5" opacity="0.55"/>
<polygon points="1659.8,616.6 1662.1,573.6 1649.1,579.3 1646.7,623.3" fill="#9e4971" stroke="#9e4971" stroke-width="0.7"/>
<polygon points="1659.3,615.1 1661.5,575.6 1649.5,580.9 1647.4,621.3" fill="#b85684"/>
<polygon points="1647.4,621.3 1649.5,580.9 1653.2,579.3 1651.0,619.4" fill="#8b4164"/>
<polygon points="1390.5,917.7 1371.0,931.8 1409.8,939.0 1428.5,924.5" fill="#ac547f" stroke="#ac547f" stroke-width="0.7"/>
<polygon points="1391.2,918.5 1373.4,931.5 1409.0,938.1 1426.3,924.8" fill="#c86294"/>
<polygon points="1373.4,931.5 1409.0,938.1 1411.8,935.9 1376.3,929.4" fill="#d66b9f"/>
<polygon points="1523.6,924.1 1563.5,931.1 1565.1,890.9 1524.7,884.4" fill="#bd628d" stroke="#bd628d" stroke-width="0.7"/>
<polygon points="1525.2,922.8 1562.0,929.2 1563.4,892.3 1526.3,886.3" fill="#dc72a5"/>
<polygon points="1526.3,886.3 1563.4,892.3 1563.2,896.0 1526.2,889.9" fill="#ea7cb1"/>
<polygon points="1525.5,913.7 1562.3,920.0 1562.0,929.2 1525.2,922.8" fill="#d26c9d"/>
<line x1="1523.6" y1="924.1" x2="1563.5" y2="931.1" stroke="#63334a" stroke-width="1.5" opacity="0.55"/>
<polygon points="1485.3,878.0 1524.7,884.4 1525.9,843.9 1486.1,838.0" fill="#bd628d" stroke="#bd628d" stroke-width="0.7"/>
<polygon points="1486.9,876.7 1523.2,882.5 1524.3,845.3 1487.7,839.8" fill="#dc72a5"/>
<polygon points="1487.7,839.8 1524.3,845.3 1524.2,849.1 1487.6,843.5" fill="#ea7cb1"/>
<polygon points="1487.1,867.5 1523.5,873.3 1523.2,882.5 1486.9,876.7" fill="#d26c9d"/>
<line x1="1485.3" y1="878.0" x2="1524.7" y2="884.4" stroke="#63334a" stroke-width="1.5" opacity="0.55"/>
<polygon points="1618.3,923.8 1620.3,884.1 1606.3,897.6 1604.4,938.2" fill="#9e4971" stroke="#9e4971" stroke-width="0.7"/>
<polygon points="1617.9,922.8 1619.7,886.2 1606.8,898.7 1605.1,936.0" fill="#b85684"/>
<polygon points="1605.1,936.0 1606.8,898.7 1610.8,894.9 1609.0,931.9" fill="#8b4164"/>
<polygon points="1637.8,791.5 1640.0,750.6 1626.5,760.8 1624.4,802.6" fill="#9e4971" stroke="#9e4971" stroke-width="0.7"/>
<polygon points="1637.4,790.3 1639.4,752.6 1627.0,762.0 1625.0,800.5" fill="#b85684"/>
<polygon points="1625.0,800.5 1627.0,762.0 1630.8,759.2 1628.8,797.4" fill="#8b4164"/>
<polygon points="1409.5,745.8 1448.2,750.7 1448.7,708.9 1409.7,704.4" fill="#3f8d57" stroke="#3f8d57" stroke-width="0.7"/>
<polygon points="1411.1,744.3 1446.7,748.8 1447.1,710.4 1411.2,706.3" fill="#4aa466"/>
<polygon points="1411.2,706.3 1447.1,710.4 1447.1,714.3 1411.2,710.1" fill="#52b070"/>
<polygon points="1411.1,734.9 1446.8,739.3 1446.7,748.8 1411.1,744.3" fill="#469c61"/>
<line x1="1409.5" y1="745.8" x2="1448.2" y2="750.7" stroke="#21492d" stroke-width="1.5" opacity="0.55"/>
<polygon points="1371.3,658.4 1409.8,662.3 1410.0,619.4 1371.1,616.0" fill="#3f8d57" stroke="#3f8d57" stroke-width="0.7"/>
<polygon points="1372.8,656.9 1408.3,660.4 1408.4,621.0 1372.7,617.8" fill="#4aa466"/>
<polygon points="1372.7,617.8 1408.4,621.0 1408.4,625.0 1372.7,621.7" fill="#52b070"/>
<polygon points="1372.8,647.2 1408.3,650.6 1408.3,660.4 1372.8,656.9" fill="#469c61"/>
<line x1="1371.3" y1="658.4" x2="1409.8" y2="662.3" stroke="#21492d" stroke-width="1.5" opacity="0.55"/>
<polygon points="1525.0,570.4 1508.6,576.0 1549.8,579.1 1565.4,573.3" fill="#ac547f" stroke="#ac547f" stroke-width="0.7"/>
<polygon points="1526.0,570.8 1510.9,575.9 1548.8,578.7 1563.2,573.4" fill="#c86294"/>
<polygon points="1510.9,575.9 1548.8,578.7 1551.2,577.8 1513.4,575.1" fill="#d66b9f"/>
<polygon points="1237.4,925.2 1213.8,939.7 1251.3,947.1 1274.2,932.2" fill="#ac547f" stroke="#ac547f" stroke-width="0.7"/>
<polygon points="1237.9,926.0 1216.2,939.4 1250.7,946.2 1271.9,932.5" fill="#c86294"/>
<polygon points="1216.2,939.4 1250.7,946.2 1254.2,944.0 1219.8,937.3" fill="#d66b9f"/>
<polygon points="1447.7,791.8 1487.0,797.2 1487.8,755.7 1448.2,750.7" fill="#3f8d57" stroke="#3f8d57" stroke-width="0.7"/>
<polygon points="1449.3,790.3 1485.4,795.3 1486.2,757.2 1449.8,752.5" fill="#4aa466"/>
<polygon points="1449.8,752.5 1486.2,757.2 1486.1,761.0 1449.7,756.3" fill="#52b070"/>
<polygon points="1449.4,780.9 1485.6,785.8 1485.4,795.3 1449.3,790.3" fill="#469c61"/>
<line x1="1447.7" y1="791.8" x2="1487.0" y2="797.2" stroke="#21492d" stroke-width="1.5" opacity="0.55"/>
<polygon points="1523.6,924.1 1507.3,938.6 1548.1,945.9 1563.5,931.1" fill="#ac547f" stroke="#ac547f" stroke-width="0.7"/>
<polygon points="1524.5,925.0 1509.6,938.3 1547.1,945.0 1561.3,931.4" fill="#c86294"/>
<polygon points="1509.6,938.3 1547.1,945.0 1549.4,942.7 1512.0,936.1" fill="#d66b9f"/>
<polygon points="1371.1,616.0 1410.0,619.4 1410.1,575.7 1370.9,572.8" fill="#bd628d" stroke="#bd628d" stroke-width="0.7"/>
<polygon points="1372.7,614.4 1408.4,617.5 1408.5,577.4 1372.5,574.6" fill="#dc72a5"/>
<polygon points="1372.5,574.6 1408.5,577.4 1408.5,581.4 1372.5,578.6" fill="#ea7cb1"/>
<polygon points="1372.6,604.5 1408.4,607.6 1408.4,617.5 1372.7,614.4" fill="#d26c9d"/>
<line x1="1371.1" y1="616.0" x2="1410.0" y2="619.4" stroke="#63334a" stroke-width="1.5" opacity="0.55"/>
<polygon points="1563.5,931.1 1604.4,938.2 1606.3,897.6 1565.1,890.9" fill="#bd628d" stroke="#bd628d" stroke-width="0.7"/>
<polygon points="1565.2,929.8 1602.9,936.3 1604.6,899.0 1566.6,892.8" fill="#dc72a5"/>
<polygon points="1566.6,892.8 1604.6,899.0 1604.4,902.8 1566.5,896.5" fill="#ea7cb1"/>
<polygon points="1565.6,920.6 1603.3,927.0 1602.9,936.3 1565.2,929.8" fill="#d26c9d"/>
<line x1="1563.5" y1="931.1" x2="1604.4" y2="938.2" stroke="#63334a" stroke-width="1.5" opacity="0.55"/>
<polygon points="1640.0,750.6 1642.2,708.9 1628.6,718.1 1626.5,760.8" fill="#9e4971" stroke="#9e4971" stroke-width="0.7"/>
<polygon points="1639.6,749.3 1641.6,711.0 1629.1,719.5 1627.1,758.6" fill="#b85684"/>
<polygon points="1627.1,758.6 1629.1,719.5 1632.9,716.9 1630.9,755.8" fill="#8b4164"/>
<polygon points="1486.1,838.0 1525.9,843.9 1527.1,802.8 1487.0,797.2" fill="#3f8d57" stroke="#3f8d57" stroke-width="0.7"/>
<polygon points="1487.8,836.6 1524.4,842.1 1525.4,804.2 1488.5,799.1" fill="#4aa466"/>
<polygon points="1488.5,799.1 1525.4,804.2 1525.3,808.0 1488.4,802.8" fill="#52b070"/>
<polygon points="1487.9,827.2 1524.6,832.7 1524.4,842.1 1487.8,836.6" fill="#469c61"/>
<line x1="1486.1" y1="838.0" x2="1525.9" y2="843.9" stroke="#21492d" stroke-width="1.5" opacity="0.55"/>
<polygon points="1409.7,704.4 1448.7,708.9 1449.2,666.3 1409.8,662.3" fill="#3f8d57" stroke="#3f8d57" stroke-width="0.7"/>
<polygon points="1411.2,702.9 1447.2,707.0 1447.6,667.9 1411.4,664.2" fill="#4aa466"/>
<polygon points="1411.4,664.2 1447.6,667.9 1447.6,671.8 1411.4,668.1" fill="#52b070"/>
<polygon points="1411.3,693.3 1447.3,697.3 1447.2,707.0 1411.2,702.9" fill="#469c61"/>
<line x1="1409.7" y1="704.4" x2="1448.7" y2="708.9" stroke="#21492d" stroke-width="1.5" opacity="0.55"/>
<polygon points="1429.0,570.2 1410.1,575.7 1450.2,578.8 1468.3,573.1" fill="#ac547f" stroke="#ac547f" stroke-width="0.7"/>
<polygon points="1429.8,570.5 1412.5,575.6 1449.3,578.4 1466.0,573.2" fill="#c86294"/>
<polygon points="1412.5,575.6 1449.3,578.4 1452.1,577.6 1415.3,574.8" fill="#d66b9f"/>
<polygon points="1524.7,884.4 1565.1,890.9 1566.6,850.1 1525.9,843.9" fill="#bd628d" stroke="#bd628d" stroke-width="0.7"/>
<polygon points="1526.4,883.0 1563.5,889.0 1564.9,851.5 1527.5,845.8" fill="#dc72a5"/>
<polygon points="1527.5,845.8 1564.9,851.5 1564.8,855.3 1527.4,849.6" fill="#ea7cb1"/>
<polygon points="1526.7,873.8 1563.9,879.7 1563.5,889.0 1526.4,883.0" fill="#d26c9d"/>
<line x1="1524.7" y1="884.4" x2="1565.1" y2="890.9" stroke="#63334a" stroke-width="1.5" opacity="0.55"/>
<polygon points="1620.3,884.1 1622.3,843.7 1608.3,856.3 1606.3,897.6" fill="#9e4971" stroke="#9e4971" stroke-width="0.7"/>
<polygon points="1619.8,883.0 1621.7,845.8 1608.8,857.5 1607.0,895.4" fill="#b85684"/>
<polygon points="1607.0,895.4 1608.8,857.5 1612.7,853.9 1610.9,891.7" fill="#8b4164"/>
<polygon points="1333.1,924.8 1312.0,939.4 1350.6,946.7 1371.0,931.8" fill="#ac547f" stroke="#ac547f" stroke-width="0.7"/>
<polygon points="1333.8,925.7 1314.4,939.0 1349.9,945.8 1368.7,932.1" fill="#c86294"/>
<polygon points="1314.4,939.0 1349.9,945.8 1352.9,943.5 1317.5,936.9" fill="#d66b9f"/>
<polygon points="1428.5,924.5 1409.8,939.0 1449.5,946.3 1467.5,931.4" fill="#ac547f" stroke="#ac547f" stroke-width="0.7"/>
<polygon points="1429.3,925.3 1412.2,938.7 1448.6,945.4 1465.2,931.7" fill="#c86294"/>
<polygon points="1412.2,938.7 1448.6,945.4 1451.3,943.1 1415.0,936.5" fill="#d66b9f"/>
<polygon points="1177.1,932.6 1151.6,947.5 1188.9,955.0 1213.8,939.7" fill="#ac547f" stroke="#ac547f" stroke-width="0.7"/>
<polygon points="1177.6,933.4 1154.1,947.2 1188.4,954.1 1211.3,940.1" fill="#c86294"/>
<polygon points="1154.1,947.2 1188.4,954.1 1192.1,951.8 1158.0,944.9" fill="#d66b9f"/>
<polygon points="1448.2,750.7 1487.8,755.7 1488.7,713.4 1448.7,708.9" fill="#3f8d57" stroke="#3f8d57" stroke-width="0.7"/>
<polygon points="1449.8,749.2 1486.2,753.8 1487.0,715.0 1450.3,710.7" fill="#4aa466"/>
<polygon points="1450.3,710.7 1487.0,715.0 1486.9,718.9 1450.2,714.6" fill="#52b070"/>
<polygon points="1449.9,739.7 1486.4,744.2 1486.2,753.8 1449.8,749.2" fill="#469c61"/>
<line x1="1448.2" y1="750.7" x2="1487.8" y2="755.7" stroke="#21492d" stroke-width="1.5" opacity="0.55"/>
<polygon points="1602.5,978.0 1604.4,938.2 1589.8,953.3 1588.0,994.0" fill="#9e4971" stroke="#9e4971" stroke-width="0.7"/>
<polygon points="1602.1,977.0 1603.8,940.4 1590.4,954.3 1588.7,991.7" fill="#b85684"/>
<polygon points="1588.7,991.7 1590.4,954.3 1594.5,950.1 1592.8,987.3" fill="#8b4164"/>
<polygon points="1409.8,662.3 1449.2,666.3 1449.7,622.9 1410.0,619.4" fill="#3f8d57" stroke="#3f8d57" stroke-width="0.7"/>
<polygon points="1411.4,660.8 1447.6,664.4 1448.1,624.6 1411.5,621.3" fill="#4aa466"/>
<polygon points="1411.5,621.3 1448.1,624.6 1448.0,628.6 1411.5,625.3" fill="#52b070"/>
<polygon points="1411.4,650.9 1447.7,654.5 1447.6,664.4 1411.4,660.8" fill="#469c61"/>
<line x1="1409.8" y1="662.3" x2="1449.2" y2="666.3" stroke="#21492d" stroke-width="1.5" opacity="0.55"/>
<polygon points="1565.4,573.3 1549.8,579.1 1592.1,582.2 1606.8,576.3" fill="#ac547f" stroke="#ac547f" stroke-width="0.7"/>
<polygon points="1566.5,573.7 1552.1,579.0 1591.0,581.8 1604.5,576.4" fill="#c86294"/>
<polygon points="1552.1,579.0 1591.0,581.8 1593.2,580.9 1554.5,578.1" fill="#d66b9f"/>
<polygon points="1642.2,708.9 1644.5,666.5 1630.8,674.7 1628.6,718.1" fill="#9e4971" stroke="#9e4971" stroke-width="0.7"/>
<polygon points="1641.8,707.6 1643.8,668.5 1631.3,676.1 1629.3,716.0" fill="#b85684"/>
<polygon points="1629.3,716.0 1631.3,676.1 1635.1,673.8 1633.1,713.5" fill="#8b4164"/>
<polygon points="1563.5,931.1 1548.1,945.9 1589.8,953.3 1604.4,938.2" fill="#ac547f" stroke="#ac547f" stroke-width="0.7"/>
<polygon points="1564.6,931.9 1550.4,945.5 1588.7,952.4 1602.2,938.5" fill="#c86294"/>
<polygon points="1550.4,945.5 1588.7,952.4 1590.9,950.1 1552.7,943.3" fill="#d66b9f"/>
<polygon points="1487.0,797.2 1527.1,802.8 1528.3,760.8 1487.8,755.7" fill="#3f8d57" stroke="#3f8d57" stroke-width="0.7"/>
<polygon points="1488.6,795.8 1525.5,800.9 1526.6,762.3 1489.4,757.6" fill="#4aa466"/>
<polygon points="1489.4,757.6 1526.6,762.3 1526.5,766.2 1489.3,761.4" fill="#52b070"/>
<polygon points="1488.8,786.3 1525.8,791.3 1525.5,800.9 1488.6,795.8" fill="#469c61"/>
<line x1="1487.0" y1="797.2" x2="1527.1" y2="802.8" stroke="#21492d" stroke-width="1.5" opacity="0.55"/>
<polygon points="1565.1,890.9 1606.3,897.6 1608.3,856.3 1566.6,850.1" fill="#bd628d" stroke="#bd628d" stroke-width="0.7"/>
<polygon points="1566.8,889.6 1604.8,895.7 1606.5,857.8 1568.2,852.0" fill="#dc72a5"/>
<polygon points="1568.2,852.0 1606.5,857.8 1606.4,861.6 1568.1,855.8" fill="#ea7cb1"/>
<polygon points="1567.1,880.2 1605.2,886.3 1604.8,895.7 1566.8,889.6" fill="#d26c9d"/>
<line x1="1565.1" y1="890.9" x2="1606.3" y2="897.6" stroke="#63334a" stroke-width="1.5" opacity="0.55"/>
<polygon points="1525.9,843.9 1566.6,850.1 1568.2,808.5 1527.1,802.8" fill="#3f8d57" stroke="#3f8d57" stroke-width="0.7"/>
<polygon points="1527.6,842.5 1565.0,848.2 1566.5,809.9 1528.7,804.6" fill="#4aa466"/>
<polygon points="1528.7,804.6 1566.5,809.9 1566.3,813.8 1528.6,808.5" fill="#52b070"/>
<polygon points="1527.9,833.1 1565.4,838.7 1565.0,848.2 1527.6,842.5" fill="#469c61"/>
<line x1="1525.9" y1="843.9" x2="1566.6" y2="850.1" stroke="#21492d" stroke-width="1.5" opacity="0.55"/>
<polygon points="1622.3,843.7 1624.4,802.6 1610.3,814.3 1608.3,856.3" fill="#9e4971" stroke="#9e4971" stroke-width="0.7"/>
<polygon points="1621.9,842.6 1623.8,804.7 1610.8,815.5 1609.0,854.2" fill="#b85684"/>
<polygon points="1609.0,854.2 1610.8,815.5 1614.7,812.2 1612.9,850.6" fill="#8b4164"/>
<polygon points="1410.0,619.4 1449.7,622.9 1450.2,578.8 1410.1,575.7" fill="#bd628d" stroke="#bd628d" stroke-width="0.7"/>
<polygon points="1411.5,617.8 1448.1,621.1 1448.6,580.4 1411.7,577.6" fill="#dc72a5"/>
<polygon points="1411.7,577.6 1448.6,580.4 1448.5,584.5 1411.7,581.7" fill="#ea7cb1"/>
<polygon points="1411.6,607.8 1448.2,611.0 1448.1,621.1 1411.5,617.8" fill="#d26c9d"/>
<line x1="1410.0" y1="619.4" x2="1449.7" y2="622.9" stroke="#63334a" stroke-width="1.5" opacity="0.55"/>
<polygon points="1274.2,932.2 1251.3,947.1 1289.7,954.6 1312.0,939.4" fill="#ac547f" stroke="#ac547f" stroke-width="0.7"/>
<polygon points="1274.8,933.1 1253.7,946.8 1289.1,953.7 1309.6,939.7" fill="#c86294"/>
<polygon points="1253.7,946.8 1289.1,953.7 1292.4,951.4 1257.2,944.5" fill="#d66b9f"/>
<polygon points="1448.7,708.9 1488.7,713.4 1489.5,670.4 1449.2,666.3" fill="#3f8d57" stroke="#3f8d57" stroke-width="0.7"/>
<polygon points="1450.3,707.4 1487.1,711.5 1487.9,672.0 1450.8,668.2" fill="#4aa466"/>
<polygon points="1450.8,668.2 1487.9,672.0 1487.8,676.0 1450.7,672.1" fill="#52b070"/>
<polygon points="1450.4,697.6 1487.3,701.7 1487.1,711.5 1450.3,707.4" fill="#469c61"/>
<line x1="1448.7" y1="708.9" x2="1488.7" y2="713.4" stroke="#21492d" stroke-width="1.5" opacity="0.55"/>
<polygon points="1468.3,573.1 1450.2,578.8 1491.3,581.9 1508.6,576.0" fill="#ac547f" stroke="#ac547f" stroke-width="0.7"/>
<polygon points="1469.2,573.4 1452.6,578.7 1490.4,581.5 1506.3,576.1" fill="#c86294"/>
<polygon points="1452.6,578.7 1490.4,581.5 1493.0,580.7 1455.3,577.8" fill="#d66b9f"/>
<polygon points="1644.5,666.5 1646.7,623.3 1633.1,630.5 1630.8,674.7" fill="#9e4971" stroke="#9e4971" stroke-width="0.7"/>
<polygon points="1644.0,665.1 1646.1,625.3 1633.5,631.9 1631.5,672.6" fill="#b85684"/>
<polygon points="1631.5,672.6 1633.5,631.9 1637.4,629.9 1635.3,670.3" fill="#8b4164"/>
<polygon points="1467.5,931.4 1449.5,946.3 1490.2,953.7 1507.3,938.6" fill="#ac547f" stroke="#ac547f" stroke-width="0.7"/>
<polygon points="1468.3,932.3 1451.9,946.0 1489.2,952.8 1505.0,938.9" fill="#c86294"/>
<polygon points="1451.9,946.0 1489.2,952.8 1491.8,950.5 1454.5,943.7" fill="#d66b9f"/>
<polygon points="1371.0,931.8 1350.6,946.7 1390.1,954.2 1409.8,939.0" fill="#ac547f" stroke="#ac547f" stroke-width="0.7"/>
<polygon points="1371.8,932.7 1353.0,946.4 1389.3,953.3 1407.5,939.3" fill="#c86294"/>
<polygon points="1353.0,946.4 1389.3,953.3 1392.3,951.0 1356.0,944.1" fill="#d66b9f"/>
<polygon points="1606.8,576.3 1592.1,582.2 1635.3,585.4 1649.1,579.3" fill="#ac547f" stroke="#ac547f" stroke-width="0.7"/>
<polygon points="1607.9,576.6 1594.4,582.1 1634.1,585.0 1646.8,579.4" fill="#c86294"/>
<polygon points="1594.4,582.1 1634.1,585.0 1636.2,584.1 1596.6,581.2" fill="#d66b9f"/>
<polygon points="1487.8,755.7 1528.3,760.8 1529.6,718.1 1488.7,713.4" fill="#3f8d57" stroke="#3f8d57" stroke-width="0.7"/>
<polygon points="1489.4,754.2 1526.7,758.9 1527.9,719.6 1490.2,715.3" fill="#4aa466"/>
<polygon points="1490.2,715.3 1527.9,719.6 1527.8,723.6 1490.2,719.2" fill="#52b070"/>
<polygon points="1489.6,744.6 1527.0,749.2 1526.7,758.9 1489.4,754.2" fill="#469c61"/>
<line x1="1487.8" y1="755.7" x2="1528.3" y2="760.8" stroke="#21492d" stroke-width="1.5" opacity="0.55"/>
<polygon points="1646.7,623.3 1649.1,579.3 1635.3,585.4 1633.1,630.5" fill="#9e4971" stroke="#9e4971" stroke-width="0.7"/>
<polygon points="1646.3,621.9 1648.4,581.4 1635.8,586.9 1633.7,628.4" fill="#b85684"/>
<polygon points="1633.7,628.4 1635.8,586.9 1639.7,585.2 1637.5,626.4" fill="#8b4164"/>
<polygon points="1449.2,666.3 1489.5,670.4 1490.4,626.6 1449.7,622.9" fill="#3f8d57" stroke="#3f8d57" stroke-width="0.7"/>
<polygon points="1450.8,664.7 1487.9,668.5 1488.7,628.2 1451.3,624.8" fill="#4aa466"/>
<polygon points="1451.3,624.8 1488.7,628.2 1488.7,632.2 1451.3,628.9" fill="#52b070"/>
<polygon points="1450.9,654.8 1488.1,658.5 1487.9,668.5 1450.8,664.7" fill="#469c61"/>
<line x1="1449.2" y1="666.3" x2="1489.5" y2="670.4" stroke="#21492d" stroke-width="1.5" opacity="0.55"/>
<polygon points="1527.1,802.8 1568.2,808.5 1569.8,766.1 1528.3,760.8" fill="#3f8d57" stroke="#3f8d57" stroke-width="0.7"/>
<polygon points="1528.8,801.3 1566.6,806.5 1568.1,767.6 1529.9,762.7" fill="#4aa466"/>
<polygon points="1529.9,762.7 1568.1,767.6 1567.9,771.5 1529.8,766.6" fill="#52b070"/>
<polygon points="1529.1,791.7 1567.0,796.9 1566.6,806.5 1528.8,801.3" fill="#469c61"/>
<line x1="1527.1" y1="802.8" x2="1568.2" y2="808.5" stroke="#21492d" stroke-width="1.5" opacity="0.55"/>
<polygon points="1624.4,802.6 1626.5,760.8 1612.3,771.4 1610.3,814.3" fill="#9e4971" stroke="#9e4971" stroke-width="0.7"/>
<polygon points="1623.9,801.4 1625.9,762.9 1612.8,772.7 1610.9,812.1" fill="#b85684"/>
<polygon points="1610.9,812.1 1612.8,772.7 1616.8,769.7 1614.9,808.8" fill="#8b4164"/>
<polygon points="1566.6,850.1 1608.3,856.3 1610.3,814.3 1568.2,808.5" fill="#bd628d" stroke="#bd628d" stroke-width="0.7"/>
<polygon points="1568.3,848.7 1606.7,854.4 1608.5,815.7 1569.8,810.4" fill="#dc72a5"/>
<polygon points="1569.8,810.4 1608.5,815.7 1608.3,819.6 1569.7,814.2" fill="#ea7cb1"/>
<polygon points="1568.7,839.2 1607.1,844.8 1606.7,854.4 1568.3,848.7" fill="#d26c9d"/>
<line x1="1566.6" y1="850.1" x2="1608.3" y2="856.3" stroke="#63334a" stroke-width="1.5" opacity="0.55"/>
<polygon points="1213.8,939.7 1188.9,955.0 1227.1,962.8 1251.3,947.1" fill="#ac547f" stroke="#ac547f" stroke-width="0.7"/>
<polygon points="1214.3,940.6 1191.4,954.7 1226.6,961.8 1248.8,947.4" fill="#c86294"/>
<polygon points="1191.4,954.7 1226.6,961.8 1230.2,959.5 1195.2,952.4" fill="#d66b9f"/>
<polygon points="1488.7,713.4 1529.6,718.1 1530.8,674.6 1489.5,670.4" fill="#3f8d57" stroke="#3f8d57" stroke-width="0.7"/>
<polygon points="1490.3,711.9 1528.0,716.2 1529.1,676.2 1491.1,672.3" fill="#4aa466"/>
<polygon points="1491.1,672.3 1529.1,676.2 1529.0,680.2 1491.1,676.3" fill="#52b070"/>
<polygon points="1490.5,702.1 1528.3,706.3 1528.0,716.2 1490.3,711.9" fill="#469c61"/>
<line x1="1488.7" y1="713.4" x2="1529.6" y2="718.1" stroke="#21492d" stroke-width="1.5" opacity="0.55"/>
<polygon points="1449.7,622.9 1490.4,626.6 1491.3,581.9 1450.2,578.8" fill="#bd628d" stroke="#bd628d" stroke-width="0.7"/>
<polygon points="1451.3,621.3 1488.8,624.6 1489.6,583.6 1451.8,580.7" fill="#dc72a5"/>
<polygon points="1451.8,580.7 1489.6,583.6 1489.5,587.7 1451.8,584.8" fill="#ea7cb1"/>
<polygon points="1451.5,611.2 1489.0,614.4 1488.8,624.6 1451.3,621.3" fill="#d26c9d"/>
<line x1="1449.7" y1="622.9" x2="1490.4" y2="626.6" stroke="#63334a" stroke-width="1.5" opacity="0.55"/>
<polygon points="1508.6,576.0 1491.3,581.9 1533.4,585.1 1549.8,579.1" fill="#ac547f" stroke="#ac547f" stroke-width="0.7"/>
<polygon points="1509.6,576.4 1493.7,581.8 1532.4,584.7 1547.5,579.2" fill="#c86294"/>
<polygon points="1493.7,581.8 1532.4,584.7 1534.9,583.8 1496.3,580.9" fill="#d66b9f"/>
<polygon points="1507.3,938.6 1490.2,953.7 1531.8,961.4 1548.1,945.9" fill="#ac547f" stroke="#ac547f" stroke-width="0.7"/>
<polygon points="1508.2,939.4 1492.5,953.4 1530.8,960.5 1545.8,946.2" fill="#c86294"/>
<polygon points="1492.5,953.4 1530.8,960.5 1533.2,958.1 1495.1,951.1" fill="#d66b9f"/>
<polygon points="1312.0,939.4 1289.7,954.6 1329.1,962.3 1350.6,946.7" fill="#ac547f" stroke="#ac547f" stroke-width="0.7"/>
<polygon points="1312.6,940.2 1292.2,954.3 1328.4,961.4 1348.2,947.0" fill="#c86294"/>
<polygon points="1292.2,954.3 1328.4,961.4 1331.6,959.0 1295.5,952.0" fill="#d66b9f"/>
<polygon points="1528.3,760.8 1569.8,766.1 1571.5,722.9 1529.6,718.1" fill="#3f8d57" stroke="#3f8d57" stroke-width="0.7"/>
<polygon points="1530.0,759.3 1568.2,764.1 1569.7,724.4 1531.2,720.0" fill="#4aa466"/>
<polygon points="1531.2,720.0 1569.7,724.4 1569.6,728.4 1531.1,724.0" fill="#52b070"/>
<polygon points="1530.3,749.6 1568.6,754.3 1568.2,764.1 1530.0,759.3" fill="#469c61"/>
<line x1="1528.3" y1="760.8" x2="1569.8" y2="766.1" stroke="#21492d" stroke-width="1.5" opacity="0.55"/>
<polygon points="1409.8,939.0 1390.1,954.2 1430.6,961.9 1449.5,946.3" fill="#ac547f" stroke="#ac547f" stroke-width="0.7"/>
<polygon points="1410.6,939.8 1392.5,953.9 1429.8,960.9 1447.2,946.6" fill="#c86294"/>
<polygon points="1392.5,953.9 1429.8,960.9 1432.6,958.6 1395.5,951.6" fill="#d66b9f"/>
<polygon points="1151.6,947.5 1124.8,963.2 1162.7,971.2 1188.9,955.0" fill="#ac547f" stroke="#ac547f" stroke-width="0.7"/>
<polygon points="1152.0,948.4 1127.4,962.9 1162.3,970.2 1186.4,955.4" fill="#c86294"/>
<polygon points="1127.4,962.9 1162.3,970.2 1166.2,967.8 1131.4,960.5" fill="#d66b9f"/>
<polygon points="1626.5,760.8 1628.6,718.1 1614.4,727.8 1612.3,771.4" fill="#9e4971" stroke="#9e4971" stroke-width="0.7"/>
<polygon points="1626.0,759.5 1628.0,720.2 1614.9,729.2 1613.0,769.3" fill="#b85684"/>
<polygon points="1613.0,769.3 1614.9,729.2 1618.9,726.4 1617.0,766.3" fill="#8b4164"/>
<polygon points="1568.2,808.5 1610.3,814.3 1612.3,771.4 1569.8,766.1" fill="#bd628d" stroke="#bd628d" stroke-width="0.7"/>
<polygon points="1569.9,807.0 1608.7,812.4 1610.5,773.0 1571.4,768.0" fill="#dc72a5"/>
<polygon points="1571.4,768.0 1610.5,773.0 1610.3,776.9 1571.3,771.9" fill="#ea7cb1"/>
<polygon points="1570.3,797.3 1609.1,802.6 1608.7,812.4 1569.9,807.0" fill="#d26c9d"/>
<line x1="1568.2" y1="808.5" x2="1610.3" y2="814.3" stroke="#63334a" stroke-width="1.5" opacity="0.55"/>
<polygon points="1489.5,670.4 1530.8,674.6 1532.1,630.3 1490.4,626.6" fill="#3f8d57" stroke="#3f8d57" stroke-width="0.7"/>
<polygon points="1491.2,668.8 1529.2,672.7 1530.4,631.9 1492.0,628.5" fill="#4aa466"/>
<polygon points="1492.0,628.5 1530.4,631.9 1530.3,636.0 1492.0,632.5" fill="#52b070"/>
<polygon points="1491.4,658.8 1529.5,662.5 1529.2,672.7 1491.2,668.8" fill="#469c61"/>
<line x1="1489.5" y1="670.4" x2="1530.8" y2="674.6" stroke="#21492d" stroke-width="1.5" opacity="0.55"/>
<polygon points="1588.0,994.0 1589.8,953.3 1574.5,969.3 1572.8,1010.9" fill="#9e4971" stroke="#9e4971" stroke-width="0.7"/>
<polygon points="1587.5,993.1 1589.2,955.6 1575.0,970.3 1573.5,1008.5" fill="#b85684"/>
<polygon points="1573.5,1008.5 1575.0,970.3 1579.3,965.8 1577.7,1003.8" fill="#8b4164"/>
<polygon points="1127.3,1004.7 1164.9,1013.1 1162.7,971.2 1124.8,963.2" fill="#bd628d" stroke="#bd628d" stroke-width="0.7"/>
<polygon points="1128.7,1003.4 1163.3,1011.1 1161.3,972.5 1126.4,965.2" fill="#dc72a5"/>
<polygon points="1126.4,965.2 1161.3,972.5 1161.5,976.4 1126.6,969.1" fill="#ea7cb1"/>
<polygon points="1128.1,993.9 1162.8,1001.5 1163.3,1011.1 1128.7,1003.4" fill="#d26c9d"/>
<line x1="1127.3" y1="1004.7" x2="1164.9" y2="1013.1" stroke="#63334a" stroke-width="1.5" opacity="0.55"/>
<polygon points="1548.1,945.9 1531.8,961.4 1574.5,969.3 1589.8,953.3" fill="#ac547f" stroke="#ac547f" stroke-width="0.7"/>
<polygon points="1549.1,946.8 1534.2,961.1 1573.4,968.3 1587.5,953.6" fill="#c86294"/>
<polygon points="1534.2,961.1 1573.4,968.3 1575.7,965.9 1536.6,958.7" fill="#d66b9f"/>
<polygon points="1529.6,718.1 1571.5,722.9 1573.1,678.9 1530.8,674.6" fill="#3f8d57" stroke="#3f8d57" stroke-width="0.7"/>
<polygon points="1531.3,716.6 1569.8,721.0 1571.4,680.5 1532.5,676.5" fill="#4aa466"/>
<polygon points="1532.5,676.5 1571.4,680.5 1571.2,684.6 1532.3,680.6" fill="#52b070"/>
<polygon points="1531.6,706.6 1570.2,710.9 1569.8,721.0 1531.3,716.6" fill="#469c61"/>
<line x1="1529.6" y1="718.1" x2="1571.5" y2="722.9" stroke="#21492d" stroke-width="1.5" opacity="0.55"/>
<polygon points="1549.8,579.1 1533.4,585.1 1576.6,588.4 1592.1,582.2" fill="#ac547f" stroke="#ac547f" stroke-width="0.7"/>
<polygon points="1550.9,579.4 1535.8,585.0 1575.5,588.0 1589.7,582.3" fill="#c86294"/>
<polygon points="1535.8,585.0 1575.5,588.0 1577.8,587.1 1538.3,584.1" fill="#d66b9f"/>
<polygon points="1628.6,718.1 1630.8,674.7 1616.5,683.3 1614.4,727.8" fill="#9e4971" stroke="#9e4971" stroke-width="0.7"/>
<polygon points="1628.2,716.8 1630.2,676.8 1617.0,684.7 1615.0,725.6" fill="#b85684"/>
<polygon points="1615.0,725.6 1617.0,684.7 1621.0,682.3 1619.1,722.9" fill="#8b4164"/>
<polygon points="1490.4,626.6 1532.1,630.3 1533.4,585.1 1491.3,581.9" fill="#bd628d" stroke="#bd628d" stroke-width="0.7"/>
<polygon points="1492.1,624.9 1530.5,628.3 1531.7,586.8 1493.0,583.8" fill="#dc72a5"/>
<polygon points="1493.0,583.8 1531.7,586.8 1531.6,591.0 1492.9,588.0" fill="#ea7cb1"/>
<polygon points="1492.3,614.7 1530.8,618.0 1530.5,628.3 1492.1,624.9" fill="#d26c9d"/>
<line x1="1490.4" y1="626.6" x2="1532.1" y2="630.3" stroke="#63334a" stroke-width="1.5" opacity="0.55"/>
<polygon points="1251.3,947.1 1227.1,962.8 1266.3,970.7 1289.7,954.6" fill="#ac547f" stroke="#ac547f" stroke-width="0.7"/>
<polygon points="1251.9,948.0 1229.6,962.4 1265.6,969.7 1287.2,954.9" fill="#c86294"/>
<polygon points="1229.6,962.4 1265.6,969.7 1269.2,967.3 1233.3,960.1" fill="#d66b9f"/>
<polygon points="1569.8,766.1 1612.3,771.4 1614.4,727.8 1571.5,722.9" fill="#bd628d" stroke="#bd628d" stroke-width="0.7"/>
<polygon points="1571.6,764.6 1610.7,769.5 1612.6,729.4 1573.1,724.8" fill="#dc72a5"/>
<polygon points="1573.1,724.8 1612.6,729.4 1612.4,733.4 1572.9,728.8" fill="#ea7cb1"/>
<polygon points="1571.9,754.7 1611.1,759.5 1610.7,769.5 1571.6,764.6" fill="#d26c9d"/>
<line x1="1569.8" y1="766.1" x2="1612.3" y2="771.4" stroke="#63334a" stroke-width="1.5" opacity="0.55"/>
<polygon points="1449.5,946.3 1430.6,961.9 1472.1,969.7 1490.2,953.7" fill="#ac547f" stroke="#ac547f" stroke-width="0.7"/>
<polygon points="1450.4,947.2 1433.0,961.5 1471.2,968.8 1487.8,954.1" fill="#c86294"/>
<polygon points="1433.0,961.5 1471.2,968.8 1473.9,966.4 1435.9,959.2" fill="#d66b9f"/>
<polygon points="1350.6,946.7 1329.1,962.3 1369.4,970.2 1390.1,954.2" fill="#ac547f" stroke="#ac547f" stroke-width="0.7"/>
<polygon points="1351.3,947.6 1331.5,962.0 1368.6,969.2 1387.7,954.5" fill="#c86294"/>
<polygon points="1331.5,962.0 1368.6,969.2 1371.7,966.8 1334.8,959.6" fill="#d66b9f"/>
<polygon points="1530.8,674.6 1573.1,678.9 1574.8,634.1 1532.1,630.3" fill="#3f8d57" stroke="#3f8d57" stroke-width="0.7"/>
<polygon points="1532.6,673.0 1571.5,676.9 1573.0,635.7 1533.8,632.2" fill="#4aa466"/>
<polygon points="1533.8,632.2 1573.0,635.7 1572.9,639.9 1533.6,636.3" fill="#52b070"/>
<polygon points="1532.9,662.9 1571.9,666.7 1571.5,676.9 1532.6,673.0" fill="#469c61"/>
<line x1="1530.8" y1="674.6" x2="1573.1" y2="678.9" stroke="#21492d" stroke-width="1.5" opacity="0.55"/>
<polygon points="1630.8,674.7 1633.1,630.5 1618.6,638.0 1616.5,683.3" fill="#9e4971" stroke="#9e4971" stroke-width="0.7"/>
<polygon points="1630.4,673.3 1632.4,632.5 1619.1,639.5 1617.2,681.2" fill="#b85684"/>
<polygon points="1617.2,681.2 1619.1,639.5 1623.2,637.4 1621.2,678.8" fill="#8b4164"/>
<polygon points="1188.9,955.0 1162.7,971.2 1201.6,979.3 1227.1,962.8" fill="#ac547f" stroke="#ac547f" stroke-width="0.7"/>
<polygon points="1189.4,956.0 1165.3,970.8 1201.1,978.3 1224.6,963.1" fill="#c86294"/>
<polygon points="1165.3,970.8 1201.1,978.3 1204.9,975.8 1169.3,968.4" fill="#d66b9f"/>
<polygon points="1571.5,722.9 1614.4,727.8 1616.5,683.3 1573.1,678.9" fill="#bd628d" stroke="#bd628d" stroke-width="0.7"/>
<polygon points="1573.2,721.3 1612.7,725.8 1614.6,684.9 1574.8,680.8" fill="#dc72a5"/>
<polygon points="1574.8,680.8 1614.6,684.9 1614.5,689.0 1574.6,684.9" fill="#ea7cb1"/>
<polygon points="1573.6,711.3 1613.2,715.7 1612.7,725.8 1573.2,721.3" fill="#d26c9d"/>
<line x1="1571.5" y1="722.9" x2="1614.4" y2="727.8" stroke="#63334a" stroke-width="1.5" opacity="0.55"/>
<polygon points="1592.1,582.2 1576.6,588.4 1620.8,591.7 1635.3,585.4" fill="#ac547f" stroke="#ac547f" stroke-width="0.7"/>
<polygon points="1593.2,582.5 1579.0,588.3 1619.6,591.3 1633.0,585.5" fill="#c86294"/>
<polygon points="1579.0,588.3 1619.6,591.3 1621.8,590.4 1581.3,587.3" fill="#d66b9f"/>
<polygon points="1532.1,630.3 1574.8,634.1 1576.6,588.4 1533.4,585.1" fill="#bd628d" stroke="#bd628d" stroke-width="0.7"/>
<polygon points="1533.9,628.6 1573.2,632.1 1574.8,590.1 1535.1,587.1" fill="#dc72a5"/>
<polygon points="1535.1,587.1 1574.8,590.1 1574.6,594.3 1535.0,591.2" fill="#ea7cb1"/>
<polygon points="1534.2,618.3 1573.6,621.7 1573.2,632.1 1533.9,628.6" fill="#d26c9d"/>
<line x1="1532.1" y1="630.3" x2="1574.8" y2="634.1" stroke="#63334a" stroke-width="1.5" opacity="0.55"/>
<polygon points="1633.1,630.5 1635.3,585.4 1620.8,591.7 1618.6,638.0" fill="#9e4971" stroke="#9e4971" stroke-width="0.7"/>
<polygon points="1632.6,629.0 1634.7,587.4 1621.3,593.3 1619.3,635.8" fill="#b85684"/>
<polygon points="1619.3,635.8 1621.3,593.3 1625.4,591.5 1623.4,633.7" fill="#8b4164"/>
<polygon points="1164.9,1013.1 1203.5,1021.7 1201.6,979.3 1162.7,971.2" fill="#bd628d" stroke="#bd628d" stroke-width="0.7"/>
<polygon points="1166.4,1011.8 1201.8,1019.6 1200.1,980.7 1164.3,973.2" fill="#dc72a5"/>
<polygon points="1164.3,973.2 1200.1,980.7 1200.3,984.6 1164.5,977.1" fill="#ea7cb1"/>
<polygon points="1165.9,1002.2 1201.4,1010.0 1201.8,1019.6 1166.4,1011.8" fill="#d26c9d"/>
<line x1="1164.9" y1="1013.1" x2="1203.5" y2="1021.7" stroke="#63334a" stroke-width="1.5" opacity="0.55"/>
<polygon points="1490.2,953.7 1472.1,969.7 1514.7,977.8 1531.8,961.4" fill="#ac547f" stroke="#ac547f" stroke-width="0.7"/>
<polygon points="1491.1,954.7 1474.5,969.4 1513.6,976.8 1529.4,961.7" fill="#c86294"/>
<polygon points="1474.5,969.4 1513.6,976.8 1516.2,974.4 1477.2,967.0" fill="#d66b9f"/>
<polygon points="1289.7,954.6 1266.3,970.7 1306.4,978.8 1329.1,962.3" fill="#ac547f" stroke="#ac547f" stroke-width="0.7"/>
<polygon points="1290.3,955.5 1268.8,970.4 1305.7,977.8 1326.6,962.7" fill="#c86294"/>
<polygon points="1268.8,970.4 1305.7,977.8 1309.1,975.3 1272.3,967.9" fill="#d66b9f"/>
<polygon points="1573.1,678.9 1616.5,683.3 1618.6,638.0 1574.8,634.1" fill="#bd628d" stroke="#bd628d" stroke-width="0.7"/>
<polygon points="1574.9,677.3 1614.8,681.3 1616.8,639.6 1576.5,636.0" fill="#dc72a5"/>
<polygon points="1576.5,636.0 1616.8,639.6 1616.6,643.8 1576.3,640.2" fill="#ea7cb1"/>
<polygon points="1575.3,667.0 1615.3,671.0 1614.8,681.3 1574.9,677.3" fill="#d26c9d"/>
<line x1="1573.1" y1="678.9" x2="1616.5" y2="683.3" stroke="#63334a" stroke-width="1.5" opacity="0.55"/>
<polygon points="1390.1,954.2 1369.4,970.2 1410.7,978.3 1430.6,961.9" fill="#ac547f" stroke="#ac547f" stroke-width="0.7"/>
<polygon points="1390.9,955.1 1371.9,969.9 1409.9,977.3 1428.2,962.2" fill="#c86294"/>
<polygon points="1371.9,969.9 1409.9,977.3 1412.9,974.8 1375.0,967.5" fill="#d66b9f"/>
<polygon points="1574.8,634.1 1618.6,638.0 1620.8,591.7 1576.6,588.4" fill="#bd628d" stroke="#bd628d" stroke-width="0.7"/>
<polygon points="1576.6,632.4 1616.9,636.0 1618.9,593.5 1578.3,590.4" fill="#dc72a5"/>
<polygon points="1578.3,590.4 1618.9,593.5 1618.7,597.7 1578.1,594.6" fill="#ea7cb1"/>
<polygon points="1577.0,622.0 1617.4,625.4 1616.9,636.0 1576.6,632.4" fill="#d26c9d"/>
<line x1="1574.8" y1="634.1" x2="1618.6" y2="638.0" stroke="#63334a" stroke-width="1.5" opacity="0.55"/>
<polygon points="1572.8,1010.9 1574.5,969.3 1558.3,986.1 1556.7,1028.7" fill="#9e4971" stroke="#9e4971" stroke-width="0.7"/>
<polygon points="1572.2,1009.9 1573.8,971.6 1558.9,987.1 1557.4,1026.2" fill="#b85684"/>
<polygon points="1557.4,1026.2 1558.9,987.1 1563.4,982.4 1561.9,1021.3" fill="#8b4164"/>
<polygon points="1227.1,962.8 1201.6,979.3 1241.5,987.6 1266.3,970.7" fill="#ac547f" stroke="#ac547f" stroke-width="0.7"/>
<polygon points="1227.7,963.7 1204.2,979.0 1240.9,986.6 1263.7,971.0" fill="#c86294"/>
<polygon points="1204.2,979.0 1240.9,986.6 1244.6,984.1 1208.1,976.5" fill="#d66b9f"/>
<polygon points="1531.8,961.4 1514.7,977.8 1558.3,986.1 1574.5,969.3" fill="#ac547f" stroke="#ac547f" stroke-width="0.7"/>
<polygon points="1532.8,962.4 1517.1,977.5 1557.2,985.1 1572.1,969.6" fill="#c86294"/>
<polygon points="1517.1,977.5 1557.2,985.1 1559.6,982.5 1519.6,975.0" fill="#d66b9f"/>
<polygon points="1329.1,962.3 1306.4,978.8 1347.5,987.1 1369.4,970.2" fill="#ac547f" stroke="#ac547f" stroke-width="0.7"/>
<polygon points="1329.8,963.3 1308.9,978.5 1346.7,986.1 1366.9,970.6" fill="#c86294"/>
<polygon points="1308.9,978.5 1346.7,986.1 1350.0,983.6 1312.3,976.0" fill="#d66b9f"/>
<polygon points="1430.6,961.9 1410.7,978.3 1453.1,986.6 1472.1,969.7" fill="#ac547f" stroke="#ac547f" stroke-width="0.7"/>
<polygon points="1431.5,962.8 1413.2,978.0 1452.2,985.6 1469.7,970.1" fill="#c86294"/>
<polygon points="1413.2,978.0 1452.2,985.6 1455.0,983.0 1416.2,975.5" fill="#d66b9f"/>
<polygon points="1203.5,1021.7 1243.0,1030.5 1241.5,987.6 1201.6,979.3" fill="#bd628d" stroke="#bd628d" stroke-width="0.7"/>
<polygon points="1205.0,1020.3 1241.3,1028.4 1240.0,989.0 1203.3,981.3" fill="#dc72a5"/>
<polygon points="1203.3,981.3 1240.0,989.0 1240.1,993.0 1203.4,985.3" fill="#ea7cb1"/>
<polygon points="1204.5,1010.6 1241.0,1018.6 1241.3,1028.4 1205.0,1020.3" fill="#d26c9d"/>
<line x1="1203.5" y1="1021.7" x2="1243.0" y2="1030.5" stroke="#63334a" stroke-width="1.5" opacity="0.55"/>
<polygon points="1266.3,970.7 1241.5,987.6 1282.4,996.2 1306.4,978.8" fill="#ac547f" stroke="#ac547f" stroke-width="0.7"/>
<polygon points="1266.9,971.7 1244.1,987.3 1281.8,995.1 1303.8,979.2" fill="#c86294"/>
<polygon points="1244.1,987.3 1281.8,995.1 1285.4,992.5 1247.9,984.7" fill="#d66b9f"/>
<polygon points="1472.1,969.7 1453.1,986.6 1496.6,995.1 1514.7,977.8" fill="#ac547f" stroke="#ac547f" stroke-width="0.7"/>
<polygon points="1473.1,970.7 1455.6,986.2 1495.5,994.1 1512.2,978.2" fill="#c86294"/>
<polygon points="1455.6,986.2 1495.5,994.1 1498.3,991.5 1458.4,983.7" fill="#d66b9f"/>
<polygon points="1369.4,970.2 1347.5,987.1 1389.7,995.7 1410.7,978.3" fill="#ac547f" stroke="#ac547f" stroke-width="0.7"/>
<polygon points="1370.2,971.2 1350.1,986.8 1388.9,994.6 1408.2,978.7" fill="#c86294"/>
<polygon points="1350.1,986.8 1388.9,994.6 1392.0,992.0 1353.4,984.2" fill="#d66b9f"/>
<polygon points="1243.0,1030.5 1283.5,1039.5 1282.4,996.2 1241.5,987.6" fill="#bd628d" stroke="#bd628d" stroke-width="0.7"/>
<polygon points="1244.5,1029.1 1281.9,1037.4 1280.8,997.6 1243.2,989.7" fill="#dc72a5"/>
<polygon points="1243.2,989.7 1280.8,997.6 1280.9,1001.6 1243.3,993.7" fill="#ea7cb1"/>
<polygon points="1244.2,1019.3 1281.6,1027.5 1281.9,1037.4 1244.5,1029.1" fill="#d26c9d"/>
<line x1="1243.0" y1="1030.5" x2="1283.5" y2="1039.5" stroke="#63334a" stroke-width="1.5" opacity="0.55"/>
<polygon points="1556.7,1028.7 1558.3,986.1 1541.1,1003.8 1539.7,1047.4" fill="#9e4971" stroke="#9e4971" stroke-width="0.7"/>
<polygon points="1556.1,1027.7 1557.5,988.5 1541.8,1004.9 1540.4,1044.9" fill="#b85684"/>
<polygon points="1540.4,1044.9 1541.8,1004.9 1546.6,999.9 1545.2,1039.7" fill="#8b4164"/>
<polygon points="1514.7,977.8 1496.6,995.1 1541.1,1003.8 1558.3,986.1" fill="#ac547f" stroke="#ac547f" stroke-width="0.7"/>
<polygon points="1515.7,978.8 1499.1,994.7 1540.0,1002.8 1555.8,986.4" fill="#c86294"/>
<polygon points="1499.1,994.7 1540.0,1002.8 1542.6,1000.1 1501.8,992.1" fill="#d66b9f"/>
<polygon points="1306.4,978.8 1282.4,996.2 1324.4,1005.0 1347.5,987.1" fill="#ac547f" stroke="#ac547f" stroke-width="0.7"/>
<polygon points="1307.1,979.8 1285.1,995.8 1323.7,1003.9 1344.9,987.5" fill="#c86294"/>
<polygon points="1285.1,995.8 1323.7,1003.9 1327.1,1001.2 1288.7,993.2" fill="#d66b9f"/>
<polygon points="1410.7,978.3 1389.7,995.7 1433.0,1004.4 1453.1,986.6" fill="#ac547f" stroke="#ac547f" stroke-width="0.7"/>
<polygon points="1411.6,979.3 1392.3,995.3 1432.1,1003.3 1450.6,987.0" fill="#c86294"/>
<polygon points="1392.3,995.3 1432.1,1003.3 1435.1,1000.7 1395.4,992.7" fill="#d66b9f"/>
<polygon points="1283.5,1039.5 1325.1,1048.7 1324.4,1005.0 1282.4,996.2" fill="#bd628d" stroke="#bd628d" stroke-width="0.7"/>
<polygon points="1285.1,1038.1 1323.4,1046.6 1322.7,1006.4 1284.1,998.3" fill="#dc72a5"/>
<polygon points="1284.1,998.3 1322.7,1006.4 1322.8,1010.5 1284.2,1002.3" fill="#ea7cb1"/>
<polygon points="1284.9,1028.2 1323.2,1036.6 1323.4,1046.6 1285.1,1038.1" fill="#d26c9d"/>
<line x1="1283.5" y1="1039.5" x2="1325.1" y2="1048.7" stroke="#63334a" stroke-width="1.5" opacity="0.55"/>
<polygon points="1453.1,986.6 1433.0,1004.4 1477.4,1013.4 1496.6,995.1" fill="#ac547f" stroke="#ac547f" stroke-width="0.7"/>
<polygon points="1454.0,987.6 1435.6,1004.0 1476.4,1012.3 1494.0,995.5" fill="#c86294"/>
<polygon points="1435.6,1004.0 1476.4,1012.3 1479.3,1009.5 1438.6,1001.4" fill="#d66b9f"/>
<polygon points="1347.5,987.1 1324.4,1005.0 1367.5,1014.0 1389.7,995.7" fill="#ac547f" stroke="#ac547f" stroke-width="0.7"/>
<polygon points="1348.3,988.2 1327.1,1004.6 1366.7,1012.9 1387.1,996.0" fill="#c86294"/>
<polygon points="1327.1,1004.6 1366.7,1012.9 1370.0,1010.1 1330.5,1001.9" fill="#d66b9f"/>
<polygon points="1325.1,1048.7 1367.8,1058.2 1367.5,1014.0 1324.4,1005.0" fill="#bd628d" stroke="#bd628d" stroke-width="0.7"/>
<polygon points="1326.8,1047.4 1366.0,1056.1 1365.8,1015.4 1326.1,1007.1" fill="#dc72a5"/>
<polygon points="1326.1,1007.1 1365.8,1015.4 1365.8,1019.5 1326.2,1011.2" fill="#ea7cb1"/>
<polygon points="1326.6,1037.4 1366.0,1046.0 1366.0,1056.1 1326.8,1047.4" fill="#d26c9d"/>
<line x1="1325.1" y1="1048.7" x2="1367.8" y2="1058.2" stroke="#63334a" stroke-width="1.5" opacity="0.55"/>
<polygon points="1539.7,1047.4 1541.1,1003.8 1523.0,1022.6 1521.7,1067.2" fill="#9e4971" stroke="#9e4971" stroke-width="0.7"/>
<polygon points="1539.0,1046.5 1540.4,1006.3 1523.7,1023.7 1522.5,1064.7" fill="#b85684"/>
<polygon points="1522.5,1064.7 1523.7,1023.7 1528.8,1018.4 1527.6,1059.1" fill="#8b4164"/>
<polygon points="1496.6,995.1 1477.4,1013.4 1523.0,1022.6 1541.1,1003.8" fill="#ac547f" stroke="#ac547f" stroke-width="0.7"/>
<polygon points="1497.6,996.2 1480.0,1013.0 1521.9,1021.5 1538.6,1004.2" fill="#c86294"/>
<polygon points="1480.0,1013.0 1521.9,1021.5 1524.7,1018.7 1482.9,1010.3" fill="#d66b9f"/>
<polygon points="1389.7,995.7 1367.5,1014.0 1411.7,1023.2 1433.0,1004.4" fill="#ac547f" stroke="#ac547f" stroke-width="0.7"/>
<polygon points="1390.6,996.7 1370.2,1013.6 1410.8,1022.1 1430.4,1004.8" fill="#c86294"/>
<polygon points="1370.2,1013.6 1410.8,1022.1 1414.0,1019.3 1373.5,1010.8" fill="#d66b9f"/>
<polygon points="1367.8,1058.2 1411.6,1068.0 1411.7,1023.2 1367.5,1014.0" fill="#bd628d" stroke="#bd628d" stroke-width="0.7"/>
<polygon points="1369.5,1056.8 1409.8,1065.8 1409.9,1024.7 1369.3,1016.1" fill="#dc72a5"/>
<polygon points="1369.3,1016.1 1409.9,1024.7 1409.9,1028.8 1369.3,1020.3" fill="#ea7cb1"/>
<polygon points="1369.4,1046.7 1409.8,1055.6 1409.8,1065.8 1369.5,1056.8" fill="#d26c9d"/>
<line x1="1367.8" y1="1058.2" x2="1411.6" y2="1068.0" stroke="#63334a" stroke-width="1.5" opacity="0.55"/>
<polygon points="1433.0,1004.4 1411.7,1023.2 1457.2,1032.8 1477.4,1013.4" fill="#ac547f" stroke="#ac547f" stroke-width="0.7"/>
<polygon points="1433.9,1005.5 1414.4,1022.8 1456.2,1031.6 1474.8,1013.8" fill="#c86294"/>
<polygon points="1414.4,1022.8 1456.2,1031.6 1459.2,1028.7 1417.6,1020.0" fill="#d66b9f"/>
<polygon points="1411.6,1068.0 1456.5,1078.0 1457.2,1032.8 1411.7,1023.2" fill="#bd628d" stroke="#bd628d" stroke-width="0.7"/>
<polygon points="1413.4,1066.6 1454.7,1075.8 1455.3,1034.2 1413.5,1025.4" fill="#dc72a5"/>
<polygon points="1413.5,1025.4 1455.3,1034.2 1455.3,1038.4 1413.5,1029.6" fill="#ea7cb1"/>
<polygon points="1413.4,1056.4 1454.9,1065.4 1454.7,1075.8 1413.4,1066.6" fill="#d26c9d"/>
<line x1="1411.6" y1="1068.0" x2="1456.5" y2="1078.0" stroke="#63334a" stroke-width="1.5" opacity="0.55"/>
<polygon points="1521.7,1067.2 1523.0,1022.6 1503.9,1042.5 1502.7,1088.2" fill="#9e4971" stroke="#9e4971" stroke-width="0.7"/>
<polygon points="1521.0,1066.3 1522.2,1025.2 1504.6,1043.5 1503.5,1085.6" fill="#b85684"/>
<polygon points="1503.5,1085.6 1504.6,1043.5 1510.0,1037.9 1508.9,1079.7" fill="#8b4164"/>
<polygon points="1477.4,1013.4 1457.2,1032.8 1503.9,1042.5 1523.0,1022.6" fill="#ac547f" stroke="#ac547f" stroke-width="0.7"/>
<polygon points="1478.4,1014.5 1459.9,1032.3 1502.8,1041.3 1520.4,1023.0" fill="#c86294"/>
<polygon points="1459.9,1032.3 1502.8,1041.3 1505.7,1038.3 1462.9,1029.4" fill="#d66b9f"/>
<polygon points="1456.5,1078.0 1502.7,1088.2 1503.9,1042.5 1457.2,1032.8" fill="#bd628d" stroke="#bd628d" stroke-width="0.7"/>
<polygon points="1458.4,1076.6 1500.9,1086.0 1501.9,1044.0 1459.0,1035.0" fill="#dc72a5"/>
<polygon points="1459.0,1035.0 1501.9,1044.0 1501.8,1048.2 1458.9,1039.2" fill="#ea7cb1"/>
<polygon points="1458.5,1066.2 1501.2,1075.6 1500.9,1086.0 1458.4,1076.6" fill="#d26c9d"/>
<line x1="1456.5" y1="1078.0" x2="1502.7" y2="1088.2" stroke="#63334a" stroke-width="1.5" opacity="0.55"/>
<line x1="1213.0" y1="758.8" x2="1633.4" y2="817.1" stroke="#ff0000" stroke-width="4.5"/>
<polygon points="1242.7,763.8 1248.7,757.8 1254.7,763.8 1248.7,769.8" fill="#ff0000"/>
<polygon points="1279.3,768.9 1285.3,762.9 1291.3,768.9 1285.3,774.9" fill="#ff0000"/>
<polygon points="1316.7,774.0 1322.7,768.0 1328.7,774.0 1322.7,780.0" fill="#ff0000"/>
<polygon points="1355.0,779.3 1361.0,773.3 1367.0,779.3 1361.0,785.3" fill="#ff0000"/>
<polygon points="1434.3,790.3 1440.3,784.3 1446.3,790.3 1440.3,796.3" fill="#ff0000"/>
<polygon points="1475.4,796.0 1481.4,790.0 1487.4,796.0 1481.4,802.0" fill="#ff0000"/>
<polygon points="1517.5,801.9 1523.5,795.9 1529.5,801.9 1523.5,807.9" fill="#ff0000"/>
<polygon points="1560.7,807.8 1566.7,801.8 1572.7,807.8 1566.7,813.8" fill="#ff0000"/>
<polygon points="1633.4,817.1 1585.8,825.6 1589.7,797.9" fill="#ff0000"/>
<line x1="1400.0" y1="928.1" x2="1400.4" y2="563.2" stroke="#00f000" stroke-width="4.5"/>
<circle cx="1400.0" cy="908.2" r="6.0" fill="#00f000"/>
<circle cx="1400.1" cy="867.8" r="6.0" fill="#00f000"/>
<circle cx="1400.1" cy="826.7" r="6.0" fill="#00f000"/>
<circle cx="1400.2" cy="742.1" r="6.0" fill="#00f000"/>
<circle cx="1400.3" cy="698.6" r="6.0" fill="#00f000"/>
<circle cx="1400.3" cy="654.3" r="6.0" fill="#00f000"/>
<circle cx="1400.4" cy="609.2" r="6.0" fill="#00f000"/>
<polygon points="1403.0,539.9 1398.0,539.9 1385.4,584.9 1415.4,584.9" fill="#00f000"/>
<line x1="1428.6" y1="768.7" x2="1274.1" y2="855.8" stroke="#0000ff" stroke-width="4.0"/>
<circle cx="1419.4" cy="774.0" r="6.0" fill="#0000ff"/>
<circle cx="1379.9" cy="796.2" r="6.0" fill="#0000ff"/>
<circle cx="1358.6" cy="808.2" r="6.0" fill="#0000ff"/>
<circle cx="1336.1" cy="820.8" r="6.0" fill="#0000ff"/>
<circle cx="1312.4" cy="834.2" r="6.0" fill="#0000ff"/>
<polygon points="1274.1,857.8 1290.1,827.8 1304.1,825.8 1332.1,811.8 1336.1,815.8 1308.1,857.8" fill="#0000ff"/>
<rect x="1396.2" y="780.8" width="8.0" height="8.0" fill="#fff"/>
<line x1="1102.7" y1="600.8" x2="1514.1" y2="638.5" stroke="#ffffff" stroke-width="3.4" stroke-linecap="square"/>
<line x1="1320.7" y1="549.7" x2="1662.1" y2="573.6" stroke="#ffffff" stroke-width="3.4" stroke-linecap="square"/>
<line x1="1102.7" y1="600.8" x2="1320.7" y2="549.7" stroke="#ffffff" stroke-width="3.4" stroke-linecap="square"/>
<line x1="1514.1" y1="638.5" x2="1662.1" y2="573.6" stroke="#ffffff" stroke-width="3.4" stroke-linecap="square"/>
<line x1="1102.7" y1="600.8" x2="1127.3" y2="1004.7" stroke="#ffffff" stroke-width="3.4" stroke-linecap="square"/>
<line x1="1514.1" y1="638.5" x2="1502.7" y2="1088.2" stroke="#ffffff" stroke-width="3.4" stroke-linecap="square"/>
<line x1="1127.3" y1="1004.7" x2="1502.7" y2="1088.2" stroke="#ffffff" stroke-width="3.4" stroke-linecap="square"/>
<line x1="1502.7" y1="1088.2" x2="1642.1" y2="934.4" stroke="#ffffff" stroke-width="3.4" stroke-linecap="square"/>
<line x1="1662.1" y1="573.6" x2="1642.1" y2="934.4" stroke="#ffffff" stroke-width="3.4" stroke-linecap="square"/>
<line x1="1654.8" y1="913.3" x2="1672.6" y2="594.8" stroke="#33cc22" stroke-width="1.4"/>
<circle cx="1654.8" cy="913.3" r="2.3" fill="#33cc22"/>
<text x="1662.6" y="921.5" fill="#33cc22" font-family="Liberation Sans" font-weight="bold" font-size="15.5">-4</text>
<circle cx="1657.0" cy="873.5" r="2.3" fill="#33cc22"/>
<text x="1664.8" y="881.7" fill="#33cc22" font-family="Liberation Sans" font-weight="bold" font-size="15.5">-3</text>
<circle cx="1659.2" cy="833.7" r="2.3" fill="#33cc22"/>
<text x="1667.0" y="841.9" fill="#33cc22" font-family="Liberation Sans" font-weight="bold" font-size="15.5">-2</text>
<circle cx="1661.5" cy="793.9" r="2.3" fill="#33cc22"/>
<text x="1669.3" y="802.1" fill="#33cc22" font-family="Liberation Sans" font-weight="bold" font-size="15.5">-1</text>
<circle cx="1663.7" cy="754.0" r="2.3" fill="#33cc22"/>
<text x="1671.5" y="762.2" fill="#33cc22" font-family="Liberation Sans" font-weight="bold" font-size="15.5">0</text>
<circle cx="1665.9" cy="714.2" r="2.3" fill="#33cc22"/>
<text x="1673.7" y="722.4" fill="#33cc22" font-family="Liberation Sans" font-weight="bold" font-size="15.5">+1</text>
<circle cx="1668.2" cy="674.4" r="2.3" fill="#33cc22"/>
<text x="1676.0" y="682.6" fill="#33cc22" font-family="Liberation Sans" font-weight="bold" font-size="15.5">+2</text>
<circle cx="1670.4" cy="634.6" r="2.3" fill="#33cc22"/>
<text x="1678.2" y="642.8" fill="#33cc22" font-family="Liberation Sans" font-weight="bold" font-size="15.5">+3</text>
<circle cx="1672.6" cy="594.8" r="2.3" fill="#33cc22"/>
<text x="1680.4" y="603.0" fill="#33cc22" font-family="Liberation Sans" font-weight="bold" font-size="15.5">+4</text>
<text x="1695.7" y="759.0" fill="#33cc22" font-family="Liberation Sans" font-weight="bold" font-size="15.5">Y</text>
<line x1="1141.1" y1="1023.6" x2="1474.7" y2="1104.4" stroke="#ff5511" stroke-width="1.4"/>
<circle cx="1141.1" cy="1023.6" r="2.3" fill="#ff5511"/>
<text x="1131.6" y="1049.1" fill="#ff5511" font-family="Liberation Sans" font-weight="bold" font-size="15.5">-4</text>
<circle cx="1182.8" cy="1033.7" r="2.3" fill="#ff5511"/>
<text x="1173.3" y="1059.2" fill="#ff5511" font-family="Liberation Sans" font-weight="bold" font-size="15.5">-3</text>
<circle cx="1224.5" cy="1043.8" r="2.3" fill="#ff5511"/>
<text x="1215.0" y="1069.3" fill="#ff5511" font-family="Liberation Sans" font-weight="bold" font-size="15.5">-2</text>
<circle cx="1266.2" cy="1053.9" r="2.3" fill="#ff5511"/>
<text x="1256.7" y="1079.4" fill="#ff5511" font-family="Liberation Sans" font-weight="bold" font-size="15.5">-1</text>
<circle cx="1307.9" cy="1064.0" r="2.3" fill="#ff5511"/>
<text x="1298.4" y="1089.5" fill="#ff5511" font-family="Liberation Sans" font-weight="bold" font-size="15.5">0</text>
<circle cx="1349.6" cy="1074.1" r="2.3" fill="#ff5511"/>
<text x="1340.1" y="1099.6" fill="#ff5511" font-family="Liberation Sans" font-weight="bold" font-size="15.5">+1</text>
<circle cx="1391.3" cy="1084.2" r="2.3" fill="#ff5511"/>
<text x="1381.8" y="1109.7" fill="#ff5511" font-family="Liberation Sans" font-weight="bold" font-size="15.5">+2</text>
<circle cx="1433.0" cy="1094.3" r="2.3" fill="#ff5511"/>
<text x="1423.5" y="1119.8" fill="#ff5511" font-family="Liberation Sans" font-weight="bold" font-size="15.5">+3</text>
<circle cx="1474.7" cy="1104.4" r="2.3" fill="#ff5511"/>
<text x="1465.2" y="1129.9" fill="#ff5511" font-family="Liberation Sans" font-weight="bold" font-size="15.5">+4</text>
<line x1="1643.8" y1="951.9" x2="1524.2" y2="1097.3" stroke="#22bbff" stroke-width="1.4"/>
<circle cx="1643.8" cy="951.9" r="2.3" fill="#22bbff"/>
<text x="1641.8" y="975.9" fill="#22bbff" font-family="Liberation Sans" font-weight="bold" font-size="15.5">-4</text>
<circle cx="1628.8" cy="970.1" r="2.3" fill="#22bbff"/>
<text x="1626.8" y="994.1" fill="#22bbff" font-family="Liberation Sans" font-weight="bold" font-size="15.5">-3</text>
<circle cx="1613.9" cy="988.3" r="2.3" fill="#22bbff"/>
<text x="1611.9" y="1012.3" fill="#22bbff" font-family="Liberation Sans" font-weight="bold" font-size="15.5">-2</text>
<circle cx="1599.0" cy="1006.4" r="2.3" fill="#22bbff"/>
<text x="1597.0" y="1030.4" fill="#22bbff" font-family="Liberation Sans" font-weight="bold" font-size="15.5">-1</text>
<circle cx="1584.0" cy="1024.6" r="2.3" fill="#22bbff"/>
<text x="1582.0" y="1048.6" fill="#22bbff" font-family="Liberation Sans" font-weight="bold" font-size="15.5">0</text>
<circle cx="1569.0" cy="1042.8" r="2.3" fill="#22bbff"/>
<text x="1567.0" y="1066.8" fill="#22bbff" font-family="Liberation Sans" font-weight="bold" font-size="15.5">+1</text>
<circle cx="1554.1" cy="1060.9" r="2.3" fill="#22bbff"/>
<text x="1552.1" y="1084.9" fill="#22bbff" font-family="Liberation Sans" font-weight="bold" font-size="15.5">+2</text>
<circle cx="1539.2" cy="1079.1" r="2.3" fill="#22bbff"/>
<text x="1537.2" y="1103.1" fill="#22bbff" font-family="Liberation Sans" font-weight="bold" font-size="15.5">+3</text>
<circle cx="1524.2" cy="1097.3" r="2.3" fill="#22bbff"/>
<text x="1522.2" y="1121.3" fill="#22bbff" font-family="Liberation Sans" font-weight="bold" font-size="15.5">+4</text>
<text x="1599.0" y="1065.6" fill="#22bbff" font-family="Liberation Sans" font-weight="bold" font-size="15.5">Z</text>
</svg>
</div>
<!-- toolbar icons in bottom view -->
<svg class="a" style="left:1770px;top:504px" width="136" height="32">
 <g fill="none" stroke="#fdf0e6" stroke-width="2" stroke-dasharray="2 2">
  <path d="M13,5 H20 L25,10 V21 L20,26 H13 L8,21 V10 Z"/>
  <rect x="71" y="9" width="25" height="14"/>
 </g>
 <path d="M49,5 V29" stroke="#33cc22" stroke-width="2" stroke-dasharray="2 2"/>
 <path d="M38,15 H60" stroke="#ff1050" stroke-width="2" stroke-dasharray="2 2"/>
 <path d="M41,24 L56,9" stroke="#0030ff" stroke-width="2" stroke-dasharray="2 2"/>
 <rect x="48" y="14" width="2" height="2" fill="#fff"/>
 <path d="M115,5 H110 L107,9 V20 L112,26 M113,20 V26 H118 M123,5 H129 V12 L131,15 V22 L128,26 H123 M123,5 V11" stroke="#fdf0e6" stroke-width="2.5" fill="none"/>
</svg>
<!-- comparison results -->
<div class="a" style="left:894px;top:504px;width:304px;height:130px;background:#000"></div>
<div class="a" style="left:897px;top:506px;width:299px;height:126px;background:#c5c5c9"></div>
<div class="a" style="left:899px;top:508px;width:295px;height:122px;background:#000"></div>
<div class="a" style="left:900px;top:509px;width:293px;height:120px;background:#fdf0e6"></div>
<div class="a" style="left:900px;top:509px;width:293px;height:23px;background:#2aacff"></div>
<div class="t" id="chill" style="left:1490.0px;top:11.78px;font-size:20.35px;color:#fdf0e6;font-family:'Liberation Sans',sans-serif;transform:scaleX(0.9003);">Chill beats to relax&amp;make cubes to</div>
<div class="t" id="date" style="left:1798.0px;top:1.38px;font-size:20.35px;color:#fdf0e6;font-family:'Liberation Sans',sans-serif;transform:scaleX(0.8118);">THU 2025.1.23</div>
<div class="t" id="time" style="left:1838.0px;top:23.28px;font-size:20.35px;color:#fdf0e6;font-family:'Liberation Sans',sans-serif;transform:scaleX(0.8269);">08:36 PM</div>
<div class="t" id="rc" style="left:920.0px;top:57.99px;font-size:19.62px;color:#000;font-family:'Liberation Sans',sans-serif;transform:scaleX(0.7197);">REPLICUBE</div>
<div class="t" id="hdr" style="left:21.7px;top:91.38px;font-size:20.35px;color:#f3eee4;font-family:'Liberation Sans',sans-serif;transform:scaleX(0.7926);">RepliCUBE Actions</div>
<div class="t" id="csz" style="left:21.7px;top:956.20px;font-size:18.90px;color:#2d5590;font-family:'Liberation Sans',sans-serif;transform:scaleX(0.8657);">Code size: 50</div>
<div class="t" id="cyc" style="left:720.0px;top:956.30px;font-size:18.90px;color:#2d5590;font-family:'Liberation Sans',sans-serif;transform:scaleX(0.9298);">Cycles / voxel: 7.11</div>
<div class="t" id="run" style="left:217.7px;top:986.90px;font-size:18.90px;color:#000;font-family:'Liberation Sans',sans-serif;transform:scaleX(0.8516);">RUN CODE (CTRL+R)</div>
<div class="t" id="auto" style="left:596.0px;top:987.24px;font-size:19.62px;color:#000;font-family:'Liberation Sans',sans-serif;transform:scaleX(0.9123);">Auto run code as I type</div>
<div class="t" id="tab1" style="left:919.2px;top:127.48px;font-size:20.35px;color:#000;font-family:'Liberation Sans',sans-serif;transform:scaleX(0.9159);">Reference Object</div>
<div class="t" id="tab2" style="left:1086.0px;top:127.48px;font-size:20.35px;color:#3a332e;font-family:'Liberation Sans',sans-serif;transform:scaleX(0.9134);">Documentation</div>
<div class="t" id="cmp" style="left:952.0px;top:510.73px;font-size:18.31px;color:#000;font-family:'Liberation Sans',sans-serif;transform:scaleX(0.8687);">COMPARISON RESULTS</div>
<div class="t" id="sm" style="left:912.0px;top:540.15px;font-size:20.06px;color:#000;font-family:'Liberation Sans',sans-serif;transform:scaleX(0.8846);">Shape Match</div>
<div class="t" id="smv" style="left:1108.0px;top:540.15px;font-size:20.06px;color:#000;font-family:'Liberation Sans',sans-serif;transform:scaleX(0.7941);">96.16%</div>
<div class="t" id="om" style="left:912.0px;top:569.85px;font-size:20.06px;color:#000;font-family:'Liberation Sans',sans-serif;transform:scaleX(0.9428);">Overall Match</div>
<div class="t" id="omv" style="left:1108.0px;top:569.85px;font-size:20.06px;color:#000;font-family:'Liberation Sans',sans-serif;transform:scaleX(0.7941);">91.36%</div>
<div class="t" id="pv" style="left:1599.6px;top:1029.58px;font-size:20.35px;color:#f0ece6;font-family:'Liberation Sans',sans-serif;transform:scaleX(0.9115);text-shadow:1px 1px 0 #142033,-1px -1px 0 #142033,1px -1px 0 #142033,-1px 1px 0 #142033,0 2px 0 #142033;">Playtest Version 03B (January 2025)</div>
<div class="t" id="p1" style="left:41.0px;top:1030.60px;width:0;font-size:18.90px;color:#000;font-family:'Liberation Sans',sans-serif;"><span style="position:absolute;left:0;transform:translateX(-50%)">1</span></div>
<div class="t" id="p2" style="left:95.0px;top:1030.60px;width:0;font-size:18.90px;color:#000;font-family:'Liberation Sans',sans-serif;"><span style="position:absolute;left:0;transform:translateX(-50%)">2</span></div>
<div class="t" id="p3" style="left:149.0px;top:1030.60px;width:0;font-size:18.90px;color:#000;font-family:'Liberation Sans',sans-serif;"><span style="position:absolute;left:0;transform:translateX(-50%)">3</span></div>
<div class="t" id="p4" style="left:203.0px;top:1030.60px;width:0;font-size:18.90px;color:#000;font-family:'Liberation Sans',sans-serif;"><span style="position:absolute;left:0;transform:translateX(-50%)">4</span></div>
<div class="t" id="p5" style="left:257.0px;top:1030.60px;width:0;font-size:18.90px;color:#000;font-family:'Liberation Sans',sans-serif;"><span style="position:absolute;left:0;transform:translateX(-50%)">5</span></div>
<div class="t" id="p6" style="left:311.0px;top:1030.60px;width:0;font-size:18.90px;color:#000;font-family:'Liberation Sans',sans-serif;"><span style="position:absolute;left:0;transform:translateX(-50%)">6</span></div>
<div class="t" id="p7" style="left:365.0px;top:1030.60px;width:0;font-size:18.90px;color:#000;font-family:'Liberation Sans',sans-serif;"><span style="position:absolute;left:0;transform:translateX(-50%)">7</span></div>
<div class="t" id="p8" style="left:419.0px;top:1030.60px;width:0;font-size:18.90px;color:#000;font-family:'Liberation Sans',sans-serif;"><span style="position:absolute;left:0;transform:translateX(-50%)">8</span></div>
<div class="t" id="p9" style="left:473.0px;top:1030.60px;width:0;font-size:18.90px;color:#000;font-family:'Liberation Sans',sans-serif;"><span style="position:absolute;left:0;transform:translateX(-50%)">9</span></div>
<div class="t" id="p10" style="left:527.0px;top:1030.60px;width:0;font-size:18.90px;color:#000;font-family:'Liberation Sans',sans-serif;"><span style="position:absolute;left:0;transform:translateX(-50%)">10</span></div>
<div class="t" id="p11" style="left:581.0px;top:1030.60px;width:0;font-size:18.90px;color:#000;font-family:'Liberation Sans',sans-serif;"><span style="position:absolute;left:0;transform:translateX(-50%)">11</span></div>
<div class="t" id="p12" style="left:635.0px;top:1030.60px;width:0;font-size:18.90px;color:#000;font-family:'Liberation Sans',sans-serif;"><span style="position:absolute;left:0;transform:translateX(-50%)">12</span></div>
<div class="t" id="p13" style="left:689.0px;top:1030.60px;width:0;font-size:18.90px;color:#000;font-family:'Liberation Sans',sans-serif;"><span style="position:absolute;left:0;transform:translateX(-50%)">13</span></div>
<div class="t" id="p14" style="left:743.0px;top:1030.60px;width:0;font-size:18.90px;color:#000;font-family:'Liberation Sans',sans-serif;"><span style="position:absolute;left:0;transform:translateX(-50%)">14</span></div>
<div class="t" id="p15" style="left:797.0px;top:1030.60px;width:0;font-size:18.90px;color:#000;font-family:'Liberation Sans',sans-serif;"><span style="position:absolute;left:0;transform:translateX(-50%)">15</span></div>
<div class="t" id="p16" style="left:851.0px;top:1030.60px;width:0;font-size:18.90px;color:#000;font-family:'Liberation Sans',sans-serif;"><span style="position:absolute;left:0;transform:translateX(-50%)">16</span></div>
</body></html>
